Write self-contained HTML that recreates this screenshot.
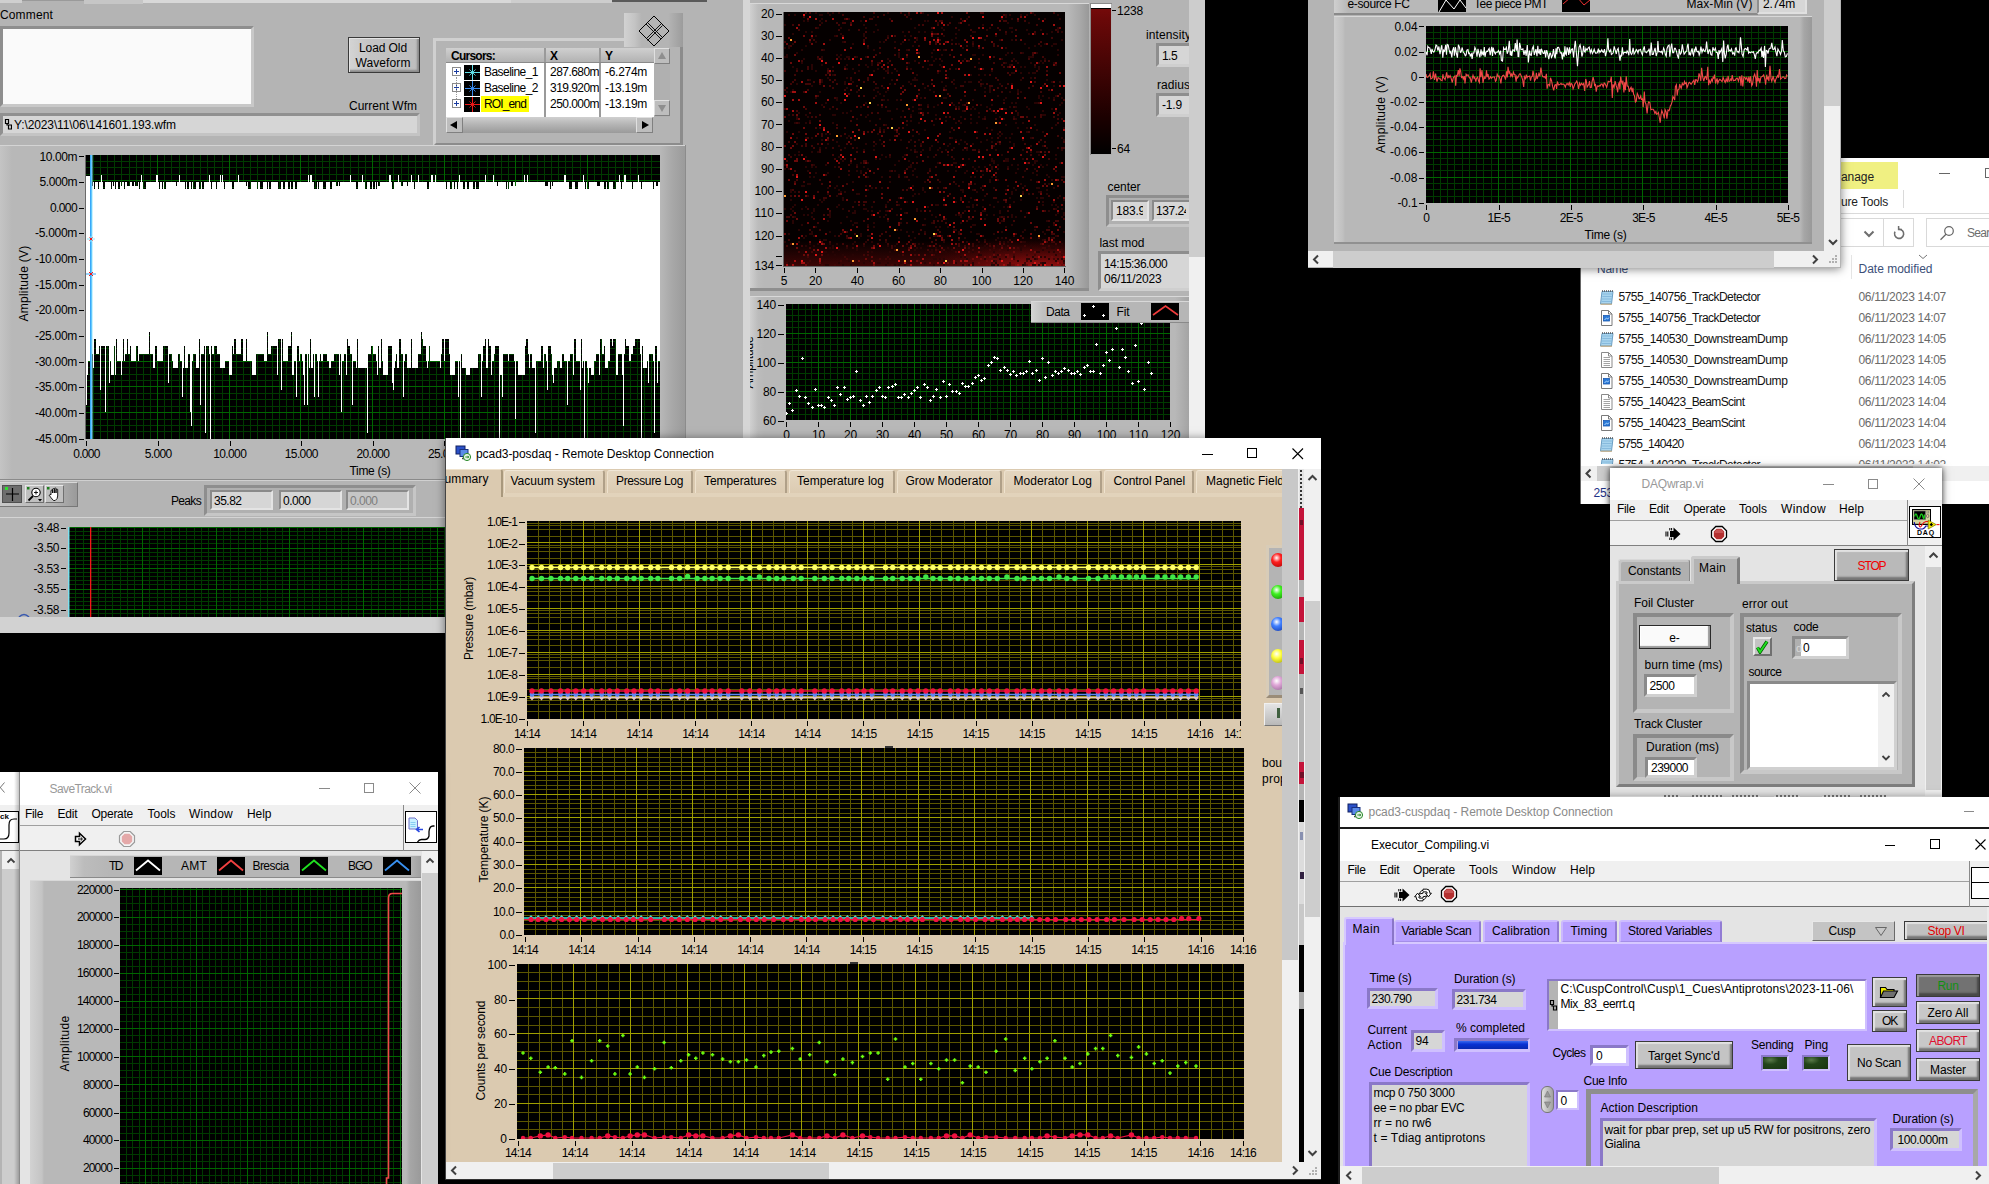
<!DOCTYPE html>
<html><head><meta charset="utf-8"><title>desktop</title>
<style>
html,body{margin:0;padding:0;}
body{background:#000;width:1989px;height:1184px;overflow:hidden;position:relative;font-family:"Liberation Sans",sans-serif;font-size:12px;}
div,svg{position:absolute;}
.win{left:0;top:0;width:1989px;height:1184px;}
</style></head><body>

<!-- partA -->
<div class="win" style="clip-path:inset(0px 784px 551px 0px)"><div style="left:0px;top:0px;width:743px;height:617px;background:#b4b4b4;"></div>
<div style="left:0px;top:616px;width:743px;height:17px;background:#d2d2d2;"></div>
<div style="left:743px;top:0px;width:7px;height:438px;background:#d6d6d6;"></div>
<div style="left:750px;top:0px;width:439px;height:438px;background:#b4b4b4;"></div>
<div style="left:1189px;top:0px;width:16px;height:257px;background:#cdcdcd;"></div>
<div style="left:1189px;top:257px;width:16px;height:181px;background:#f0f0f0;"></div>
<div style="left:0px;top:0px;width:22px;height:3px;background:#cfcfcf;"></div>
<div style="left:22px;top:0px;width:62px;height:1px;background:#9a9a9a;"></div>
<div style="left:84px;top:0px;width:59px;height:4px;background:#c6c6c6;"></div>
<div style="left:143px;top:0px;width:368px;height:3px;background:#d8d8d8;"></div>
<div style="left:511px;top:0px;width:101px;height:3px;background:#cdcdcd;"></div>
<div style="left:612px;top:0px;width:95px;height:2px;background:#5a5a5a;"></div>
<div style="top:8.00px;font-size:12px;line-height:15px;color:#000;white-space:nowrap;letter-spacing:0.140px;left:0px;">Comment</div>
<div style="left:0px;top:26px;width:254px;height:81px;background:#fafafa;box-sizing:border-box;border:3px solid;border-color:#8e8e8e #c8c8c8 #c8c8c8 #8e8e8e;"></div>
<div style="left:348px;top:37px;width:72px;height:36px;background:#c8c8c8;box-sizing:border-box;border:1px solid #3a3a3a;box-shadow:inset 1px 1px 0 #e4e4e4, inset -2px -2px 2px #8a8a8a;background:linear-gradient(90deg,#d4d4d4,#c4c4c4 30%,#bebebe);"></div>
<div style="top:40.50px;font-size:12px;line-height:15px;color:#000;white-space:nowrap;letter-spacing:-0.090px;left:83px;width:600px;text-align:center;">Load Old</div>
<div style="top:55.50px;font-size:12px;line-height:15px;color:#000;white-space:nowrap;letter-spacing:0.095px;left:83px;width:600px;text-align:center;">Waveform</div>
<div style="top:98.50px;font-size:12px;line-height:15px;color:#000;white-space:nowrap;letter-spacing:-0.002px;left:349px;">Current Wfm</div>
<div style="left:0px;top:113px;width:420px;height:23px;background:#d6d6d6;box-sizing:border-box;border:3px solid;border-color:#909090 #c4c4c4 #c4c4c4 #909090;"></div>
<svg style="left:4px;top:118px;" width="8" height="12" viewBox="0 0 8 12" ><path d="M1.5 1.5h3v4h-3zM3 5.5v1.5h2.5M4.5 7h3v4h-3z" stroke="#000" fill="none" stroke-width="1.2"/></svg>
<div style="top:117.50px;font-size:12px;line-height:15px;color:#000;white-space:nowrap;letter-spacing:-0.118px;left:14px;">Y:\2023\11\06\141601.193.wfm</div>
<div style="left:433px;top:38px;width:250px;height:108px;background:#b4b4b4;box-sizing:border-box;border:3px solid;border-color:#d0d0d0 #8c8c8c #8c8c8c #d0d0d0;"></div>
<div style="left:624px;top:13px;width:59px;height:34px;background:#b8b8b8;box-sizing:border-box;border:3px solid;border-color:#d6d6d6 #8c8c8c #8c8c8c #d6d6d6;background:linear-gradient(90deg,#d2d2d2 0,#c4c4c4 18%,#b4b4b4 30%,#b4b4b4 75%,#9c9c9c 100%);border:none;"></div>
<svg style="left:636px;top:14px;" width="36" height="34" viewBox="0 0 36 34" ><path d="M18 2L33 17L18 32L3 17Z" fill="none" stroke="#000" stroke-width="1"/><path d="M10 10L25 25M11.5 8.5L26.5 23.5M25 10L10 25M26.5 11.5L11.5 26.5" stroke="#000" stroke-width="0.9"/></svg>
<div style="left:446px;top:48px;width:208px;height:69px;background:#fff;"></div>
<div style="left:446px;top:48px;width:208px;height:15px;background:#c0c0c0;background:linear-gradient(#d0d0d0,#b0b0b0);"></div>
<div style="left:544px;top:48px;width:2px;height:69px;background:#9a9a9a;"></div>
<div style="left:599px;top:48px;width:2px;height:69px;background:#9a9a9a;"></div>
<div style="left:446px;top:62px;width:208px;height:1px;background:#8a8a8a;"></div>
<div style="top:48.50px;font-size:12px;line-height:15px;color:#000;white-space:nowrap;letter-spacing:-0.753px;font-weight:bold;left:451px;">Cursors:</div>
<div style="top:48.50px;font-size:12px;line-height:15px;color:#000;white-space:nowrap;font-weight:bold;left:550px;">X</div>
<div style="top:48.50px;font-size:12px;line-height:15px;color:#000;white-space:nowrap;font-weight:bold;left:605px;">Y</div>
<svg style="left:452px;top:67px;" width="9" height="9" viewBox="0 0 9 9" ><rect x="0.5" y="0.5" width="8" height="8" fill="#fff" stroke="#8a8a8a"/><path d="M2 4.5h5M4.5 2v5" stroke="#1a3ca0" stroke-width="1"/></svg>
<div style="left:464px;top:65px;width:16px;height:15px;background:#000;"></div>
<svg style="left:464px;top:65px;" width="16" height="15" viewBox="0 0 16 15" ><path d="M8.5 0v15M1 7.5h15" stroke="#5fe0e8" stroke-width="1" shape-rendering="crispEdges"/><path d="M5.5 4.5l6 6M11.5 4.5l-6 6" stroke="#5fe0e8" stroke-width="0.9"/></svg>
<div style="top:65.00px;font-size:12px;line-height:15px;color:#000;white-space:nowrap;letter-spacing:-0.539px;left:484px;">Baseline_1</div>
<div style="top:65.00px;font-size:12px;line-height:15px;color:#000;white-space:nowrap;letter-spacing:-0.548px;left:550px;width:49px;overflow:hidden;">287.680m</div>
<div style="top:65.00px;font-size:12px;line-height:15px;color:#000;white-space:nowrap;letter-spacing:-0.290px;left:605px;">-6.274m</div>
<svg style="left:452px;top:83px;" width="9" height="9" viewBox="0 0 9 9" ><rect x="0.5" y="0.5" width="8" height="8" fill="#fff" stroke="#8a8a8a"/><path d="M2 4.5h5M4.5 2v5" stroke="#1a3ca0" stroke-width="1"/></svg>
<div style="left:464px;top:81px;width:16px;height:15px;background:#000;"></div>
<svg style="left:464px;top:81px;" width="16" height="15" viewBox="0 0 16 15" ><path d="M8.5 0v15M1 7.5h15" stroke="#3a8cf0" stroke-width="1" shape-rendering="crispEdges"/><path d="M5.5 4.5l6 6M11.5 4.5l-6 6" stroke="#3a8cf0" stroke-width="0.9"/></svg>
<div style="top:81.00px;font-size:12px;line-height:15px;color:#000;white-space:nowrap;letter-spacing:-0.539px;left:484px;">Baseline_2</div>
<div style="top:81.00px;font-size:12px;line-height:15px;color:#000;white-space:nowrap;letter-spacing:-0.548px;left:550px;width:49px;overflow:hidden;">319.920m</div>
<div style="top:81.00px;font-size:12px;line-height:15px;color:#000;white-space:nowrap;letter-spacing:-0.290px;left:605px;">-13.19m</div>
<svg style="left:452px;top:99px;" width="9" height="9" viewBox="0 0 9 9" ><rect x="0.5" y="0.5" width="8" height="8" fill="#fff" stroke="#8a8a8a"/><path d="M2 4.5h5M4.5 2v5" stroke="#1a3ca0" stroke-width="1"/></svg>
<div style="left:464px;top:97px;width:16px;height:15px;background:#000;"></div>
<svg style="left:464px;top:97px;" width="16" height="15" viewBox="0 0 16 15" ><path d="M8.5 0v15M1 7.5h15" stroke="#f01818" stroke-width="1" shape-rendering="crispEdges"/><path d="M5.5 4.5l6 6M11.5 4.5l-6 6" stroke="#f01818" stroke-width="0.9"/></svg>
<div style="left:481px;top:96px;width:48px;height:16px;background:#ffff00;"></div>
<div style="top:97.00px;font-size:12px;line-height:15px;color:#000;white-space:nowrap;letter-spacing:-0.863px;left:484px;">ROI_end</div>
<div style="top:97.00px;font-size:12px;line-height:15px;color:#000;white-space:nowrap;letter-spacing:-0.548px;left:550px;width:49px;overflow:hidden;">250.000m</div>
<div style="top:97.00px;font-size:12px;line-height:15px;color:#000;white-space:nowrap;letter-spacing:-0.290px;left:605px;">-13.19m</div>
<div style="left:456px;top:77px;width:1px;height:22px;border-left:1px dotted #999;"></div>
<div style="left:654px;top:48px;width:16px;height:69px;background:#b0b0b0;"></div>
<div style="left:654px;top:48px;width:16px;height:16px;background:#bdbdbd;box-sizing:border-box;border:1px solid;border-color:#e0e0e0 #808080 #808080 #e0e0e0;"></div>
<div style="left:654px;top:100px;width:16px;height:16px;background:#bdbdbd;box-sizing:border-box;border:1px solid;border-color:#e0e0e0 #808080 #808080 #e0e0e0;"></div>
<svg style="left:654px;top:48px;" width="16" height="16" viewBox="0 0 16 16" ><path d="M8 4L12 11H4Z" fill="#8e8e8e"/></svg>
<svg style="left:654px;top:100px;" width="16" height="16" viewBox="0 0 16 16" ><path d="M8 12L12 5H4Z" fill="#8e8e8e"/></svg>
<div style="left:446px;top:117px;width:207px;height:16px;background:#b0b0b0;background:linear-gradient(#d0d0d0,#b8b8b8 40%,#9a9a9a);"></div>
<div style="left:446px;top:117px;width:17px;height:16px;background:#bdbdbd;box-sizing:border-box;border:1px solid;border-color:#e0e0e0 #808080 #808080 #e0e0e0;"></div>
<div style="left:636px;top:117px;width:17px;height:16px;background:#bdbdbd;box-sizing:border-box;border:1px solid;border-color:#e0e0e0 #808080 #808080 #e0e0e0;"></div>
<svg style="left:446px;top:117px;" width="17" height="16" viewBox="0 0 17 16" ><path d="M4 8L11 4V12Z" fill="#000"/></svg>
<svg style="left:636px;top:117px;" width="17" height="16" viewBox="0 0 17 16" ><path d="M13 8L6 4V12Z" fill="#000"/></svg>
<div style="left:0px;top:145px;width:685px;height:335px;background:#b8b8b8;border-top:1px solid #d4d4d4;background:linear-gradient(90deg,#c4c4c4 0,#b8b8b8 12px,#b8b8b8 660px,#a8a8a8 672px,#9c9c9c 684px);"></div>
<div style="left:685px;top:145px;width:1px;height:335px;background:#8c8c8c;"></div>
<svg style="left:86px;top:155px;" width="574" height="284" viewBox="0 0 574 284" ><rect width="574" height="284" fill="#000"/><path d="M7.2 0V284M14.3 0V284M21.5 0V284M28.6 0V284M35.8 0V284M43.0 0V284M50.1 0V284M57.3 0V284M64.4 0V284M78.8 0V284M85.9 0V284M93.1 0V284M100.2 0V284M107.4 0V284M114.6 0V284M121.7 0V284M128.9 0V284M136.0 0V284M150.4 0V284M157.5 0V284M164.7 0V284M171.8 0V284M179.0 0V284M186.2 0V284M193.3 0V284M200.5 0V284M207.6 0V284M222.0 0V284M229.1 0V284M236.3 0V284M243.4 0V284M250.6 0V284M257.8 0V284M264.9 0V284M272.1 0V284M279.2 0V284M293.6 0V284M300.7 0V284M307.9 0V284M315.0 0V284M322.2 0V284M329.4 0V284M336.5 0V284M343.7 0V284M350.8 0V284M365.2 0V284M372.3 0V284M379.5 0V284M386.6 0V284M393.8 0V284M401.0 0V284M408.1 0V284M415.3 0V284M422.4 0V284M436.8 0V284M443.9 0V284M451.1 0V284M458.2 0V284M465.4 0V284M472.6 0V284M479.7 0V284M486.9 0V284M494.0 0V284M508.4 0V284M515.5 0V284M522.7 0V284M529.8 0V284M537.0 0V284M544.2 0V284M551.3 0V284M558.5 0V284M565.6 0V284M0 6.4H574M0 12.9H574M0 19.3H574M0 32.2H574M0 38.6H574M0 45.1H574M0 58.0H574M0 64.4H574M0 70.8H574M0 83.7H574M0 90.2H574M0 96.6H574M0 109.5H574M0 115.9H574M0 122.4H574M0 135.2H574M0 141.7H574M0 148.1H574M0 161.0H574M0 167.4H574M0 173.9H574M0 186.8H574M0 193.2H574M0 199.6H574M0 212.5H574M0 219.0H574M0 225.4H574M0 238.3H574M0 244.7H574M0 251.2H574M0 264.0H574M0 270.5H574M0 276.9H574" stroke="#003a00" stroke-width="1" fill="none" shape-rendering="crispEdges"/><path d="M71.6 0V284M143.2 0V284M214.8 0V284M286.4 0V284M358.0 0V284M429.6 0V284M501.2 0V284M0 25.8H574M0 51.5H574M0 77.2H574M0 103.0H574M0 128.8H574M0 154.5H574M0 180.2H574M0 206.0H574M0 231.8H574M0 257.5H574" stroke="#006600" stroke-width="1" fill="none" shape-rendering="crispEdges"/><path d="M0 21H1H2H3H4H5H6V31H7V27H8V34H9V27H10H11H12V34H13V27H14H15V20H16V27H17V34H18H19V27H20H21H22H23H24H25V34H26V27H27V31H28V27H29V34H30V27H31H32V34H33H34V27H35V31H36V27H37H38V34H39V27H40H41V31H42H43H44V27H45H46V31H47H48V27H49V31H50H51H52V27H53V34H54V27H55V20H56V27H57V34H58H59H60V27H61H62H63H64H65H66H67H68H69H70V20H71H72V27H73V34H74V27H75H76V34H77V27H78V34H79H80V27H81H82H83H84H85H86H87H88H89H90V31H91V27H92H93V20H94V27H95H96H97H98H99V34H100V27H101V34H102H103V27H104H105V34H106V27H107V34H108H109H110V27H111H112H113V34H114H115V27H116V34H117H118V27H119H120H121H122H123V20H124V27H125V34H126V27H127H128H129H130V34H131V27H132H133H134V20H135V27H136V20H137V27H138V34H139V27H140H141H142H143H144H145H146V34H147H148V27H149H150H151H152V20H153V27H154H155H156H157H158H159H160V31H161V27H162V34H163H164H165V27H166H167H168H169H170H171V34H172V27H173H174V34H175H176H177V27H178H179H180H181V34H182V27H183V34H184H185V27H186H187H188H189H190H191H192V34H193H194H195V27H196H197V34H198H199V27H200H201H202V34H203H204V27H205V34H206H207V27H208H209V34H210H211V27H212H213H214H215H216H217H218H219H220H221H222V20H223V27H224V20H225H226V27H227H228V34H229H230H231V27H232V34H233V27H234H235H236H237V34H238H239H240V27H241H242H243H244V34H245H246V27H247H248H249H250V31H251H252V27H253V31H254V27H255H256H257H258H259H260H261H262H263H264V20H265V27H266H267H268H269H270V34H271H272V27H273H274H275H276V20H277V27H278H279V34H280H281V27H282H283H284V34H285H286V27H287V34H288H289V27H290V34H291V27H292V31H293H294V27H295H296H297H298H299H300H301H302H303V20H304H305V27H306V34H307H308V27H309H310H311H312V20H313V27H314H315V31H316H317V27H318H319H320H321V31H322V27H323H324H325V20H326V27H327H328V34H329V27H330H331H332V20H333V27H334H335H336H337H338H339H340H341V34H342H343V27H344H345V20H346H347V27H348H349V20H350V27H351H352H353H354H355H356H357H358H359H360V34H361V27H362H363H364V34H365H366V27H367H368V34H369V27H370H371V34H372V27H373V20H374V27H375H376H377V34H378H379V27H380H381V34H382H383V27H384H385H386H387V34H388H389V27H390V34H391H392H393V27H394H395H396H397H398H399V20H400V27H401H402H403H404H405H406H407V20H408V27H409H410H411V31H412V27H413H414H415H416H417H418H419H420V34H421V27H422V34H423V27H424H425V31H426H427V27H428H429V31H430V27H431H432H433H434H435H436H437H438V20H439V27H440H441V20H442V27H443H444H445H446H447H448H449H450H451H452H453H454H455H456H457H458H459V31H460H461H462V27H463H464V34H465V27H466V31H467V27H468H469H470H471H472H473H474H475H476H477H478V20H479H480V27H481H482H483V34H484H485H486V27H487H488H489V34H490H491H492V27H493H494H495H496H497V20H498V27H499V34H500V27H501V34H502H503V27H504H505H506H507H508H509H510H511V31H512H513H514V27H515H516H517H518V34H519H520V27H521V34H522H523V27H524H525H526H527V34H528H529H530V27H531H532H533V20H534V27H535V34H536V27H537H538V20H539H540V27H541H542H543H544H545H546V34H547V27H548H549H550H551H552V20H553V27H554H555V34H556V27H557H558H559H560H561H562H563H564H565H566H567V34H568V27H569H570V31H571H572V27H573H574V206H573V206H572V228H571V191H570V191H569V278H568V206H567V198.5H566V198.5H565V198.5H564V198.5H563V228H562V206H561V213H560V213H559V213H558V213H557V191H556V284H555V198.5H554V184H553V184H552V184H551V184H550V184H549V191H548V191H547V198.5H546V198.5H545V206H544V206H543V191H542V191H541V191H540V184H539V198.5H538V271H537V220H536V198.5H535V198.5H534V198.5H533V198.5H532V220H531V220H530V184H529V184H528V184H527V191H526V184H525V184H524V206H523V206H522V213H521V213H520V213H519V191H518V198.5H517V198.5H516V184H515V184H514V220H513V198.5H512V198.5H511V198.5H510V206H509V206H508V220H507V220H506V220H505V213H504V213H503V228H502V213H501V206H500V206H499V284H498V206H497V213H496V184H495V235H494V206H493V206H492V206H491V206H490V184H489V184H488V220H487V198.5H486V198.5H485V198.5H484V206H483V206H482V250H481V206H480V206H479V206H478V198.5H477V198.5H476V213H475V213H474V206H473V206H472V206H471V213H470V213H469V213H468V228H467V220H466V198.5H465V191H464V191H463V191H462V235H461V206H460V198.5H459V198.5H458V213H457V191H456V191H455V206H454V206H453V206H452V206H451V206H450V278H449V213H448V213H447V213H446V198.5H445V198.5H444V213H443V198.5H442V184H441V184H440V191H439V220H438V220H437V220H436V220H435V220H434V220H433V220H432V206H431V206H430V264H429V206H428V198.5H427V198.5H426V198.5H425V198.5H424V198.5H423V206H422V198.5H421V198.5H420V198.5H419V198.5H418V198.5H417V242H416V220H415V220H414V284H413V191H412V191H411V191H410V191H409V198.5H408V206H407V206H406V220H405V191H404V191H403V184H402V213H401V213H400V184H399V191H398V191H397V206H396V242H395V198.5H394V198.5H393V198.5H392V213H391V213H390V213H389V213H388V213H387V213H386V213H385V213H384V220H383V220H382V220H381V220H380V213H379V213H378V213H377V213H376V198.5H375V284H374V206H373V242H372V206H371V206H370V206H369V220H368V220H367V220H366V220H365V220H364V198.5H363V184H362V184H361V184H360V184H359V206H358V184H357V184H356V198.5H355V213H354V206H353V206H352V206H351V206H350V206H349V206H348V206H347V206H346V206H345V206H344V191H343V206H342V213H341V206H340V191H339V191H338V191H337V184H336V177H335V198.5H334V198.5H333V198.5H332V213H331V213H330V213H329V213H328V213H327V213H326V184H325V213H324V213H323V213H322V213H321V198.5H320V198.5H319V206H318V242H317V198.5H316V198.5H315V184H314V184H313V213H312V213H311V198.5H310V206H309V213H308V235H307V228H306V191H305V191H304V191H303V191H302V220H301V220H300V220H299V220H298V220H297V206H296V184H295V213H294V213H293V191H292V220H291V206H290V198.5H289V198.5H288V198.5H287V191H286V191H285V198.5H284V198.5H283V198.5H282V278H281V213H280V213H279V213H278V213H277V213H276V213H275V213H274V213H273V213H272V184H271V213H270V206H269V206H268V206H267V250H266V198.5H265V198.5H264V191H263V191H262V184H261V220H260V198.5H259V198.5H258V206H257V206H256V257H255V198.5H254V220H253V198.5H252V198.5H251V198.5H250V198.5H249V198.5H248V206H247V206H246V206H245V213H244V213H243V206H242V206H241V198.5H240V198.5H239V198.5H238V198.5H237V206H236V206H235V198.5H234V206H233V242H232V206H231V198.5H230V198.5H229V242H228V198.5H227V213H226V213H225V184H224V213H223V198.5H222V250H221V198.5H220V198.5H219V250H218V220H217V206H216V198.5H215V198.5H214V206H213V191H212V191H211V242H210V206H209V206H208V220H207V220H206V177H205V191H204V191H203V191H202V206H201V206H200V206H199V206H198V206H197V184H196V235H195V184H194V184H193V184H192V220H191V191H190V191H189V191H188V191H187V191H186V191H185V198.5H184V198.5H183V198.5H182V177H181V206H180V206H179V206H178V198.5H177V198.5H176V198.5H175V198.5H174V198.5H173V198.5H172V198.5H171V198.5H170V220H169V220H168V220H167V220H166V206H165V206H164V206H163V206H162V206H161V184H160V206H159V206H158V206H157V184H156V184H155V198.5H154V198.5H153V198.5H152V198.5H151V198.5H150V184H149V184H148V198.5H147V191H146V220H145V220H144V220H143V206H142V206H141V206H140V206H139V213H138V213H137V213H136V213H135V213H134V198.5H133V198.5H132V198.5H131V191H130V191H129V191H128V198.5H127V198.5H126V191H125V284H124V198.5H123V191H122V191H121V191H120V278H119V191H118V198.5H117V198.5H116V198.5H115V250H114V184H113V213H112V213H111V213H110V198.5H109V198.5H108V198.5H107V206H106V271H105V257H104V198.5H103V198.5H102V213H101V213H100V213H99V191H98V213H97V242H96V206H95V206H94V198.5H93V198.5H92V213H91V213H90V213H89V213H88V213H87V206H86V198.5H85V198.5H84V198.5H83V228H82V191H81V191H80V191H79V191H78V191H77V206H76V206H75V206H74V206H73V206H72V206H71V191H70V191H69V213H68V213H67V198.5H66V198.5H65V198.5H64V177H63V198.5H62V198.5H61V198.5H60V198.5H59V198.5H58V198.5H57V198.5H56V198.5H55V198.5H54V198.5H53V206H52V191H51V191H50V206H49V206H48V206H47V206H46V206H45V191H44V198.5H43V198.5H42V184H41V198.5H40V198.5H39V206H38V184H37V206H36V220H35V206H34V206H33V206H32V206H31V184H30V220H29V191H28V220H27V220H26V220H25V206H24V228H23V191H22V191H21V191H20V257H19V191H18V191H17V191H16V191H15V235H14V191H13V198.5H12V198.5H11V198.5H10V184H9V184H8V213H7V198.5H6V213H5V206H4V206H3V206H2V220H1V250H0Z" fill="#fff" shape-rendering="crispEdges"/><rect x="4" y="0" width="2" height="284" fill="#38a8f8"/><rect x="5.5" y="0" width="1" height="284" fill="#8fe8ff"/><path d="M1 84h8M5 81v6" stroke="#8fe8ff" stroke-width="1"/><path d="M3.5 82.5l3 3M6.5 82.5l-3 3" stroke="#f01818" stroke-width="1"/><path d="M0 119h10" stroke="#38a8f8" stroke-width="1"/><path d="M3 117l4 4M7 117l-4 4" stroke="#f01818" stroke-width="1"/></svg>
<div style="left:85px;top:155px;width:1px;height:284px;background:#6a6a6a;"></div>
<div style="top:149.50px;font-size:12px;line-height:15px;color:#000;white-space:nowrap;letter-spacing:-0.423px;right:1912px;text-align:right;">10.00m</div>
<div style="left:79px;top:156px;width:5px;height:1px;background:#000;"></div>
<div style="top:175.15px;font-size:12px;line-height:15px;color:#000;white-space:nowrap;letter-spacing:-0.423px;right:1912px;text-align:right;">5.000m</div>
<div style="left:79px;top:182px;width:5px;height:1px;background:#000;"></div>
<div style="top:200.80px;font-size:12px;line-height:15px;color:#000;white-space:nowrap;letter-spacing:-0.608px;right:1912px;text-align:right;">0.000</div>
<div style="left:79px;top:208px;width:5px;height:1px;background:#000;"></div>
<div style="top:226.45px;font-size:12px;line-height:15px;color:#000;white-space:nowrap;letter-spacing:-0.290px;right:1912px;text-align:right;">-5.000m</div>
<div style="left:79px;top:233px;width:5px;height:1px;background:#000;"></div>
<div style="top:252.10px;font-size:12px;line-height:15px;color:#000;white-space:nowrap;letter-spacing:-0.290px;right:1912px;text-align:right;">-10.00m</div>
<div style="left:79px;top:259px;width:5px;height:1px;background:#000;"></div>
<div style="top:277.75px;font-size:12px;line-height:15px;color:#000;white-space:nowrap;letter-spacing:-0.290px;right:1912px;text-align:right;">-15.00m</div>
<div style="left:79px;top:285px;width:5px;height:1px;background:#000;"></div>
<div style="top:303.40px;font-size:12px;line-height:15px;color:#000;white-space:nowrap;letter-spacing:-0.290px;right:1912px;text-align:right;">-20.00m</div>
<div style="left:79px;top:310px;width:5px;height:1px;background:#000;"></div>
<div style="top:329.05px;font-size:12px;line-height:15px;color:#000;white-space:nowrap;letter-spacing:-0.290px;right:1912px;text-align:right;">-25.00m</div>
<div style="left:79px;top:336px;width:5px;height:1px;background:#000;"></div>
<div style="top:354.70px;font-size:12px;line-height:15px;color:#000;white-space:nowrap;letter-spacing:-0.290px;right:1912px;text-align:right;">-30.00m</div>
<div style="left:79px;top:362px;width:5px;height:1px;background:#000;"></div>
<div style="top:380.35px;font-size:12px;line-height:15px;color:#000;white-space:nowrap;letter-spacing:-0.290px;right:1912px;text-align:right;">-35.00m</div>
<div style="left:79px;top:387px;width:5px;height:1px;background:#000;"></div>
<div style="top:406.00px;font-size:12px;line-height:15px;color:#000;white-space:nowrap;letter-spacing:-0.290px;right:1912px;text-align:right;">-40.00m</div>
<div style="left:79px;top:413px;width:5px;height:1px;background:#000;"></div>
<div style="top:431.65px;font-size:12px;line-height:15px;color:#000;white-space:nowrap;letter-spacing:-0.290px;right:1912px;text-align:right;">-45.00m</div>
<div style="left:79px;top:439px;width:5px;height:1px;background:#000;"></div>
<div style="left:-176px;top:275.50px;width:400px;text-align:center;font-size:12px;line-height:15px;color:#000;white-space:nowrap;transform:rotate(-90deg);transform-origin:50% 50%;letter-spacing:0.253px;">Amplitude (V)</div>
<div style="left:86px;top:441px;width:1px;height:5px;background:#000;"></div>
<div style="top:446.50px;font-size:12px;line-height:15px;color:#000;white-space:nowrap;letter-spacing:-0.708px;left:-213.5px;width:600px;text-align:center;">0.000</div>
<div style="left:158px;top:441px;width:1px;height:5px;background:#000;"></div>
<div style="top:446.50px;font-size:12px;line-height:15px;color:#000;white-space:nowrap;letter-spacing:-0.708px;left:-141.9px;width:600px;text-align:center;">5.000</div>
<div style="left:230px;top:441px;width:1px;height:5px;background:#000;"></div>
<div style="top:446.50px;font-size:12px;line-height:15px;color:#000;white-space:nowrap;letter-spacing:-0.619px;left:-70.30000000000001px;width:600px;text-align:center;">10.000</div>
<div style="left:301px;top:441px;width:1px;height:5px;background:#000;"></div>
<div style="top:446.50px;font-size:12px;line-height:15px;color:#000;white-space:nowrap;letter-spacing:-0.619px;left:1.2999999999999545px;width:600px;text-align:center;">15.000</div>
<div style="left:373px;top:441px;width:1px;height:5px;background:#000;"></div>
<div style="top:446.50px;font-size:12px;line-height:15px;color:#000;white-space:nowrap;letter-spacing:-0.619px;left:72.89999999999998px;width:600px;text-align:center;">20.000</div>
<div style="left:444px;top:441px;width:1px;height:5px;background:#000;"></div>
<div style="top:446.50px;font-size:12px;line-height:15px;color:#000;white-space:nowrap;letter-spacing:-0.619px;left:144.5px;width:600px;text-align:center;">25.000</div>
<div style="top:463.50px;font-size:12px;line-height:15px;color:#000;white-space:nowrap;letter-spacing:-0.319px;left:70px;width:600px;text-align:center;">Time (s)</div>
<div style="left:0px;top:479px;width:743px;height:1px;background:#8a8a8a;"></div>
<div style="left:0px;top:480px;width:743px;height:1px;background:#d0d0d0;"></div>
<div style="left:0px;top:482px;width:78px;height:25px;background:#b0b0b0;background:linear-gradient(90deg,#c8c8c8,#b4b4b4 70%,#9a9a9a);border-right:1px solid #777;border-bottom:1px solid #777;border-top:1px solid #d8d8d8;box-sizing:border-box;"></div>
<div style="left:2px;top:485px;width:20px;height:18px;background:#6e6e6e;box-sizing:border-box;border:1px solid #505050;"></div>
<svg style="left:2px;top:485px;" width="20" height="18" viewBox="0 0 20 18" ><path d="M4 9h13M10.5 3v13" stroke="#000" stroke-width="1.2"/><rect x="3" y="2" width="3" height="3" fill="#30e030"/></svg>
<div style="left:25px;top:485px;width:19px;height:18px;background:#c0c0c0;box-sizing:border-box;border:1px solid;border-color:#e8e8e8 #707070 #707070 #e8e8e8;"></div>
<svg style="left:25px;top:485px;" width="19" height="18" viewBox="0 0 19 18" ><circle cx="11" cy="7.5" r="4.2" fill="#fff" stroke="#000" stroke-width="1.1"/><path d="M8 11l-4.5 4.5" stroke="#000" stroke-width="1.8"/><path d="M9 7.5h4M11 5.5v4" stroke="#000" stroke-width="0.9"/><path d="M13 14h4l-2 2.5z" fill="#000"/><rect x="2" y="2" width="2.5" height="2.5" fill="#208020"/></svg>
<div style="left:45px;top:485px;width:19px;height:18px;background:#c0c0c0;box-sizing:border-box;border:1px solid;border-color:#e8e8e8 #707070 #707070 #e8e8e8;"></div>
<svg style="left:45px;top:485px;" width="19" height="18" viewBox="0 0 19 18" ><path d="M6 9V5.5q1-1 1.6 0V8V4q1-1 1.7 0V8V3.5q1-1 1.7 0V8V4.5q1-1 1.7 0V11q0 3-2.5 4.5H8.5Q6 13 4.2 10.2q.6-1.3 1.8-.4z" fill="#fff" stroke="#000" stroke-width="0.9"/><rect x="2" y="2" width="2.5" height="2.5" fill="#208020"/></svg>
<div style="top:493.50px;font-size:12px;line-height:15px;color:#000;white-space:nowrap;letter-spacing:-0.671px;left:171px;">Peaks</div>
<div style="left:204px;top:485px;width:212px;height:31px;background:#b0b0b0;box-sizing:border-box;border:3px solid;border-color:#8e8e8e #c6c6c6 #c6c6c6 #8e8e8e;"></div>
<div style="left:210px;top:490px;width:63px;height:20px;background:#d6d6d6;box-sizing:border-box;border:2px solid;border-color:#8a8a8a #e4e4e4 #e4e4e4 #8a8a8a;"></div>
<div style="top:493.50px;font-size:12px;line-height:15px;color:#000;white-space:nowrap;letter-spacing:-0.508px;left:214px;">35.82</div>
<div style="left:279px;top:490px;width:63px;height:20px;background:#d6d6d6;box-sizing:border-box;border:2px solid;border-color:#8a8a8a #e4e4e4 #e4e4e4 #8a8a8a;"></div>
<div style="top:493.50px;font-size:12px;line-height:15px;color:#000;white-space:nowrap;letter-spacing:-0.508px;left:283px;">0.000</div>
<div style="left:346px;top:490px;width:63px;height:20px;background:#c6c6c6;box-sizing:border-box;border:2px solid;border-color:#8a8a8a #e4e4e4 #e4e4e4 #8a8a8a;"></div>
<div style="top:493.50px;font-size:12px;line-height:15px;color:#7d7d7d;white-space:nowrap;letter-spacing:-0.508px;left:350px;">0.000</div>
<div style="left:0px;top:517px;width:743px;height:1px;background:#d4d4d4;"></div>
<div style="left:0px;top:518px;width:743px;height:99px;background:#b6b6b6;"></div>
<svg style="left:68px;top:527px;" width="675" height="90" viewBox="0 0 675 90" ><rect width="675" height="90" fill="#000"/><path d="M7.9 0V90M15.3 0V90M22.6 0V90M30.0 0V90M37.4 0V90M44.8 0V90M52.2 0V90M59.5 0V90M66.9 0V90M81.7 0V90M89.1 0V90M96.4 0V90M103.8 0V90M111.2 0V90M118.6 0V90M126.0 0V90M133.3 0V90M140.7 0V90M155.5 0V90M162.9 0V90M170.2 0V90M177.6 0V90M185.0 0V90M192.4 0V90M199.8 0V90M207.1 0V90M214.5 0V90M229.3 0V90M236.7 0V90M244.0 0V90M251.4 0V90M258.8 0V90M266.2 0V90M273.6 0V90M280.9 0V90M288.3 0V90M303.1 0V90M310.5 0V90M317.8 0V90M325.2 0V90M332.6 0V90M340.0 0V90M347.4 0V90M354.7 0V90M362.1 0V90M376.9 0V90M384.3 0V90M391.6 0V90M399.0 0V90M406.4 0V90M413.8 0V90M421.2 0V90M428.5 0V90M435.9 0V90M450.7 0V90M458.1 0V90M465.4 0V90M472.8 0V90M480.2 0V90M487.6 0V90M495.0 0V90M502.3 0V90M509.7 0V90M524.5 0V90M531.9 0V90M539.2 0V90M546.6 0V90M554.0 0V90M561.4 0V90M568.8 0V90M576.1 0V90M583.5 0V90M598.3 0V90M605.7 0V90M613.0 0V90M620.4 0V90M627.8 0V90M635.2 0V90M642.6 0V90M649.9 0V90M657.3 0V90M672.1 0V90M679.5 0V90M686.8 0V90M694.2 0V90M0 4.6H675M0 8.7H675M0 12.8H675M0 16.9H675M0 25.1H675M0 29.2H675M0 33.3H675M0 37.4H675M0 45.6H675M0 49.7H675M0 53.8H675M0 57.9H675M0 66.1H675M0 70.2H675M0 74.3H675M0 78.4H675M0 86.6H675M0 90.7H675" stroke="#003a00" stroke-width="1" fill="none" shape-rendering="crispEdges"/><path d="M74.3 0V90M148.1 0V90M221.9 0V90M295.7 0V90M369.5 0V90M443.3 0V90M517.1 0V90M590.9 0V90M664.7 0V90M0 0.5H675M0 21.0H675M0 41.5H675M0 62.0H675M0 82.5H675" stroke="#006600" stroke-width="1" fill="none" shape-rendering="crispEdges"/><rect x="0" y="0" width="1.5" height="90" fill="#7ee0f0"/><rect x="22" y="0" width="1.3" height="90" fill="#f01818"/></svg>
<div style="top:520.50px;font-size:12px;line-height:15px;color:#000;white-space:nowrap;letter-spacing:-0.372px;right:1930px;text-align:right;">-3.48</div>
<div style="left:61px;top:528px;width:5px;height:1px;background:#000;"></div>
<div style="top:541.00px;font-size:12px;line-height:15px;color:#000;white-space:nowrap;letter-spacing:-0.372px;right:1930px;text-align:right;">-3.50</div>
<div style="left:61px;top:548px;width:5px;height:1px;background:#000;"></div>
<div style="top:561.50px;font-size:12px;line-height:15px;color:#000;white-space:nowrap;letter-spacing:-0.372px;right:1930px;text-align:right;">-3.53</div>
<div style="left:61px;top:568px;width:5px;height:1px;background:#000;"></div>
<div style="top:582.00px;font-size:12px;line-height:15px;color:#000;white-space:nowrap;letter-spacing:-0.372px;right:1930px;text-align:right;">-3.55</div>
<div style="left:61px;top:589px;width:5px;height:1px;background:#000;"></div>
<div style="top:602.50px;font-size:12px;line-height:15px;color:#000;white-space:nowrap;letter-spacing:-0.372px;right:1930px;text-align:right;">-3.58</div>
<div style="left:61px;top:610px;width:5px;height:1px;background:#000;"></div>
<svg style="left:18px;top:612px;" width="12" height="5" viewBox="0 0 12 5" ><path d="M1 5q5-5 10 0" fill="none" stroke="#3a5ab0" stroke-width="1.5"/></svg></div>
<!-- partM -->
<div class="win" style="clip-path:inset(0px 784px 746px 750px)"><div style="left:750px;top:0px;width:339px;height:291px;background:#b8b8b8;background:linear-gradient(90deg,#d0d0d0 0,#bcbcbc 8px,#b8b8b8 14px,#b8b8b8 318px,#a8a8a8 330px,#989898 339px);"></div>
<div style="left:750px;top:288px;width:339px;height:3px;background:#8e8e8e;"></div>
<div style="left:750px;top:0px;width:339px;height:3px;background:#b4b4b4;"></div>
<div style="left:750px;top:3px;width:339px;height:1px;background:#d8d8d8;"></div>
<svg style="left:784px;top:12px;shape-rendering:crispEdges;" width="281" height="254" viewBox="0 0 281 254" ><rect width="281" height="254" fill="#050000"/><defs><linearGradient id="gl1" x1="0" y1="0" x2="0" y2="1"><stop offset="0.9" stop-color="#600808" stop-opacity="0"/><stop offset="1" stop-color="#600808" stop-opacity="0.6"/></linearGradient><radialGradient id="gl2" gradientUnits="userSpaceOnUse" cx="253" cy="258" r="130" gradientTransform="translate(0 258) scale(1 0.27) translate(0 -258)"><stop offset="0" stop-color="#c01414" stop-opacity="0.85"/><stop offset="0.45" stop-color="#900c0c" stop-opacity="0.45"/><stop offset="1" stop-color="#500000" stop-opacity="0"/></radialGradient></defs><rect width="281" height="254" fill="url(#gl1)"/><rect width="281" height="254" fill="url(#gl2)"/><path d="M21 0h2v2h-2zM25 0h2v2h-2zM89 0h2v2h-2zM116 0h2v2h-2zM124 0h2v2h-2zM196 0h2v2h-2zM198 0h2v2h-2zM269 0h2v2h-2zM58 2h2v2h-2zM99 2h2v2h-2zM120 2h2v2h-2zM219 2h2v2h-2zM19 4h2v2h-2zM79 4h2v2h-2zM93 4h2v2h-2zM122 4h2v2h-2zM184 4h2v2h-2zM60 6h2v2h-2zM85 6h2v2h-2zM87 6h2v2h-2zM176 6h2v2h-2zM254 6h2v2h-2zM41 8h2v2h-2zM155 8h2v2h-2zM157 8h2v2h-2zM178 8h2v2h-2zM219 8h2v2h-2zM221 8h2v2h-2zM233 8h2v2h-2zM240 8h2v2h-2zM52 10h2v2h-2zM58 10h2v2h-2zM60 10h2v2h-2zM66 10h2v2h-2zM165 10h2v2h-2zM8 12h2v2h-2zM35 12h2v2h-2zM54 12h2v2h-2zM134 12h2v2h-2zM138 12h2v2h-2zM153 12h2v2h-2zM163 12h2v2h-2zM252 12h2v2h-2zM31 15h2v2h-2zM147 15h2v2h-2zM171 15h2v2h-2zM213 15h2v2h-2zM14 17h2v2h-2zM54 17h2v2h-2zM74 17h2v2h-2zM186 17h2v2h-2zM215 17h2v2h-2zM231 17h2v2h-2zM271 17h2v2h-2zM81 19h2v2h-2zM124 19h2v2h-2zM221 19h2v2h-2zM250 19h2v2h-2zM273 19h2v2h-2zM149 21h2v2h-2zM151 21h2v2h-2zM52 23h2v2h-2zM58 23h2v2h-2zM110 23h2v2h-2zM186 23h2v2h-2zM81 25h2v2h-2zM103 25h2v2h-2zM153 25h2v2h-2zM267 25h2v2h-2zM29 27h2v2h-2zM79 27h2v2h-2zM101 27h2v2h-2zM155 27h2v2h-2zM231 27h2v2h-2zM0 29h2v2h-2zM60 29h2v2h-2zM79 29h2v2h-2zM130 29h2v2h-2zM151 29h2v2h-2zM256 29h2v2h-2zM151 31h2v2h-2zM167 31h2v2h-2zM171 31h2v2h-2zM188 31h2v2h-2zM209 31h2v2h-2zM254 31h2v2h-2zM6 33h2v2h-2zM83 33h2v2h-2zM134 33h2v2h-2zM182 33h2v2h-2zM209 33h2v2h-2zM213 33h2v2h-2zM95 35h2v2h-2zM110 35h2v2h-2zM194 35h2v2h-2zM37 37h2v2h-2zM124 37h2v2h-2zM161 37h2v2h-2zM95 40h2v2h-2zM134 40h2v2h-2zM227 40h2v2h-2zM236 40h2v2h-2zM248 40h2v2h-2zM91 42h2v2h-2zM110 42h2v2h-2zM165 42h2v2h-2zM248 42h2v2h-2zM33 44h2v2h-2zM70 44h2v2h-2zM209 44h2v2h-2zM258 44h2v2h-2zM64 46h2v2h-2zM155 46h2v2h-2zM194 46h2v2h-2zM244 46h2v2h-2zM17 48h2v2h-2zM105 48h2v2h-2zM143 48h2v2h-2zM178 48h2v2h-2zM184 48h2v2h-2zM227 48h2v2h-2zM260 48h2v2h-2zM264 48h2v2h-2zM95 50h2v2h-2zM134 50h2v2h-2zM209 50h2v2h-2zM219 50h2v2h-2zM74 52h2v2h-2zM147 52h2v2h-2zM217 52h2v2h-2zM227 52h2v2h-2zM250 52h2v2h-2zM23 54h2v2h-2zM138 54h2v2h-2zM190 54h2v2h-2zM219 54h2v2h-2zM223 54h2v2h-2zM23 56h2v2h-2zM99 56h2v2h-2zM110 56h2v2h-2zM165 56h2v2h-2zM198 56h2v2h-2zM0 58h2v2h-2zM12 58h2v2h-2zM17 58h2v2h-2zM43 58h2v2h-2zM48 58h2v2h-2zM252 58h2v2h-2zM262 58h2v2h-2zM43 60h2v2h-2zM70 60h2v2h-2zM103 60h2v2h-2zM223 60h2v2h-2zM10 62h2v2h-2zM41 62h2v2h-2zM50 62h2v2h-2zM205 62h2v2h-2zM225 62h2v2h-2zM66 65h2v2h-2zM83 65h2v2h-2zM211 65h2v2h-2zM238 65h2v2h-2zM250 65h2v2h-2zM10 67h2v2h-2zM23 67h2v2h-2zM45 67h2v2h-2zM50 67h2v2h-2zM83 67h2v2h-2zM213 67h2v2h-2zM8 69h2v2h-2zM29 69h2v2h-2zM48 69h2v2h-2zM79 69h2v2h-2zM89 69h2v2h-2zM167 69h2v2h-2zM194 69h2v2h-2zM250 69h2v2h-2zM6 71h2v2h-2zM21 71h2v2h-2zM23 71h2v2h-2zM25 71h2v2h-2zM35 71h2v2h-2zM52 71h2v2h-2zM91 71h2v2h-2zM110 71h2v2h-2zM138 71h2v2h-2zM147 71h2v2h-2zM196 71h2v2h-2zM202 71h2v2h-2zM223 71h2v2h-2zM45 73h2v2h-2zM72 73h2v2h-2zM97 73h2v2h-2zM118 73h2v2h-2zM143 73h2v2h-2zM176 73h2v2h-2zM178 73h2v2h-2zM205 73h2v2h-2zM207 73h2v2h-2zM217 73h2v2h-2zM248 73h2v2h-2zM2 75h2v2h-2zM48 75h2v2h-2zM213 75h2v2h-2zM221 75h2v2h-2zM244 75h2v2h-2zM0 77h2v2h-2zM23 77h2v2h-2zM60 77h2v2h-2zM74 77h2v2h-2zM161 77h2v2h-2zM190 77h2v2h-2zM264 77h2v2h-2zM19 79h2v2h-2zM217 79h2v2h-2zM256 79h2v2h-2zM64 81h2v2h-2zM163 81h2v2h-2zM233 81h2v2h-2zM275 81h2v2h-2zM33 83h2v2h-2zM79 83h2v2h-2zM180 83h2v2h-2zM50 85h2v2h-2zM89 85h2v2h-2zM132 85h2v2h-2zM140 85h2v2h-2zM97 87h2v2h-2zM116 87h2v2h-2zM176 87h2v2h-2zM269 87h2v2h-2zM279 87h2v2h-2zM167 90h2v2h-2zM174 90h2v2h-2zM182 90h2v2h-2zM219 90h2v2h-2zM254 90h2v2h-2zM136 92h2v2h-2zM180 92h2v2h-2zM39 94h2v2h-2zM48 94h2v2h-2zM101 94h2v2h-2zM143 94h2v2h-2zM229 94h2v2h-2zM0 96h2v2h-2zM21 96h2v2h-2zM52 96h2v2h-2zM174 96h2v2h-2zM205 96h2v2h-2zM12 98h2v2h-2zM180 98h2v2h-2zM231 98h2v2h-2zM25 100h2v2h-2zM87 100h2v2h-2zM93 100h2v2h-2zM138 100h2v2h-2zM143 100h2v2h-2zM211 100h2v2h-2zM8 102h2v2h-2zM35 102h2v2h-2zM76 102h2v2h-2zM186 102h2v2h-2zM256 102h2v2h-2zM273 102h2v2h-2zM27 104h2v2h-2zM31 104h2v2h-2zM126 104h2v2h-2zM161 104h2v2h-2zM165 104h2v2h-2zM242 104h2v2h-2zM250 104h2v2h-2zM256 104h2v2h-2zM269 104h2v2h-2zM169 106h2v2h-2zM180 106h2v2h-2zM200 106h2v2h-2zM211 106h2v2h-2zM229 106h2v2h-2zM273 106h2v2h-2zM277 106h2v2h-2zM66 108h2v2h-2zM122 108h2v2h-2zM174 108h2v2h-2zM12 110h2v2h-2zM25 110h2v2h-2zM273 110h2v2h-2zM52 112h2v2h-2zM91 112h2v2h-2zM99 112h2v2h-2zM31 115h2v2h-2zM52 115h2v2h-2zM60 115h2v2h-2zM114 115h2v2h-2zM118 115h2v2h-2zM167 115h2v2h-2zM267 115h2v2h-2zM95 117h2v2h-2zM128 117h2v2h-2zM169 117h2v2h-2zM83 119h2v2h-2zM99 119h2v2h-2zM112 119h2v2h-2zM192 119h2v2h-2zM215 119h2v2h-2zM244 119h2v2h-2zM37 121h2v2h-2zM60 121h2v2h-2zM114 121h2v2h-2zM37 123h2v2h-2zM56 123h2v2h-2zM110 123h2v2h-2zM273 123h2v2h-2zM23 125h2v2h-2zM165 125h2v2h-2zM192 125h2v2h-2zM213 125h2v2h-2zM248 125h2v2h-2zM43 127h2v2h-2zM48 127h2v2h-2zM70 127h2v2h-2zM256 127h2v2h-2zM4 129h2v2h-2zM89 129h2v2h-2zM124 129h2v2h-2zM130 129h2v2h-2zM153 129h2v2h-2zM254 129h2v2h-2zM260 129h2v2h-2zM279 129h2v2h-2zM21 131h2v2h-2zM33 131h2v2h-2zM62 131h2v2h-2zM66 131h2v2h-2zM182 131h2v2h-2zM240 131h2v2h-2zM17 133h2v2h-2zM21 133h2v2h-2zM27 133h2v2h-2zM130 133h2v2h-2zM136 133h2v2h-2zM29 135h2v2h-2zM48 135h2v2h-2zM68 135h2v2h-2zM122 135h2v2h-2zM182 135h2v2h-2zM225 135h2v2h-2zM273 135h2v2h-2zM277 135h2v2h-2zM279 135h2v2h-2zM35 137h2v2h-2zM56 137h2v2h-2zM167 137h2v2h-2zM188 137h2v2h-2zM190 137h2v2h-2zM202 137h2v2h-2zM35 139h2v2h-2zM72 139h2v2h-2zM130 139h2v2h-2zM157 139h2v2h-2zM260 139h2v2h-2zM4 142h2v2h-2zM48 142h2v2h-2zM105 142h2v2h-2zM151 142h2v2h-2zM246 142h2v2h-2zM6 144h2v2h-2zM167 144h2v2h-2zM50 146h2v2h-2zM56 146h2v2h-2zM60 146h2v2h-2zM264 146h2v2h-2zM2 148h2v2h-2zM25 148h2v2h-2zM79 148h2v2h-2zM81 148h2v2h-2zM219 148h2v2h-2zM79 150h2v2h-2zM128 150h2v2h-2zM132 150h2v2h-2zM27 152h2v2h-2zM64 152h2v2h-2zM161 152h2v2h-2zM176 152h2v2h-2zM205 152h2v2h-2zM54 154h2v2h-2zM72 154h2v2h-2zM151 154h2v2h-2zM122 156h2v2h-2zM223 156h2v2h-2zM10 158h2v2h-2zM64 158h2v2h-2zM107 158h2v2h-2zM120 158h2v2h-2zM145 158h2v2h-2zM252 158h2v2h-2zM271 158h2v2h-2zM89 160h2v2h-2zM143 160h2v2h-2zM8 162h2v2h-2zM41 162h2v2h-2zM105 164h2v2h-2zM114 164h2v2h-2zM122 164h2v2h-2zM145 164h2v2h-2zM238 164h2v2h-2zM12 167h2v2h-2zM35 167h2v2h-2zM153 167h2v2h-2zM277 167h2v2h-2zM10 169h2v2h-2zM19 169h2v2h-2zM169 169h2v2h-2zM252 169h2v2h-2zM37 171h2v2h-2zM62 171h2v2h-2zM260 171h2v2h-2zM174 173h2v2h-2zM184 173h2v2h-2zM198 173h2v2h-2zM91 175h2v2h-2zM159 175h2v2h-2zM238 175h2v2h-2zM8 177h2v2h-2zM118 177h2v2h-2zM122 177h2v2h-2zM128 177h2v2h-2zM190 177h2v2h-2zM198 177h2v2h-2zM14 179h2v2h-2zM33 179h2v2h-2zM256 179h2v2h-2zM54 181h2v2h-2zM165 181h2v2h-2zM202 181h2v2h-2zM238 181h2v2h-2zM248 181h2v2h-2zM6 183h2v2h-2zM81 183h2v2h-2zM264 183h2v2h-2zM39 185h2v2h-2zM41 185h2v2h-2zM159 185h2v2h-2zM176 185h2v2h-2zM209 185h2v2h-2zM211 185h2v2h-2zM176 187h2v2h-2zM190 187h2v2h-2zM219 187h2v2h-2zM79 189h2v2h-2zM81 189h2v2h-2zM89 189h2v2h-2zM112 189h2v2h-2zM221 189h2v2h-2zM74 192h2v2h-2zM79 192h2v2h-2zM112 192h2v2h-2zM159 192h2v2h-2zM192 192h2v2h-2zM225 192h2v2h-2zM68 194h2v2h-2zM101 194h2v2h-2zM252 194h2v2h-2zM23 196h2v2h-2zM107 196h2v2h-2zM269 196h2v2h-2zM45 198h2v2h-2zM64 198h2v2h-2zM103 198h2v2h-2zM145 198h2v2h-2zM223 198h2v2h-2zM236 198h2v2h-2zM260 198h2v2h-2zM122 200h2v2h-2zM178 200h2v2h-2zM6 202h2v2h-2zM39 202h2v2h-2zM43 202h2v2h-2zM87 202h2v2h-2zM2 204h2v2h-2zM4 204h2v2h-2zM8 204h2v2h-2zM217 204h2v2h-2zM223 204h2v2h-2zM240 204h2v2h-2zM29 206h2v2h-2zM279 206h2v2h-2zM79 208h2v2h-2zM149 208h2v2h-2zM153 208h2v2h-2zM157 208h2v2h-2zM182 208h2v2h-2zM219 208h2v2h-2zM229 208h2v2h-2zM264 208h2v2h-2zM271 208h2v2h-2zM273 208h2v2h-2zM33 210h2v2h-2zM122 210h2v2h-2zM149 210h2v2h-2zM161 210h2v2h-2zM215 210h2v2h-2zM269 210h2v2h-2zM138 212h2v2h-2zM83 214h2v2h-2zM186 214h2v2h-2zM250 214h2v2h-2zM275 214h2v2h-2zM25 217h2v2h-2zM35 217h2v2h-2zM112 217h2v2h-2zM136 217h2v2h-2zM153 217h2v2h-2zM262 217h2v2h-2zM264 217h2v2h-2zM62 219h2v2h-2zM101 219h2v2h-2zM155 219h2v2h-2zM56 221h2v2h-2zM70 221h2v2h-2zM97 221h2v2h-2zM134 221h2v2h-2zM140 221h2v2h-2zM231 221h2v2h-2zM267 221h2v2h-2zM269 221h2v2h-2zM54 223h2v2h-2zM62 223h2v2h-2zM95 223h2v2h-2zM105 223h2v2h-2zM124 223h2v2h-2zM149 223h2v2h-2zM163 223h2v2h-2zM198 223h2v2h-2zM229 223h2v2h-2zM236 223h2v2h-2zM273 223h2v2h-2zM145 225h2v2h-2zM221 225h2v2h-2zM238 225h2v2h-2zM254 225h2v2h-2zM269 225h2v2h-2zM4 227h2v2h-2zM83 227h2v2h-2zM95 227h2v2h-2zM101 227h2v2h-2zM151 227h2v2h-2zM159 227h2v2h-2zM192 227h2v2h-2zM225 227h2v2h-2zM260 227h2v2h-2zM37 229h2v2h-2zM45 229h2v2h-2zM147 229h2v2h-2zM200 229h2v2h-2zM215 229h2v2h-2zM236 229h2v2h-2zM262 229h2v2h-2zM267 229h2v2h-2zM269 229h2v2h-2zM6 231h2v2h-2zM58 231h2v2h-2zM79 231h2v2h-2zM93 231h2v2h-2zM103 231h2v2h-2zM122 231h2v2h-2zM130 231h2v2h-2zM151 231h2v2h-2zM174 231h2v2h-2zM188 231h2v2h-2zM202 231h2v2h-2zM219 231h2v2h-2zM256 231h2v2h-2zM271 231h2v2h-2zM2 233h2v2h-2zM17 233h2v2h-2zM62 233h2v2h-2zM107 233h2v2h-2zM155 233h2v2h-2zM174 233h2v2h-2zM180 233h2v2h-2zM188 233h2v2h-2zM205 233h2v2h-2zM217 233h2v2h-2zM223 233h2v2h-2zM240 233h2v2h-2zM264 233h2v2h-2zM25 235h2v2h-2zM68 235h2v2h-2zM107 235h2v2h-2zM124 235h2v2h-2zM184 235h2v2h-2zM209 235h2v2h-2zM233 235h2v2h-2zM258 235h2v2h-2zM260 235h2v2h-2zM110 237h2v2h-2zM143 237h2v2h-2zM151 237h2v2h-2zM159 237h2v2h-2zM188 237h2v2h-2zM205 237h2v2h-2zM215 237h2v2h-2zM275 237h2v2h-2zM277 237h2v2h-2zM14 239h2v2h-2zM27 239h2v2h-2zM83 239h2v2h-2zM171 239h2v2h-2zM184 239h2v2h-2zM219 239h2v2h-2zM236 239h2v2h-2zM277 239h2v2h-2zM279 239h2v2h-2zM79 242h2v2h-2zM83 242h2v2h-2zM118 242h2v2h-2zM130 242h2v2h-2zM149 242h2v2h-2zM229 242h2v2h-2zM242 242h2v2h-2zM250 242h2v2h-2zM277 242h2v2h-2zM23 244h2v2h-2zM60 244h2v2h-2zM103 244h2v2h-2zM62 246h2v2h-2zM95 246h2v2h-2zM101 246h2v2h-2zM105 246h2v2h-2zM171 246h2v2h-2zM184 246h2v2h-2zM229 246h2v2h-2zM252 246h2v2h-2zM269 246h2v2h-2zM25 248h2v2h-2zM56 248h2v2h-2zM70 248h2v2h-2zM134 248h2v2h-2zM178 248h2v2h-2zM211 248h2v2h-2zM242 248h2v2h-2zM2 250h2v2h-2zM23 250h2v2h-2zM207 250h2v2h-2zM225 250h2v2h-2zM240 250h2v2h-2zM256 250h2v2h-2zM279 250h2v2h-2zM37 252h2v2h-2zM50 252h2v2h-2zM107 252h2v2h-2zM124 252h2v2h-2zM134 252h2v2h-2zM136 252h2v2h-2zM138 252h2v2h-2zM143 252h2v2h-2zM223 252h2v2h-2zM225 252h2v2h-2zM240 252h2v2h-2z" fill="#400606"/><path d="M31 0h2v2h-2zM43 0h2v2h-2zM48 0h2v2h-2zM54 0h2v2h-2zM103 0h2v2h-2zM138 0h2v2h-2zM248 0h2v2h-2zM4 2h2v2h-2zM10 2h2v2h-2zM35 2h2v2h-2zM37 2h2v2h-2zM45 2h2v2h-2zM124 2h2v2h-2zM143 2h2v2h-2zM221 2h2v2h-2zM225 2h2v2h-2zM236 2h2v2h-2zM242 2h2v2h-2zM250 2h2v2h-2zM273 2h2v2h-2zM89 4h2v2h-2zM167 4h2v2h-2zM221 4h2v2h-2zM37 6h2v2h-2zM64 6h2v2h-2zM105 6h2v2h-2zM126 6h2v2h-2zM182 6h2v2h-2zM217 6h2v2h-2zM227 6h2v2h-2zM260 6h2v2h-2zM275 6h2v2h-2zM19 8h2v2h-2zM23 8h2v2h-2zM35 8h2v2h-2zM76 8h2v2h-2zM140 8h2v2h-2zM143 8h2v2h-2zM37 10h2v2h-2zM153 10h2v2h-2zM174 10h2v2h-2zM223 10h2v2h-2zM244 10h2v2h-2zM0 12h2v2h-2zM79 12h2v2h-2zM91 12h2v2h-2zM184 12h2v2h-2zM198 12h2v2h-2zM33 15h2v2h-2zM56 15h2v2h-2zM81 15h2v2h-2zM130 15h2v2h-2zM157 15h2v2h-2zM205 15h2v2h-2zM225 15h2v2h-2zM227 15h2v2h-2zM273 15h2v2h-2zM64 17h2v2h-2zM93 17h2v2h-2zM159 17h2v2h-2zM174 17h2v2h-2zM202 17h2v2h-2zM242 17h2v2h-2zM256 17h2v2h-2zM273 17h2v2h-2zM21 19h2v2h-2zM27 19h2v2h-2zM89 19h2v2h-2zM118 19h2v2h-2zM134 19h2v2h-2zM140 19h2v2h-2zM147 19h2v2h-2zM188 19h2v2h-2zM190 19h2v2h-2zM227 19h2v2h-2zM267 19h2v2h-2zM277 19h2v2h-2zM8 21h2v2h-2zM56 21h2v2h-2zM79 21h2v2h-2zM171 21h2v2h-2zM221 21h2v2h-2zM244 21h2v2h-2zM250 21h2v2h-2zM262 21h2v2h-2zM31 23h2v2h-2zM50 23h2v2h-2zM79 23h2v2h-2zM103 23h2v2h-2zM120 23h2v2h-2zM126 23h2v2h-2zM159 23h2v2h-2zM211 23h2v2h-2zM27 25h2v2h-2zM132 25h2v2h-2zM171 25h2v2h-2zM45 27h2v2h-2zM124 27h2v2h-2zM132 27h2v2h-2zM167 27h2v2h-2zM200 27h2v2h-2zM215 27h2v2h-2zM227 27h2v2h-2zM277 27h2v2h-2zM25 29h2v2h-2zM31 29h2v2h-2zM58 29h2v2h-2zM95 29h2v2h-2zM99 29h2v2h-2zM110 29h2v2h-2zM118 29h2v2h-2zM188 29h2v2h-2zM8 31h2v2h-2zM68 31h2v2h-2zM116 31h2v2h-2zM174 31h2v2h-2zM240 31h2v2h-2zM260 31h2v2h-2zM269 31h2v2h-2zM271 31h2v2h-2zM4 33h2v2h-2zM21 33h2v2h-2zM128 33h2v2h-2zM188 33h2v2h-2zM250 33h2v2h-2zM256 33h2v2h-2zM267 33h2v2h-2zM0 35h2v2h-2zM4 35h2v2h-2zM83 35h2v2h-2zM178 35h2v2h-2zM221 35h2v2h-2zM244 35h2v2h-2zM17 37h2v2h-2zM39 37h2v2h-2zM89 37h2v2h-2zM122 37h2v2h-2zM149 37h2v2h-2zM155 37h2v2h-2zM159 37h2v2h-2zM273 37h2v2h-2zM12 40h2v2h-2zM114 40h2v2h-2zM147 40h2v2h-2zM223 40h2v2h-2zM238 40h2v2h-2zM252 40h2v2h-2zM2 42h2v2h-2zM52 42h2v2h-2zM56 42h2v2h-2zM114 42h2v2h-2zM157 42h2v2h-2zM188 42h2v2h-2zM190 42h2v2h-2zM198 42h2v2h-2zM221 42h2v2h-2zM273 42h2v2h-2zM0 44h2v2h-2zM2 44h2v2h-2zM37 44h2v2h-2zM54 44h2v2h-2zM62 44h2v2h-2zM64 44h2v2h-2zM72 44h2v2h-2zM81 44h2v2h-2zM114 44h2v2h-2zM122 44h2v2h-2zM147 44h2v2h-2zM244 44h2v2h-2zM246 44h2v2h-2zM248 44h2v2h-2zM19 46h2v2h-2zM33 46h2v2h-2zM37 46h2v2h-2zM56 46h2v2h-2zM60 46h2v2h-2zM103 46h2v2h-2zM116 46h2v2h-2zM151 46h2v2h-2zM180 46h2v2h-2zM205 46h2v2h-2zM217 46h2v2h-2zM229 46h2v2h-2zM260 46h2v2h-2zM130 48h2v2h-2zM149 48h2v2h-2zM157 48h2v2h-2zM231 48h2v2h-2zM256 48h2v2h-2zM17 50h2v2h-2zM87 50h2v2h-2zM93 50h2v2h-2zM103 50h2v2h-2zM124 50h2v2h-2zM194 50h2v2h-2zM221 50h2v2h-2zM233 50h2v2h-2zM246 50h2v2h-2zM254 50h2v2h-2zM258 50h2v2h-2zM269 50h2v2h-2zM27 52h2v2h-2zM37 52h2v2h-2zM62 52h2v2h-2zM81 52h2v2h-2zM87 52h2v2h-2zM145 52h2v2h-2zM155 52h2v2h-2zM225 52h2v2h-2zM271 52h2v2h-2zM8 54h2v2h-2zM27 54h2v2h-2zM48 54h2v2h-2zM60 54h2v2h-2zM83 54h2v2h-2zM122 54h2v2h-2zM157 54h2v2h-2zM236 54h2v2h-2zM240 54h2v2h-2zM250 54h2v2h-2zM254 54h2v2h-2zM12 56h2v2h-2zM27 56h2v2h-2zM43 56h2v2h-2zM62 56h2v2h-2zM68 56h2v2h-2zM93 56h2v2h-2zM103 56h2v2h-2zM126 56h2v2h-2zM143 56h2v2h-2zM171 56h2v2h-2zM194 56h2v2h-2zM231 56h2v2h-2zM254 56h2v2h-2zM31 58h2v2h-2zM74 58h2v2h-2zM89 58h2v2h-2zM101 58h2v2h-2zM103 58h2v2h-2zM112 58h2v2h-2zM155 58h2v2h-2zM207 58h2v2h-2zM45 60h2v2h-2zM107 60h2v2h-2zM153 60h2v2h-2zM227 60h2v2h-2zM229 60h2v2h-2zM236 60h2v2h-2zM244 60h2v2h-2zM248 60h2v2h-2zM250 60h2v2h-2zM48 62h2v2h-2zM132 62h2v2h-2zM186 62h2v2h-2zM194 62h2v2h-2zM200 62h2v2h-2zM43 65h2v2h-2zM62 65h2v2h-2zM99 65h2v2h-2zM130 65h2v2h-2zM163 65h2v2h-2zM246 65h2v2h-2zM25 67h2v2h-2zM37 67h2v2h-2zM66 67h2v2h-2zM107 67h2v2h-2zM128 67h2v2h-2zM130 67h2v2h-2zM132 67h2v2h-2zM169 67h2v2h-2zM196 67h2v2h-2zM236 67h2v2h-2zM262 67h2v2h-2zM37 69h2v2h-2zM60 69h2v2h-2zM68 69h2v2h-2zM124 69h2v2h-2zM157 69h2v2h-2zM180 69h2v2h-2zM184 69h2v2h-2zM186 69h2v2h-2zM267 69h2v2h-2zM275 69h2v2h-2zM12 71h2v2h-2zM60 71h2v2h-2zM105 71h2v2h-2zM126 71h2v2h-2zM169 71h2v2h-2zM198 71h2v2h-2zM215 71h2v2h-2zM227 71h2v2h-2zM27 73h2v2h-2zM161 73h2v2h-2zM196 73h2v2h-2zM258 73h2v2h-2zM269 73h2v2h-2zM62 75h2v2h-2zM91 75h2v2h-2zM93 75h2v2h-2zM99 75h2v2h-2zM140 75h2v2h-2zM159 75h2v2h-2zM171 75h2v2h-2zM200 75h2v2h-2zM205 75h2v2h-2zM8 77h2v2h-2zM89 77h2v2h-2zM103 77h2v2h-2zM145 77h2v2h-2zM205 77h2v2h-2zM233 77h2v2h-2zM2 79h2v2h-2zM6 79h2v2h-2zM35 79h2v2h-2zM72 79h2v2h-2zM93 79h2v2h-2zM101 79h2v2h-2zM149 79h2v2h-2zM200 79h2v2h-2zM205 79h2v2h-2zM225 79h2v2h-2zM233 79h2v2h-2zM236 79h2v2h-2zM95 81h2v2h-2zM134 81h2v2h-2zM91 83h2v2h-2zM99 83h2v2h-2zM213 83h2v2h-2zM254 83h2v2h-2zM258 83h2v2h-2zM271 83h2v2h-2zM31 85h2v2h-2zM52 85h2v2h-2zM136 85h2v2h-2zM159 85h2v2h-2zM161 85h2v2h-2zM221 85h2v2h-2zM254 85h2v2h-2zM264 85h2v2h-2zM269 85h2v2h-2zM277 85h2v2h-2zM52 87h2v2h-2zM99 87h2v2h-2zM103 87h2v2h-2zM112 87h2v2h-2zM128 87h2v2h-2zM188 87h2v2h-2zM219 87h2v2h-2zM256 87h2v2h-2zM41 90h2v2h-2zM56 90h2v2h-2zM81 90h2v2h-2zM227 90h2v2h-2zM231 90h2v2h-2zM250 90h2v2h-2zM252 90h2v2h-2zM277 90h2v2h-2zM37 92h2v2h-2zM93 92h2v2h-2zM143 92h2v2h-2zM153 92h2v2h-2zM169 92h2v2h-2zM178 92h2v2h-2zM196 92h2v2h-2zM207 92h2v2h-2zM275 92h2v2h-2zM76 94h2v2h-2zM97 94h2v2h-2zM128 94h2v2h-2zM149 94h2v2h-2zM171 94h2v2h-2zM174 94h2v2h-2zM188 94h2v2h-2zM202 94h2v2h-2zM225 94h2v2h-2zM231 94h2v2h-2zM242 94h2v2h-2zM45 96h2v2h-2zM112 96h2v2h-2zM134 96h2v2h-2zM136 96h2v2h-2zM186 96h2v2h-2zM190 96h2v2h-2zM219 96h2v2h-2zM221 96h2v2h-2zM244 96h2v2h-2zM267 96h2v2h-2zM66 98h2v2h-2zM103 98h2v2h-2zM105 98h2v2h-2zM118 98h2v2h-2zM128 98h2v2h-2zM178 98h2v2h-2zM207 98h2v2h-2zM258 98h2v2h-2zM271 98h2v2h-2zM14 100h2v2h-2zM58 100h2v2h-2zM62 100h2v2h-2zM134 100h2v2h-2zM194 100h2v2h-2zM233 100h2v2h-2zM275 100h2v2h-2zM4 102h2v2h-2zM21 102h2v2h-2zM48 102h2v2h-2zM50 102h2v2h-2zM83 102h2v2h-2zM126 102h2v2h-2zM151 102h2v2h-2zM233 102h2v2h-2zM258 102h2v2h-2zM260 102h2v2h-2zM12 104h2v2h-2zM23 104h2v2h-2zM81 104h2v2h-2zM116 104h2v2h-2zM176 104h2v2h-2zM194 104h2v2h-2zM200 104h2v2h-2zM215 104h2v2h-2zM229 104h2v2h-2zM12 106h2v2h-2zM72 106h2v2h-2zM95 106h2v2h-2zM107 106h2v2h-2zM151 106h2v2h-2zM186 106h2v2h-2zM198 106h2v2h-2zM219 106h2v2h-2zM231 106h2v2h-2zM4 108h2v2h-2zM25 108h2v2h-2zM85 108h2v2h-2zM126 108h2v2h-2zM161 108h2v2h-2zM10 110h2v2h-2zM14 110h2v2h-2zM21 110h2v2h-2zM48 110h2v2h-2zM134 110h2v2h-2zM171 110h2v2h-2zM176 110h2v2h-2zM186 110h2v2h-2zM192 110h2v2h-2zM213 110h2v2h-2zM231 110h2v2h-2zM238 110h2v2h-2zM101 112h2v2h-2zM122 112h2v2h-2zM149 112h2v2h-2zM221 112h2v2h-2zM250 112h2v2h-2zM271 112h2v2h-2zM35 115h2v2h-2zM95 115h2v2h-2zM202 115h2v2h-2zM233 115h2v2h-2zM242 115h2v2h-2zM279 115h2v2h-2zM99 117h2v2h-2zM110 117h2v2h-2zM140 117h2v2h-2zM207 117h2v2h-2zM252 117h2v2h-2zM2 119h2v2h-2zM14 119h2v2h-2zM165 119h2v2h-2zM180 119h2v2h-2zM242 119h2v2h-2zM258 119h2v2h-2zM41 121h2v2h-2zM45 121h2v2h-2zM93 121h2v2h-2zM134 121h2v2h-2zM213 121h2v2h-2zM217 121h2v2h-2zM227 121h2v2h-2zM64 123h2v2h-2zM128 123h2v2h-2zM215 123h2v2h-2zM12 125h2v2h-2zM21 125h2v2h-2zM27 125h2v2h-2zM62 125h2v2h-2zM167 125h2v2h-2zM207 125h2v2h-2zM221 125h2v2h-2zM225 125h2v2h-2zM246 125h2v2h-2zM277 125h2v2h-2zM37 127h2v2h-2zM95 127h2v2h-2zM105 127h2v2h-2zM116 127h2v2h-2zM126 127h2v2h-2zM134 127h2v2h-2zM171 127h2v2h-2zM176 127h2v2h-2zM202 127h2v2h-2zM238 127h2v2h-2zM279 127h2v2h-2zM52 129h2v2h-2zM180 129h2v2h-2zM196 129h2v2h-2zM207 129h2v2h-2zM213 129h2v2h-2zM225 129h2v2h-2zM12 131h2v2h-2zM43 131h2v2h-2zM81 131h2v2h-2zM91 131h2v2h-2zM97 131h2v2h-2zM136 131h2v2h-2zM165 131h2v2h-2zM174 131h2v2h-2zM188 131h2v2h-2zM215 131h2v2h-2zM229 131h2v2h-2zM54 133h2v2h-2zM89 133h2v2h-2zM147 133h2v2h-2zM163 133h2v2h-2zM209 133h2v2h-2zM229 133h2v2h-2zM246 133h2v2h-2zM258 133h2v2h-2zM35 135h2v2h-2zM41 135h2v2h-2zM60 135h2v2h-2zM72 135h2v2h-2zM145 135h2v2h-2zM155 135h2v2h-2zM169 135h2v2h-2zM262 135h2v2h-2zM79 137h2v2h-2zM89 137h2v2h-2zM126 137h2v2h-2zM130 137h2v2h-2zM138 137h2v2h-2zM145 137h2v2h-2zM153 137h2v2h-2zM161 137h2v2h-2zM178 137h2v2h-2zM182 137h2v2h-2zM194 137h2v2h-2zM211 137h2v2h-2zM238 137h2v2h-2zM277 137h2v2h-2zM14 139h2v2h-2zM27 139h2v2h-2zM33 139h2v2h-2zM132 139h2v2h-2zM136 139h2v2h-2zM246 139h2v2h-2zM252 139h2v2h-2zM254 139h2v2h-2zM10 142h2v2h-2zM14 142h2v2h-2zM97 142h2v2h-2zM120 142h2v2h-2zM163 142h2v2h-2zM217 142h2v2h-2zM254 142h2v2h-2zM271 142h2v2h-2zM21 144h2v2h-2zM54 144h2v2h-2zM101 144h2v2h-2zM105 144h2v2h-2zM118 144h2v2h-2zM132 144h2v2h-2zM143 144h2v2h-2zM149 144h2v2h-2zM66 146h2v2h-2zM91 146h2v2h-2zM95 146h2v2h-2zM169 146h2v2h-2zM184 146h2v2h-2zM198 146h2v2h-2zM207 146h2v2h-2zM221 146h2v2h-2zM223 146h2v2h-2zM238 146h2v2h-2zM271 146h2v2h-2zM21 148h2v2h-2zM58 148h2v2h-2zM114 148h2v2h-2zM124 148h2v2h-2zM207 148h2v2h-2zM209 148h2v2h-2zM221 148h2v2h-2zM223 148h2v2h-2zM250 148h2v2h-2zM252 148h2v2h-2zM66 150h2v2h-2zM76 150h2v2h-2zM83 150h2v2h-2zM153 150h2v2h-2zM169 150h2v2h-2zM171 150h2v2h-2zM209 150h2v2h-2zM242 150h2v2h-2zM250 150h2v2h-2zM275 150h2v2h-2zM0 152h2v2h-2zM29 152h2v2h-2zM41 152h2v2h-2zM72 152h2v2h-2zM110 152h2v2h-2zM126 152h2v2h-2zM165 152h2v2h-2zM180 152h2v2h-2zM213 152h2v2h-2zM227 152h2v2h-2zM233 152h2v2h-2zM248 152h2v2h-2zM256 152h2v2h-2zM262 152h2v2h-2zM21 154h2v2h-2zM27 154h2v2h-2zM31 154h2v2h-2zM50 154h2v2h-2zM79 154h2v2h-2zM124 154h2v2h-2zM126 154h2v2h-2zM171 154h2v2h-2zM176 154h2v2h-2zM188 154h2v2h-2zM194 154h2v2h-2zM200 154h2v2h-2zM207 154h2v2h-2zM223 154h2v2h-2zM258 154h2v2h-2zM0 156h2v2h-2zM4 156h2v2h-2zM83 156h2v2h-2zM130 156h2v2h-2zM145 156h2v2h-2zM190 156h2v2h-2zM207 156h2v2h-2zM213 156h2v2h-2zM233 156h2v2h-2zM250 156h2v2h-2zM23 158h2v2h-2zM72 158h2v2h-2zM76 158h2v2h-2zM105 158h2v2h-2zM110 158h2v2h-2zM128 158h2v2h-2zM163 158h2v2h-2zM171 158h2v2h-2zM182 158h2v2h-2zM192 158h2v2h-2zM198 158h2v2h-2zM240 158h2v2h-2zM31 160h2v2h-2zM43 160h2v2h-2zM76 160h2v2h-2zM180 160h2v2h-2zM231 160h2v2h-2zM248 160h2v2h-2zM64 162h2v2h-2zM114 162h2v2h-2zM128 162h2v2h-2zM198 162h2v2h-2zM252 162h2v2h-2zM262 162h2v2h-2zM25 164h2v2h-2zM29 164h2v2h-2zM54 164h2v2h-2zM83 164h2v2h-2zM97 164h2v2h-2zM120 164h2v2h-2zM132 164h2v2h-2zM186 164h2v2h-2zM190 164h2v2h-2zM207 164h2v2h-2zM211 164h2v2h-2zM264 164h2v2h-2zM277 164h2v2h-2zM279 164h2v2h-2zM124 167h2v2h-2zM205 167h2v2h-2zM213 167h2v2h-2zM246 167h2v2h-2zM267 167h2v2h-2zM68 169h2v2h-2zM105 169h2v2h-2zM140 169h2v2h-2zM155 169h2v2h-2zM178 169h2v2h-2zM205 169h2v2h-2zM23 171h2v2h-2zM25 171h2v2h-2zM171 171h2v2h-2zM190 171h2v2h-2zM236 171h2v2h-2zM264 171h2v2h-2zM17 173h2v2h-2zM19 173h2v2h-2zM52 173h2v2h-2zM81 173h2v2h-2zM128 173h2v2h-2zM223 173h2v2h-2zM240 173h2v2h-2zM43 175h2v2h-2zM50 175h2v2h-2zM87 175h2v2h-2zM97 175h2v2h-2zM124 175h2v2h-2zM138 175h2v2h-2zM153 175h2v2h-2zM196 175h2v2h-2zM209 175h2v2h-2zM229 175h2v2h-2zM252 175h2v2h-2zM254 175h2v2h-2zM269 175h2v2h-2zM6 177h2v2h-2zM54 177h2v2h-2zM83 177h2v2h-2zM138 177h2v2h-2zM176 177h2v2h-2zM178 177h2v2h-2zM188 177h2v2h-2zM221 177h2v2h-2zM231 177h2v2h-2zM262 177h2v2h-2zM6 179h2v2h-2zM10 179h2v2h-2zM56 179h2v2h-2zM60 179h2v2h-2zM140 179h2v2h-2zM178 179h2v2h-2zM192 179h2v2h-2zM227 179h2v2h-2zM238 179h2v2h-2zM254 179h2v2h-2zM43 181h2v2h-2zM72 181h2v2h-2zM74 181h2v2h-2zM130 181h2v2h-2zM134 181h2v2h-2zM227 181h2v2h-2zM244 181h2v2h-2zM262 181h2v2h-2zM23 183h2v2h-2zM52 183h2v2h-2zM128 183h2v2h-2zM200 183h2v2h-2zM275 183h2v2h-2zM58 185h2v2h-2zM114 185h2v2h-2zM118 185h2v2h-2zM186 185h2v2h-2zM225 185h2v2h-2zM252 185h2v2h-2zM256 185h2v2h-2zM258 185h2v2h-2zM273 185h2v2h-2zM6 187h2v2h-2zM35 187h2v2h-2zM39 187h2v2h-2zM58 187h2v2h-2zM198 187h2v2h-2zM236 187h2v2h-2zM279 187h2v2h-2zM37 189h2v2h-2zM70 189h2v2h-2zM103 189h2v2h-2zM122 189h2v2h-2zM171 189h2v2h-2zM184 189h2v2h-2zM213 189h2v2h-2zM229 189h2v2h-2zM258 189h2v2h-2zM269 189h2v2h-2zM10 192h2v2h-2zM33 192h2v2h-2zM54 192h2v2h-2zM101 192h2v2h-2zM114 192h2v2h-2zM151 192h2v2h-2zM153 192h2v2h-2zM188 192h2v2h-2zM205 192h2v2h-2zM258 192h2v2h-2zM267 192h2v2h-2zM271 192h2v2h-2zM8 194h2v2h-2zM21 194h2v2h-2zM52 194h2v2h-2zM87 194h2v2h-2zM143 194h2v2h-2zM182 194h2v2h-2zM184 194h2v2h-2zM188 194h2v2h-2zM198 194h2v2h-2zM209 194h2v2h-2zM219 194h2v2h-2zM223 194h2v2h-2zM273 194h2v2h-2zM0 196h2v2h-2zM6 196h2v2h-2zM17 196h2v2h-2zM29 196h2v2h-2zM58 196h2v2h-2zM79 196h2v2h-2zM81 196h2v2h-2zM116 196h2v2h-2zM132 196h2v2h-2zM271 196h2v2h-2zM277 196h2v2h-2zM8 198h2v2h-2zM29 198h2v2h-2zM70 198h2v2h-2zM83 198h2v2h-2zM87 198h2v2h-2zM95 198h2v2h-2zM101 198h2v2h-2zM132 198h2v2h-2zM136 198h2v2h-2zM180 198h2v2h-2zM190 198h2v2h-2zM198 198h2v2h-2zM200 198h2v2h-2zM215 198h2v2h-2zM264 198h2v2h-2zM27 200h2v2h-2zM45 200h2v2h-2zM68 200h2v2h-2zM70 200h2v2h-2zM120 200h2v2h-2zM215 200h2v2h-2zM242 200h2v2h-2zM273 200h2v2h-2zM279 200h2v2h-2zM19 202h2v2h-2zM23 202h2v2h-2zM45 202h2v2h-2zM101 202h2v2h-2zM112 202h2v2h-2zM147 202h2v2h-2zM171 202h2v2h-2zM174 202h2v2h-2zM176 202h2v2h-2zM202 202h2v2h-2zM209 202h2v2h-2zM227 202h2v2h-2zM271 202h2v2h-2zM279 202h2v2h-2zM10 204h2v2h-2zM27 204h2v2h-2zM45 204h2v2h-2zM62 204h2v2h-2zM95 204h2v2h-2zM99 204h2v2h-2zM151 204h2v2h-2zM176 204h2v2h-2zM215 204h2v2h-2zM219 204h2v2h-2zM227 204h2v2h-2zM231 204h2v2h-2zM277 204h2v2h-2zM140 206h2v2h-2zM161 206h2v2h-2zM184 206h2v2h-2zM186 206h2v2h-2zM200 206h2v2h-2zM8 208h2v2h-2zM43 208h2v2h-2zM66 208h2v2h-2zM103 208h2v2h-2zM217 208h2v2h-2zM262 208h2v2h-2zM8 210h2v2h-2zM56 210h2v2h-2zM70 210h2v2h-2zM72 210h2v2h-2zM89 210h2v2h-2zM116 210h2v2h-2zM147 210h2v2h-2zM176 210h2v2h-2zM17 212h2v2h-2zM68 212h2v2h-2zM83 212h2v2h-2zM140 212h2v2h-2zM188 212h2v2h-2zM190 212h2v2h-2zM227 212h2v2h-2zM269 212h2v2h-2zM31 214h2v2h-2zM89 214h2v2h-2zM151 214h2v2h-2zM155 214h2v2h-2zM163 214h2v2h-2zM221 214h2v2h-2zM264 214h2v2h-2zM14 217h2v2h-2zM116 217h2v2h-2zM169 217h2v2h-2zM171 217h2v2h-2zM240 217h2v2h-2zM250 217h2v2h-2zM27 219h2v2h-2zM45 219h2v2h-2zM58 219h2v2h-2zM122 219h2v2h-2zM128 219h2v2h-2zM140 219h2v2h-2zM174 219h2v2h-2zM186 219h2v2h-2zM217 219h2v2h-2zM238 219h2v2h-2zM258 219h2v2h-2zM279 219h2v2h-2zM4 221h2v2h-2zM25 221h2v2h-2zM27 221h2v2h-2zM76 221h2v2h-2zM174 221h2v2h-2zM192 221h2v2h-2zM194 221h2v2h-2zM209 221h2v2h-2zM260 221h2v2h-2zM21 223h2v2h-2zM29 223h2v2h-2zM50 223h2v2h-2zM76 223h2v2h-2zM83 223h2v2h-2zM85 223h2v2h-2zM151 223h2v2h-2zM157 223h2v2h-2zM271 223h2v2h-2zM19 225h2v2h-2zM62 225h2v2h-2zM74 225h2v2h-2zM114 225h2v2h-2zM130 225h2v2h-2zM180 225h2v2h-2zM213 225h2v2h-2zM217 225h2v2h-2zM267 225h2v2h-2zM35 227h2v2h-2zM39 227h2v2h-2zM41 227h2v2h-2zM126 227h2v2h-2zM174 227h2v2h-2zM200 227h2v2h-2zM211 227h2v2h-2zM258 227h2v2h-2zM0 229h2v2h-2zM14 229h2v2h-2zM70 229h2v2h-2zM81 229h2v2h-2zM87 229h2v2h-2zM101 229h2v2h-2zM159 229h2v2h-2zM182 229h2v2h-2zM194 229h2v2h-2zM219 229h2v2h-2zM223 229h2v2h-2zM238 229h2v2h-2zM240 229h2v2h-2zM25 231h2v2h-2zM33 231h2v2h-2zM45 231h2v2h-2zM52 231h2v2h-2zM68 231h2v2h-2zM112 231h2v2h-2zM134 231h2v2h-2zM138 231h2v2h-2zM205 231h2v2h-2zM277 231h2v2h-2zM21 233h2v2h-2zM29 233h2v2h-2zM48 233h2v2h-2zM79 233h2v2h-2zM103 233h2v2h-2zM110 233h2v2h-2zM143 233h2v2h-2zM147 233h2v2h-2zM184 233h2v2h-2zM192 233h2v2h-2zM200 233h2v2h-2zM213 233h2v2h-2zM246 233h2v2h-2zM267 233h2v2h-2zM271 233h2v2h-2zM45 235h2v2h-2zM48 235h2v2h-2zM62 235h2v2h-2zM72 235h2v2h-2zM132 235h2v2h-2zM136 235h2v2h-2zM151 235h2v2h-2zM163 235h2v2h-2zM196 235h2v2h-2zM198 235h2v2h-2zM202 235h2v2h-2zM236 235h2v2h-2zM246 235h2v2h-2zM262 235h2v2h-2zM267 235h2v2h-2zM269 235h2v2h-2zM275 235h2v2h-2zM54 237h2v2h-2zM72 237h2v2h-2zM130 237h2v2h-2zM147 237h2v2h-2zM153 237h2v2h-2zM157 237h2v2h-2zM167 237h2v2h-2zM194 237h2v2h-2zM196 237h2v2h-2zM223 237h2v2h-2zM236 237h2v2h-2zM258 237h2v2h-2zM31 239h2v2h-2zM39 239h2v2h-2zM41 239h2v2h-2zM48 239h2v2h-2zM87 239h2v2h-2zM105 239h2v2h-2zM116 239h2v2h-2zM145 239h2v2h-2zM147 239h2v2h-2zM151 239h2v2h-2zM157 239h2v2h-2zM161 239h2v2h-2zM169 239h2v2h-2zM182 239h2v2h-2zM188 239h2v2h-2zM209 239h2v2h-2zM252 239h2v2h-2zM254 239h2v2h-2zM264 239h2v2h-2zM269 239h2v2h-2zM43 242h2v2h-2zM50 242h2v2h-2zM58 242h2v2h-2zM68 242h2v2h-2zM114 242h2v2h-2zM132 242h2v2h-2zM153 242h2v2h-2zM194 242h2v2h-2zM196 242h2v2h-2zM213 242h2v2h-2zM271 242h2v2h-2zM21 244h2v2h-2zM33 244h2v2h-2zM37 244h2v2h-2zM64 244h2v2h-2zM76 244h2v2h-2zM79 244h2v2h-2zM99 244h2v2h-2zM107 244h2v2h-2zM176 244h2v2h-2zM180 244h2v2h-2zM209 244h2v2h-2zM211 244h2v2h-2zM221 244h2v2h-2zM229 244h2v2h-2zM248 244h2v2h-2zM256 244h2v2h-2zM260 244h2v2h-2zM107 246h2v2h-2zM126 246h2v2h-2zM149 246h2v2h-2zM151 246h2v2h-2zM155 246h2v2h-2zM159 246h2v2h-2zM182 246h2v2h-2zM200 246h2v2h-2zM215 246h2v2h-2zM242 246h2v2h-2zM244 246h2v2h-2zM250 246h2v2h-2zM264 246h2v2h-2zM273 246h2v2h-2zM277 246h2v2h-2zM37 248h2v2h-2zM64 248h2v2h-2zM85 248h2v2h-2zM122 248h2v2h-2zM159 248h2v2h-2zM209 248h2v2h-2zM233 248h2v2h-2zM246 248h2v2h-2zM271 248h2v2h-2zM279 248h2v2h-2zM4 250h2v2h-2zM54 250h2v2h-2zM79 250h2v2h-2zM93 250h2v2h-2zM95 250h2v2h-2zM103 250h2v2h-2zM116 250h2v2h-2zM124 250h2v2h-2zM140 250h2v2h-2zM157 250h2v2h-2zM171 250h2v2h-2zM188 250h2v2h-2zM211 250h2v2h-2zM258 250h2v2h-2zM260 250h2v2h-2zM41 252h2v2h-2zM43 252h2v2h-2zM58 252h2v2h-2zM66 252h2v2h-2zM101 252h2v2h-2zM110 252h2v2h-2zM114 252h2v2h-2zM120 252h2v2h-2zM149 252h2v2h-2zM159 252h2v2h-2zM178 252h2v2h-2zM184 252h2v2h-2zM188 252h2v2h-2zM207 252h2v2h-2zM209 252h2v2h-2zM213 252h2v2h-2zM238 252h2v2h-2zM248 252h2v2h-2zM250 252h2v2h-2zM254 252h2v2h-2zM258 252h2v2h-2zM267 252h2v2h-2z" fill="#280404"/><path d="M132 0h2v2h-2zM157 0h2v2h-2zM240 4h2v2h-2zM31 6h2v2h-2zM48 6h2v2h-2zM68 8h2v2h-2zM81 8h2v2h-2zM180 8h2v2h-2zM258 8h2v2h-2zM157 10h2v2h-2zM159 12h2v2h-2zM269 12h2v2h-2zM12 15h2v2h-2zM149 15h2v2h-2zM198 15h2v2h-2zM147 21h2v2h-2zM211 21h2v2h-2zM248 21h2v2h-2zM258 21h2v2h-2zM27 23h2v2h-2zM107 23h2v2h-2zM140 25h2v2h-2zM196 25h2v2h-2zM120 27h2v2h-2zM149 27h2v2h-2zM145 29h2v2h-2zM153 29h2v2h-2zM163 29h2v2h-2zM182 29h2v2h-2zM39 31h2v2h-2zM159 31h2v2h-2zM176 33h2v2h-2zM194 33h2v2h-2zM217 35h2v2h-2zM60 37h2v2h-2zM182 37h2v2h-2zM132 40h2v2h-2zM76 46h2v2h-2zM14 48h2v2h-2zM97 48h2v2h-2zM140 48h2v2h-2zM174 48h2v2h-2zM41 50h2v2h-2zM176 50h2v2h-2zM252 50h2v2h-2zM99 52h2v2h-2zM103 54h2v2h-2zM262 54h2v2h-2zM174 56h2v2h-2zM45 58h2v2h-2zM231 58h2v2h-2zM114 62h2v2h-2zM180 62h2v2h-2zM161 65h2v2h-2zM17 69h2v2h-2zM64 71h2v2h-2zM149 73h2v2h-2zM275 73h2v2h-2zM267 77h2v2h-2zM8 79h2v2h-2zM10 79h2v2h-2zM21 79h2v2h-2zM180 79h2v2h-2zM132 83h2v2h-2zM8 87h2v2h-2zM14 87h2v2h-2zM43 87h2v2h-2zM207 87h2v2h-2zM31 90h2v2h-2zM157 90h2v2h-2zM182 94h2v2h-2zM2 96h2v2h-2zM271 96h2v2h-2zM8 98h2v2h-2zM209 98h2v2h-2zM136 100h2v2h-2zM163 100h2v2h-2zM227 100h2v2h-2zM269 100h2v2h-2zM140 108h2v2h-2zM244 108h2v2h-2zM279 108h2v2h-2zM118 110h2v2h-2zM215 110h2v2h-2zM39 115h2v2h-2zM174 115h2v2h-2zM246 115h2v2h-2zM279 117h2v2h-2zM43 119h2v2h-2zM68 119h2v2h-2zM236 119h2v2h-2zM79 121h2v2h-2zM200 121h2v2h-2zM205 121h2v2h-2zM262 121h2v2h-2zM153 123h2v2h-2zM6 125h2v2h-2zM41 127h2v2h-2zM110 127h2v2h-2zM151 127h2v2h-2zM171 129h2v2h-2zM252 131h2v2h-2zM186 133h2v2h-2zM246 137h2v2h-2zM56 142h2v2h-2zM66 142h2v2h-2zM136 142h2v2h-2zM205 142h2v2h-2zM120 146h2v2h-2zM248 146h2v2h-2zM52 148h2v2h-2zM277 150h2v2h-2zM2 152h2v2h-2zM159 152h2v2h-2zM211 154h2v2h-2zM254 154h2v2h-2zM271 154h2v2h-2zM6 156h2v2h-2zM56 156h2v2h-2zM202 156h2v2h-2zM85 158h2v2h-2zM205 158h2v2h-2zM120 160h2v2h-2zM12 162h2v2h-2zM39 162h2v2h-2zM209 162h2v2h-2zM147 164h2v2h-2zM169 164h2v2h-2zM211 167h2v2h-2zM260 167h2v2h-2zM271 167h2v2h-2zM95 169h2v2h-2zM186 169h2v2h-2zM254 169h2v2h-2zM200 173h2v2h-2zM233 173h2v2h-2zM81 177h2v2h-2zM223 177h2v2h-2zM242 177h2v2h-2zM155 179h2v2h-2zM180 183h2v2h-2zM29 185h2v2h-2zM116 185h2v2h-2zM192 187h2v2h-2zM269 187h2v2h-2zM120 189h2v2h-2zM178 189h2v2h-2zM161 192h2v2h-2zM225 194h2v2h-2zM200 196h2v2h-2zM105 198h2v2h-2zM184 198h2v2h-2zM273 198h2v2h-2zM244 200h2v2h-2zM196 202h2v2h-2zM159 204h2v2h-2zM39 206h2v2h-2zM196 206h2v2h-2zM132 208h2v2h-2zM178 208h2v2h-2zM169 210h2v2h-2zM271 212h2v2h-2zM105 214h2v2h-2zM66 217h2v2h-2zM176 217h2v2h-2zM221 217h2v2h-2zM60 219h2v2h-2zM169 219h2v2h-2zM87 221h2v2h-2zM151 221h2v2h-2zM229 221h2v2h-2zM31 223h2v2h-2zM155 223h2v2h-2zM165 223h2v2h-2zM196 223h2v2h-2zM14 225h2v2h-2zM66 225h2v2h-2zM167 227h2v2h-2zM267 227h2v2h-2zM114 229h2v2h-2zM260 229h2v2h-2zM12 231h2v2h-2zM37 231h2v2h-2zM167 231h2v2h-2zM184 231h2v2h-2zM72 233h2v2h-2zM41 235h2v2h-2zM89 235h2v2h-2zM126 235h2v2h-2zM194 235h2v2h-2zM225 235h2v2h-2zM33 237h2v2h-2zM246 237h2v2h-2zM273 237h2v2h-2zM21 239h2v2h-2zM118 239h2v2h-2zM155 239h2v2h-2zM174 239h2v2h-2zM126 242h2v2h-2zM180 242h2v2h-2zM192 244h2v2h-2zM254 244h2v2h-2zM35 246h2v2h-2zM138 246h2v2h-2zM227 246h2v2h-2zM10 248h2v2h-2zM35 248h2v2h-2zM169 248h2v2h-2zM176 248h2v2h-2zM180 248h2v2h-2zM182 248h2v2h-2zM207 248h2v2h-2zM17 250h2v2h-2zM19 250h2v2h-2zM89 250h2v2h-2zM120 250h2v2h-2zM136 250h2v2h-2zM153 250h2v2h-2zM169 250h2v2h-2zM273 250h2v2h-2zM2 252h2v2h-2zM8 252h2v2h-2zM126 252h2v2h-2zM186 252h2v2h-2zM219 252h2v2h-2zM233 252h2v2h-2zM246 252h2v2h-2z" fill="#a01010"/><path d="M136 0h2v2h-2zM182 0h2v2h-2zM246 0h2v2h-2zM236 4h2v2h-2zM23 6h2v2h-2zM62 6h2v2h-2zM233 6h2v2h-2zM107 8h2v2h-2zM151 8h2v2h-2zM215 8h2v2h-2zM176 10h2v2h-2zM14 12h2v2h-2zM66 12h2v2h-2zM207 12h2v2h-2zM194 15h2v2h-2zM275 15h2v2h-2zM153 21h2v2h-2zM157 21h2v2h-2zM19 23h2v2h-2zM147 23h2v2h-2zM202 23h2v2h-2zM231 23h2v2h-2zM4 25h2v2h-2zM130 25h2v2h-2zM25 27h2v2h-2zM140 27h2v2h-2zM180 27h2v2h-2zM217 27h2v2h-2zM236 27h2v2h-2zM10 29h2v2h-2zM161 29h2v2h-2zM207 29h2v2h-2zM2 31h2v2h-2zM27 31h2v2h-2zM145 31h2v2h-2zM155 31h2v2h-2zM262 31h2v2h-2zM66 35h2v2h-2zM198 35h2v2h-2zM114 37h2v2h-2zM167 37h2v2h-2zM250 40h2v2h-2zM10 42h2v2h-2zM122 42h2v2h-2zM176 42h2v2h-2zM83 44h2v2h-2zM89 44h2v2h-2zM169 44h2v2h-2zM35 46h2v2h-2zM52 46h2v2h-2zM215 46h2v2h-2zM87 48h2v2h-2zM182 48h2v2h-2zM6 50h2v2h-2zM122 50h2v2h-2zM271 50h2v2h-2zM93 52h2v2h-2zM107 52h2v2h-2zM167 52h2v2h-2zM269 52h2v2h-2zM97 54h2v2h-2zM225 54h2v2h-2zM60 56h2v2h-2zM122 56h2v2h-2zM207 56h2v2h-2zM153 58h2v2h-2zM161 58h2v2h-2zM128 60h2v2h-2zM275 60h2v2h-2zM45 62h2v2h-2zM85 62h2v2h-2zM161 62h2v2h-2zM262 62h2v2h-2zM35 67h2v2h-2zM74 67h2v2h-2zM112 67h2v2h-2zM147 67h2v2h-2zM35 69h2v2h-2zM269 69h2v2h-2zM66 71h2v2h-2zM260 71h2v2h-2zM39 73h2v2h-2zM130 73h2v2h-2zM116 75h2v2h-2zM66 77h2v2h-2zM120 77h2v2h-2zM134 77h2v2h-2zM159 77h2v2h-2zM209 77h2v2h-2zM118 79h2v2h-2zM116 81h2v2h-2zM31 83h2v2h-2zM74 83h2v2h-2zM165 83h2v2h-2zM200 83h2v2h-2zM273 83h2v2h-2zM233 85h2v2h-2zM240 85h2v2h-2zM79 92h2v2h-2zM97 92h2v2h-2zM134 92h2v2h-2zM192 92h2v2h-2zM19 94h2v2h-2zM72 94h2v2h-2zM83 94h2v2h-2zM124 96h2v2h-2zM171 96h2v2h-2zM215 96h2v2h-2zM202 98h2v2h-2zM12 102h2v2h-2zM138 102h2v2h-2zM0 104h2v2h-2zM68 104h2v2h-2zM120 104h2v2h-2zM236 104h2v2h-2zM238 104h2v2h-2zM14 106h2v2h-2zM155 106h2v2h-2zM35 108h2v2h-2zM147 108h2v2h-2zM72 112h2v2h-2zM19 115h2v2h-2zM103 115h2v2h-2zM74 117h2v2h-2zM89 117h2v2h-2zM112 117h2v2h-2zM79 119h2v2h-2zM87 119h2v2h-2zM95 119h2v2h-2zM132 119h2v2h-2zM8 121h2v2h-2zM21 121h2v2h-2zM33 121h2v2h-2zM155 121h2v2h-2zM31 123h2v2h-2zM97 123h2v2h-2zM112 123h2v2h-2zM260 123h2v2h-2zM43 125h2v2h-2zM66 125h2v2h-2zM10 129h2v2h-2zM64 129h2v2h-2zM99 129h2v2h-2zM138 129h2v2h-2zM215 129h2v2h-2zM37 131h2v2h-2zM159 131h2v2h-2zM211 131h2v2h-2zM0 133h2v2h-2zM8 133h2v2h-2zM99 133h2v2h-2zM207 133h2v2h-2zM260 133h2v2h-2zM6 135h2v2h-2zM180 135h2v2h-2zM207 135h2v2h-2zM242 135h2v2h-2zM79 139h2v2h-2zM163 139h2v2h-2zM194 139h2v2h-2zM223 139h2v2h-2zM242 139h2v2h-2zM256 139h2v2h-2zM264 139h2v2h-2zM17 142h2v2h-2zM122 142h2v2h-2zM236 142h2v2h-2zM260 142h2v2h-2zM12 146h2v2h-2zM70 146h2v2h-2zM178 146h2v2h-2zM229 146h2v2h-2zM242 146h2v2h-2zM10 148h2v2h-2zM12 148h2v2h-2zM23 148h2v2h-2zM66 148h2v2h-2zM138 148h2v2h-2zM190 148h2v2h-2zM43 150h2v2h-2zM54 150h2v2h-2zM81 150h2v2h-2zM155 150h2v2h-2zM244 150h2v2h-2zM167 152h2v2h-2zM2 154h2v2h-2zM93 156h2v2h-2zM242 156h2v2h-2zM269 156h2v2h-2zM196 158h2v2h-2zM202 158h2v2h-2zM25 160h2v2h-2zM81 160h2v2h-2zM211 160h2v2h-2zM79 162h2v2h-2zM151 162h2v2h-2zM74 164h2v2h-2zM81 164h2v2h-2zM196 164h2v2h-2zM4 167h2v2h-2zM143 167h2v2h-2zM221 167h2v2h-2zM273 167h2v2h-2zM45 169h2v2h-2zM145 169h2v2h-2zM231 169h2v2h-2zM279 169h2v2h-2zM10 171h2v2h-2zM165 171h2v2h-2zM184 171h2v2h-2zM186 171h2v2h-2zM45 173h2v2h-2zM58 173h2v2h-2zM85 173h2v2h-2zM258 173h2v2h-2zM262 173h2v2h-2zM273 173h2v2h-2zM103 175h2v2h-2zM147 175h2v2h-2zM161 175h2v2h-2zM68 177h2v2h-2zM211 177h2v2h-2zM43 179h2v2h-2zM159 179h2v2h-2zM56 181h2v2h-2zM97 181h2v2h-2zM221 181h2v2h-2zM256 181h2v2h-2zM10 183h2v2h-2zM14 183h2v2h-2zM21 183h2v2h-2zM29 183h2v2h-2zM45 183h2v2h-2zM163 183h2v2h-2zM97 185h2v2h-2zM169 185h2v2h-2zM279 185h2v2h-2zM62 187h2v2h-2zM105 187h2v2h-2zM221 187h2v2h-2zM74 189h2v2h-2zM254 189h2v2h-2zM147 192h2v2h-2zM277 192h2v2h-2zM43 196h2v2h-2zM252 196h2v2h-2zM140 198h2v2h-2zM258 198h2v2h-2zM10 200h2v2h-2zM93 200h2v2h-2zM174 200h2v2h-2zM196 200h2v2h-2zM155 202h2v2h-2zM184 204h2v2h-2zM188 204h2v2h-2zM12 206h2v2h-2zM83 206h2v2h-2zM103 206h2v2h-2zM116 206h2v2h-2zM159 206h2v2h-2zM213 206h2v2h-2zM219 206h2v2h-2zM2 208h2v2h-2zM213 208h2v2h-2zM23 210h2v2h-2zM114 210h2v2h-2zM246 210h2v2h-2zM114 212h2v2h-2zM29 214h2v2h-2zM72 214h2v2h-2zM169 214h2v2h-2zM252 214h2v2h-2zM58 217h2v2h-2zM83 217h2v2h-2zM273 217h2v2h-2zM213 219h2v2h-2zM267 219h2v2h-2zM0 221h2v2h-2zM41 221h2v2h-2zM176 221h2v2h-2zM246 221h2v2h-2zM17 223h2v2h-2zM153 223h2v2h-2zM64 225h2v2h-2zM157 225h2v2h-2zM174 225h2v2h-2zM246 225h2v2h-2zM264 225h2v2h-2zM157 227h2v2h-2zM264 227h2v2h-2zM25 229h2v2h-2zM124 229h2v2h-2zM178 229h2v2h-2zM227 229h2v2h-2zM275 229h2v2h-2zM39 231h2v2h-2zM128 231h2v2h-2zM171 231h2v2h-2zM215 231h2v2h-2zM258 231h2v2h-2zM89 233h2v2h-2zM118 233h2v2h-2zM126 233h2v2h-2zM130 233h2v2h-2zM145 233h2v2h-2zM149 233h2v2h-2zM209 233h2v2h-2zM12 235h2v2h-2zM87 235h2v2h-2zM157 235h2v2h-2zM169 235h2v2h-2zM180 235h2v2h-2zM217 235h2v2h-2zM229 235h2v2h-2zM29 237h2v2h-2zM124 237h2v2h-2zM194 239h2v2h-2zM229 239h2v2h-2zM250 239h2v2h-2zM275 239h2v2h-2zM19 242h2v2h-2zM23 242h2v2h-2zM37 242h2v2h-2zM134 242h2v2h-2zM140 242h2v2h-2zM147 242h2v2h-2zM209 242h2v2h-2zM215 242h2v2h-2zM221 242h2v2h-2zM223 242h2v2h-2zM87 244h2v2h-2zM200 244h2v2h-2zM205 244h2v2h-2zM223 244h2v2h-2zM267 244h2v2h-2zM81 246h2v2h-2zM188 246h2v2h-2zM196 246h2v2h-2zM246 246h2v2h-2zM256 246h2v2h-2zM74 248h2v2h-2zM87 248h2v2h-2zM132 248h2v2h-2zM202 248h2v2h-2zM35 250h2v2h-2zM145 250h2v2h-2zM163 250h2v2h-2zM194 250h2v2h-2zM275 250h2v2h-2zM21 252h2v2h-2zM89 252h2v2h-2zM180 252h2v2h-2zM202 252h2v2h-2zM205 252h2v2h-2zM227 252h2v2h-2zM229 252h2v2h-2zM242 252h2v2h-2zM277 252h2v2h-2z" fill="#6a0a0a"/><path d="M153 0h2v2h-2zM19 2h2v2h-2zM25 4h2v2h-2zM198 4h2v2h-2zM217 4h2v2h-2zM58 25h2v2h-2zM188 25h2v2h-2zM194 25h2v2h-2zM153 27h2v2h-2zM79 31h2v2h-2zM132 37h2v2h-2zM153 37h2v2h-2zM205 44h2v2h-2zM68 46h2v2h-2zM118 46h2v2h-2zM37 48h2v2h-2zM54 50h2v2h-2zM159 54h2v2h-2zM229 54h2v2h-2zM196 56h2v2h-2zM87 62h2v2h-2zM184 62h2v2h-2zM246 69h2v2h-2zM227 73h2v2h-2zM262 73h2v2h-2zM279 73h2v2h-2zM103 75h2v2h-2zM227 75h2v2h-2zM256 75h2v2h-2zM60 81h2v2h-2zM0 83h2v2h-2zM62 83h2v2h-2zM151 83h2v2h-2zM60 87h2v2h-2zM130 87h2v2h-2zM256 90h2v2h-2zM165 92h2v2h-2zM182 96h2v2h-2zM217 96h2v2h-2zM213 98h2v2h-2zM159 100h2v2h-2zM221 100h2v2h-2zM136 106h2v2h-2zM217 106h2v2h-2zM157 110h2v2h-2zM35 112h2v2h-2zM39 117h2v2h-2zM124 119h2v2h-2zM190 119h2v2h-2zM70 123h2v2h-2zM143 125h2v2h-2zM238 125h2v2h-2zM21 127h2v2h-2zM227 135h2v2h-2zM244 135h2v2h-2zM213 142h2v2h-2zM58 144h2v2h-2zM91 144h2v2h-2zM194 144h2v2h-2zM198 144h2v2h-2zM258 144h2v2h-2zM0 146h2v2h-2zM19 146h2v2h-2zM240 150h2v2h-2zM163 152h2v2h-2zM178 152h2v2h-2zM174 154h2v2h-2zM188 160h2v2h-2zM12 164h2v2h-2zM126 175h2v2h-2zM184 175h2v2h-2zM21 179h2v2h-2zM17 187h2v2h-2zM159 187h2v2h-2zM128 189h2v2h-2zM169 189h2v2h-2zM140 194h2v2h-2zM89 202h2v2h-2zM116 202h2v2h-2zM165 212h2v2h-2zM200 212h2v2h-2zM87 225h2v2h-2zM233 227h2v2h-2zM35 229h2v2h-2zM95 233h2v2h-2zM52 235h2v2h-2zM178 237h2v2h-2zM37 239h2v2h-2zM31 242h2v2h-2zM279 244h2v2h-2zM17 248h2v2h-2zM114 248h2v2h-2zM126 248h2v2h-2zM217 248h2v2h-2zM159 250h2v2h-2zM250 250h2v2h-2zM260 252h2v2h-2z" fill="#e01818"/><path d="M6 27h2v2h-2zM134 44h2v2h-2zM186 46h2v2h-2zM155 83h2v2h-2zM184 90h2v2h-2zM122 92h2v2h-2zM211 110h2v2h-2zM52 123h2v2h-2zM74 125h2v2h-2zM267 171h2v2h-2zM145 175h2v2h-2zM0 183h2v2h-2zM130 206h2v2h-2zM110 217h2v2h-2zM254 223h2v2h-2zM8 231h2v2h-2zM112 237h2v2h-2zM68 248h2v2h-2zM120 248h2v2h-2z" fill="#ff9a30"/><path d="M76 75h2v2h-2zM85 90h2v2h-2zM107 115h2v2h-2zM236 183h2v2h-2zM149 221h2v2h-2zM72 223h2v2h-2zM161 248h2v2h-2z" fill="#ffd24a"/></svg>
<div style="left:783px;top:12px;width:1px;height:255px;background:#666;"></div>
<div style="left:783px;top:266px;width:283px;height:1px;background:#666;"></div>
<div style="top:6.50px;font-size:12px;line-height:15px;color:#000;white-space:nowrap;letter-spacing:-0.176px;right:1215px;text-align:right;">20</div>
<div style="left:776px;top:14px;width:6px;height:1px;background:#000;"></div>
<div style="top:28.70px;font-size:12px;line-height:15px;color:#000;white-space:nowrap;letter-spacing:-0.176px;right:1215px;text-align:right;">30</div>
<div style="left:776px;top:36px;width:6px;height:1px;background:#000;"></div>
<div style="top:50.90px;font-size:12px;line-height:15px;color:#000;white-space:nowrap;letter-spacing:-0.176px;right:1215px;text-align:right;">40</div>
<div style="left:776px;top:58px;width:6px;height:1px;background:#000;"></div>
<div style="top:73.10px;font-size:12px;line-height:15px;color:#000;white-space:nowrap;letter-spacing:-0.176px;right:1215px;text-align:right;">50</div>
<div style="left:776px;top:80px;width:6px;height:1px;background:#000;"></div>
<div style="top:95.30px;font-size:12px;line-height:15px;color:#000;white-space:nowrap;letter-spacing:-0.176px;right:1215px;text-align:right;">60</div>
<div style="left:776px;top:102px;width:6px;height:1px;background:#000;"></div>
<div style="top:117.50px;font-size:12px;line-height:15px;color:#000;white-space:nowrap;letter-spacing:-0.176px;right:1215px;text-align:right;">70</div>
<div style="left:776px;top:124px;width:6px;height:1px;background:#000;"></div>
<div style="top:139.70px;font-size:12px;line-height:15px;color:#000;white-space:nowrap;letter-spacing:-0.176px;right:1215px;text-align:right;">80</div>
<div style="left:776px;top:147px;width:6px;height:1px;background:#000;"></div>
<div style="top:161.90px;font-size:12px;line-height:15px;color:#000;white-space:nowrap;letter-spacing:-0.176px;right:1215px;text-align:right;">90</div>
<div style="left:776px;top:169px;width:6px;height:1px;background:#000;"></div>
<div style="top:184.10px;font-size:12px;line-height:15px;color:#000;white-space:nowrap;letter-spacing:-0.176px;right:1215px;text-align:right;">100</div>
<div style="left:776px;top:191px;width:6px;height:1px;background:#000;"></div>
<div style="top:206.30px;font-size:12px;line-height:15px;color:#000;white-space:nowrap;letter-spacing:0.121px;right:1215px;text-align:right;">110</div>
<div style="left:776px;top:213px;width:6px;height:1px;background:#000;"></div>
<div style="top:228.50px;font-size:12px;line-height:15px;color:#000;white-space:nowrap;letter-spacing:-0.176px;right:1215px;text-align:right;">120</div>
<div style="left:776px;top:236px;width:6px;height:1px;background:#000;"></div>
<div style="left:776px;top:256px;width:6px;height:1px;background:#000;"></div>
<div style="top:258.50px;font-size:12px;line-height:15px;color:#000;white-space:nowrap;letter-spacing:-0.176px;right:1215px;text-align:right;">134</div>
<div style="left:776px;top:265px;width:6px;height:1px;background:#000;"></div>
<div style="left:784px;top:268px;width:1px;height:5px;background:#000;"></div>
<div style="top:273.50px;font-size:12px;line-height:15px;color:#000;white-space:nowrap;left:484px;width:600px;text-align:center;">5</div>
<div style="left:815px;top:268px;width:1px;height:5px;background:#000;"></div>
<div style="top:273.50px;font-size:12px;line-height:15px;color:#000;white-space:nowrap;letter-spacing:-0.176px;left:515.4px;width:600px;text-align:center;">20</div>
<div style="left:857px;top:268px;width:1px;height:5px;background:#000;"></div>
<div style="top:273.50px;font-size:12px;line-height:15px;color:#000;white-space:nowrap;letter-spacing:-0.176px;left:557.3px;width:600px;text-align:center;">40</div>
<div style="left:899px;top:268px;width:1px;height:5px;background:#000;"></div>
<div style="top:273.50px;font-size:12px;line-height:15px;color:#000;white-space:nowrap;letter-spacing:-0.176px;left:598.6px;width:600px;text-align:center;">60</div>
<div style="left:940px;top:268px;width:1px;height:5px;background:#000;"></div>
<div style="top:273.50px;font-size:12px;line-height:15px;color:#000;white-space:nowrap;letter-spacing:-0.176px;left:640.3px;width:600px;text-align:center;">80</div>
<div style="left:982px;top:268px;width:1px;height:5px;background:#000;"></div>
<div style="top:273.50px;font-size:12px;line-height:15px;color:#000;white-space:nowrap;letter-spacing:-0.176px;left:681.6px;width:600px;text-align:center;">100</div>
<div style="left:1023px;top:268px;width:1px;height:5px;background:#000;"></div>
<div style="top:273.50px;font-size:12px;line-height:15px;color:#000;white-space:nowrap;letter-spacing:-0.176px;left:723px;width:600px;text-align:center;">120</div>
<div style="left:1064px;top:268px;width:1px;height:5px;background:#000;"></div>
<div style="top:273.50px;font-size:12px;line-height:15px;color:#000;white-space:nowrap;letter-spacing:-0.176px;left:764.5px;width:600px;text-align:center;">140</div>
<div style="left:1090px;top:3px;width:22px;height:152px;background:#b0b0b0;border-left:1px solid #8a8a8a;border-top:1px solid #8a8a8a;box-sizing:border-box;"></div>
<div style="left:1091px;top:4px;width:20px;height:150px;background:linear-gradient(#7a0a0a 0,#6a0808 10%,#400404 45%,#1c0000 75%,#000 100%);"></div>
<div style="left:1091px;top:4px;width:20px;height:4px;background:#fff;"></div>
<div style="left:1091px;top:8px;width:20px;height:1px;background:#000;"></div>
<div style="left:1112px;top:10px;width:4px;height:1px;background:#000;"></div>
<div style="top:3.50px;font-size:12px;line-height:15px;color:#000;white-space:nowrap;letter-spacing:-0.176px;left:1117px;">1238</div>
<div style="left:1112px;top:148px;width:4px;height:1px;background:#000;"></div>
<div style="top:141.50px;font-size:12px;line-height:15px;color:#000;white-space:nowrap;letter-spacing:-0.176px;left:1117px;">64</div>
<div style="top:27.50px;font-size:12px;line-height:15px;color:#000;white-space:nowrap;letter-spacing:0.107px;left:1146px;width:43px;overflow:hidden;">intensity</div>
<div style="left:1156px;top:43px;width:40px;height:24px;background:#d6d6d6;box-sizing:border-box;border:3px solid;border-color:#8e8e8e #cfcfcf #cfcfcf #8e8e8e;"></div>
<div style="top:48.50px;font-size:12px;line-height:15px;color:#000;white-space:nowrap;letter-spacing:-0.562px;left:1162px;">1.5</div>
<div style="top:77.50px;font-size:12px;line-height:15px;color:#000;white-space:nowrap;letter-spacing:0.051px;left:1157px;width:32px;overflow:hidden;">radius</div>
<div style="left:1156px;top:93px;width:40px;height:24px;background:#d6d6d6;box-sizing:border-box;border:3px solid;border-color:#8e8e8e #cfcfcf #cfcfcf #8e8e8e;"></div>
<div style="top:98.00px;font-size:12px;line-height:15px;color:#000;white-space:nowrap;letter-spacing:-0.171px;left:1162px;">-1.9</div>
<div style="top:180.00px;font-size:12px;line-height:15px;color:#000;white-space:nowrap;letter-spacing:-0.060px;left:1107.5px;">center</div>
<div style="left:1106px;top:195px;width:90px;height:32px;background:#b0b0b0;box-sizing:border-box;border:3px solid;border-color:#8e8e8e #c6c6c6 #c6c6c6 #8e8e8e;"></div>
<div style="left:1111px;top:200px;width:38px;height:21px;background:#d6d6d6;box-sizing:border-box;border:2px solid;border-color:#8a8a8a #e4e4e4 #e4e4e4 #8a8a8a;"></div>
<div style="top:204.00px;font-size:12px;line-height:15px;color:#000;white-space:nowrap;letter-spacing:-0.208px;left:1116px;width:27px;overflow:hidden;">183.9</div>
<div style="left:1152px;top:200px;width:40px;height:21px;background:#d6d6d6;box-sizing:border-box;border:2px solid;border-color:#8a8a8a #e4e4e4 #e4e4e4 #8a8a8a;"></div>
<div style="top:204.00px;font-size:12px;line-height:15px;color:#000;white-space:nowrap;letter-spacing:-0.452px;left:1156px;width:30px;overflow:hidden;">137.24</div>
<div style="top:236.00px;font-size:12px;line-height:15px;color:#000;white-space:nowrap;letter-spacing:-0.045px;left:1099.5px;">last mod</div>
<div style="left:1098px;top:251px;width:98px;height:40px;background:#d6d6d6;box-sizing:border-box;border:3px solid;border-color:#8e8e8e #cfcfcf #cfcfcf #8e8e8e;"></div>
<div style="top:256.50px;font-size:12px;line-height:15px;color:#000;white-space:nowrap;letter-spacing:-0.591px;left:1104px;">14:15:36.000</div>
<div style="top:272.00px;font-size:12px;line-height:15px;color:#000;white-space:nowrap;letter-spacing:-0.169px;left:1104px;">06/11/2023</div>
<div style="left:1189px;top:0px;width:16px;height:257px;background:#cdcdcd;"></div>
<div style="left:1189px;top:257px;width:16px;height:181px;background:#f0f0f0;"></div>
<div style="left:750px;top:296px;width:439px;height:142px;background:#b8b8b8;border-top:1px solid #d8d8d8;background:linear-gradient(90deg,#d0d0d0 0,#bcbcbc 8px,#b8b8b8 14px,#b8b8b8 425px,#a4a4a4 439px);"></div>
<svg style="left:786px;top:304px;" width="384" height="116" viewBox="0 0 384 116" ><rect width="384" height="116" fill="#000"/><path d="M6.4 0V116M12.8 0V116M19.2 0V116M25.6 0V116M38.4 0V116M44.8 0V116M51.2 0V116M57.6 0V116M70.4 0V116M76.8 0V116M83.2 0V116M89.6 0V116M102.4 0V116M108.8 0V116M115.2 0V116M121.6 0V116M134.4 0V116M140.8 0V116M147.2 0V116M153.6 0V116M166.4 0V116M172.8 0V116M179.2 0V116M185.6 0V116M198.4 0V116M204.8 0V116M211.2 0V116M217.6 0V116M230.4 0V116M236.8 0V116M243.2 0V116M249.6 0V116M262.4 0V116M268.8 0V116M275.2 0V116M281.6 0V116M294.4 0V116M300.8 0V116M307.2 0V116M313.6 0V116M326.4 0V116M332.8 0V116M339.2 0V116M345.6 0V116M358.4 0V116M364.8 0V116M371.2 0V116M377.6 0V116M0 5.8H384M0 11.6H384M0 17.4H384M0 23.2H384M0 34.8H384M0 40.6H384M0 46.4H384M0 52.2H384M0 63.8H384M0 69.6H384M0 75.4H384M0 81.2H384M0 92.8H384M0 98.6H384M0 104.4H384M0 110.2H384" stroke="#003a00" stroke-width="1" fill="none" shape-rendering="crispEdges"/><path d="M32.0 0V116M64.0 0V116M96.0 0V116M128.0 0V116M160.0 0V116M192.0 0V116M224.0 0V116M256.0 0V116M288.0 0V116M320.0 0V116M352.0 0V116M0 29.0H384M0 58.0H384M0 87.0H384" stroke="#006600" stroke-width="1" fill="none" shape-rendering="crispEdges"/><path d="M-1 109.5h3M0.5 108v3M2 99.5h3M3.5 98v3M5 106.5h3M6.5 105v3M9 86.5h3M10.5 85v3M12 92.5h3M13.5 91v3M15 54.5h3M16.5 53v3M18 93.5h3M19.5 92v3M21 99.5h3M22.5 98v3M25 103.5h3M26.5 102v3M28 85.5h3M29.5 84v3M31 101.5h3M32.5 100v3M34 101.5h3M35.5 100v3M37 103.5h3M38.5 102v3M41 93.5h3M42.5 92v3M44 96.5h3M45.5 95v3M47 101.5h3M48.5 100v3M50 83.5h3M51.5 82v3M53 90.5h3M54.5 89v3M57 83.5h3M58.5 82v3M60 95.5h3M61.5 94v3M63 93.5h3M64.5 92v3M66 92.5h3M67.5 91v3M69 67.5h3M70.5 66v3M73 96.5h3M74.5 95v3M76 101.5h3M77.5 100v3M79 92.5h3M80.5 91v3M82 98.5h3M83.5 97v3M85 92.5h3M86.5 91v3M89 86.5h3M90.5 85v3M92 83.5h3M93.5 82v3M95 92.5h3M96.5 91v3M98 93.5h3M99.5 92v3M101 83.5h3M102.5 82v3M105 82.5h3M106.5 81v3M108 80.5h3M109.5 79v3M111 93.5h3M112.5 92v3M114 93.5h3M115.5 92v3M117 90.5h3M118.5 89v3M121 93.5h3M122.5 92v3M124 89.5h3M125.5 88v3M127 86.5h3M128.5 85v3M130 83.5h3M131.5 82v3M133 93.5h3M134.5 92v3M137 80.5h3M138.5 79v3M140 83.5h3M141.5 82v3M143 96.5h3M144.5 95v3M146 92.5h3M147.5 91v3M149 85.5h3M150.5 84v3M153 93.5h3M154.5 92v3M156 77.5h3M157.5 76v3M159 92.5h3M160.5 91v3M162 80.5h3M163.5 79v3M165 87.5h3M166.5 86v3M169 87.5h3M170.5 86v3M172 89.5h3M173.5 88v3M175 79.5h3M176.5 78v3M178 82.5h3M179.5 81v3M181 82.5h3M182.5 81v3M185 79.5h3M186.5 78v3M188 73.5h3M189.5 72v3M191 71.5h3M192.5 70v3M194 76.5h3M195.5 75v3M197 74.5h3M198.5 73v3M201 61.5h3M202.5 60v3M204 58.5h3M205.5 57v3M207 53.5h3M208.5 52v3M210 54.5h3M211.5 53v3M213 66.5h3M214.5 65v3M217 63.5h3M218.5 62v3M220 66.5h3M221.5 65v3M223 70.5h3M224.5 69v3M226 67.5h3M227.5 66v3M229 71.5h3M230.5 70v3M233 69.5h3M234.5 68v3M236 69.5h3M237.5 68v3M239 67.5h3M240.5 66v3M242 57.5h3M243.5 56v3M245 69.5h3M246.5 68v3M249 66.5h3M250.5 65v3M252 76.5h3M253.5 75v3M255 54.5h3M256.5 53v3M258 73.5h3M259.5 72v3M261 58.5h3M262.5 57v3M265 71.5h3M266.5 70v3M268 67.5h3M269.5 66v3M271 69.5h3M272.5 68v3M274 67.5h3M275.5 66v3M277 64.5h3M278.5 63v3M281 66.5h3M282.5 65v3M284 69.5h3M285.5 68v3M287 69.5h3M288.5 68v3M290 67.5h3M291.5 66v3M293 70.5h3M294.5 69v3M297 63.5h3M298.5 62v3M300 61.5h3M301.5 60v3M303 67.5h3M304.5 66v3M306 67.5h3M307.5 66v3M309 40.5h3M310.5 39v3M313 69.5h3M314.5 68v3M316 61.5h3M317.5 60v3M319 48.5h3M320.5 47v3M322 56.5h3M323.5 55v3M325 45.5h3M326.5 44v3M329 24.5h3M330.5 23v3M332 63.5h3M333.5 62v3M335 45.5h3M336.5 44v3M338 53.5h3M339.5 52v3M341 67.5h3M342.5 66v3M345 79.5h3M346.5 78v3M348 41.5h3M349.5 40v3M351 77.5h3M352.5 76v3M354 19.5h3M355.5 18v3M357 85.5h3M358.5 84v3M361 58.5h3M362.5 57v3M364 69.5h3M365.5 68v3" stroke="#fff" stroke-width="1" fill="none" shape-rendering="crispEdges"/></svg>
<div style="top:298.00px;font-size:12px;line-height:15px;color:#000;white-space:nowrap;letter-spacing:-0.176px;right:1213px;text-align:right;">140</div>
<div style="left:778px;top:305px;width:6px;height:1px;background:#000;"></div>
<div style="top:326.90px;font-size:12px;line-height:15px;color:#000;white-space:nowrap;letter-spacing:-0.176px;right:1213px;text-align:right;">120</div>
<div style="left:778px;top:334px;width:6px;height:1px;background:#000;"></div>
<div style="top:355.80px;font-size:12px;line-height:15px;color:#000;white-space:nowrap;letter-spacing:-0.176px;right:1213px;text-align:right;">100</div>
<div style="left:778px;top:363px;width:6px;height:1px;background:#000;"></div>
<div style="top:384.70px;font-size:12px;line-height:15px;color:#000;white-space:nowrap;letter-spacing:-0.176px;right:1213px;text-align:right;">80</div>
<div style="left:778px;top:392px;width:6px;height:1px;background:#000;"></div>
<div style="top:413.60px;font-size:12px;line-height:15px;color:#000;white-space:nowrap;letter-spacing:-0.176px;right:1213px;text-align:right;">60</div>
<div style="left:778px;top:421px;width:6px;height:1px;background:#000;"></div>
<div style="left:786px;top:422px;width:1px;height:5px;background:#000;"></div>
<div style="top:427.50px;font-size:12px;line-height:15px;color:#000;white-space:nowrap;left:486.5px;width:600px;text-align:center;">0</div>
<div style="left:818px;top:422px;width:1px;height:5px;background:#000;"></div>
<div style="top:427.50px;font-size:12px;line-height:15px;color:#000;white-space:nowrap;letter-spacing:-0.176px;left:518.5px;width:600px;text-align:center;">10</div>
<div style="left:850px;top:422px;width:1px;height:5px;background:#000;"></div>
<div style="top:427.50px;font-size:12px;line-height:15px;color:#000;white-space:nowrap;letter-spacing:-0.176px;left:550.5px;width:600px;text-align:center;">20</div>
<div style="left:882px;top:422px;width:1px;height:5px;background:#000;"></div>
<div style="top:427.50px;font-size:12px;line-height:15px;color:#000;white-space:nowrap;letter-spacing:-0.176px;left:582.5px;width:600px;text-align:center;">30</div>
<div style="left:914px;top:422px;width:1px;height:5px;background:#000;"></div>
<div style="top:427.50px;font-size:12px;line-height:15px;color:#000;white-space:nowrap;letter-spacing:-0.176px;left:614.5px;width:600px;text-align:center;">40</div>
<div style="left:946px;top:422px;width:1px;height:5px;background:#000;"></div>
<div style="top:427.50px;font-size:12px;line-height:15px;color:#000;white-space:nowrap;letter-spacing:-0.176px;left:646.5px;width:600px;text-align:center;">50</div>
<div style="left:978px;top:422px;width:1px;height:5px;background:#000;"></div>
<div style="top:427.50px;font-size:12px;line-height:15px;color:#000;white-space:nowrap;letter-spacing:-0.176px;left:678.5px;width:600px;text-align:center;">60</div>
<div style="left:1010px;top:422px;width:1px;height:5px;background:#000;"></div>
<div style="top:427.50px;font-size:12px;line-height:15px;color:#000;white-space:nowrap;letter-spacing:-0.176px;left:710.5px;width:600px;text-align:center;">70</div>
<div style="left:1042px;top:422px;width:1px;height:5px;background:#000;"></div>
<div style="top:427.50px;font-size:12px;line-height:15px;color:#000;white-space:nowrap;letter-spacing:-0.176px;left:742.5px;width:600px;text-align:center;">80</div>
<div style="left:1074px;top:422px;width:1px;height:5px;background:#000;"></div>
<div style="top:427.50px;font-size:12px;line-height:15px;color:#000;white-space:nowrap;letter-spacing:-0.176px;left:774.5px;width:600px;text-align:center;">90</div>
<div style="left:1106px;top:422px;width:1px;height:5px;background:#000;"></div>
<div style="top:427.50px;font-size:12px;line-height:15px;color:#000;white-space:nowrap;letter-spacing:-0.176px;left:806.5px;width:600px;text-align:center;">100</div>
<div style="left:1138px;top:422px;width:1px;height:5px;background:#000;"></div>
<div style="top:427.50px;font-size:12px;line-height:15px;color:#000;white-space:nowrap;letter-spacing:0.121px;left:838.5px;width:600px;text-align:center;">110</div>
<div style="left:1170px;top:422px;width:1px;height:5px;background:#000;"></div>
<div style="top:427.50px;font-size:12px;line-height:15px;color:#000;white-space:nowrap;letter-spacing:-0.176px;left:870.5px;width:600px;text-align:center;">120</div>
<div style="left:549px;top:354.50px;width:400px;text-align:center;font-size:12px;line-height:15px;color:#000;white-space:nowrap;transform:rotate(-90deg);transform-origin:50% 50%;letter-spacing:-0.153px;">Amplitude</div>
<div style="left:1031px;top:301px;width:158px;height:22px;background:#b8b8b8;background:linear-gradient(90deg,#d4d4d4 0,#c0c0c0 12px,#b6b6b6 40px,#b6b6b6 100%);border-bottom:1px solid #8a8a8a;border-top:1px solid #d8d8d8;box-sizing:border-box;"></div>
<div style="top:304.50px;font-size:12px;line-height:15px;color:#000;white-space:nowrap;letter-spacing:-0.464px;left:1046px;">Data</div>
<div style="left:1081px;top:303px;width:28px;height:17px;background:#000;"></div>
<svg style="left:1081px;top:303px;" width="28" height="17" viewBox="0 0 28 17" ><path d="M11 3.5h3M12.5 2v3M2 12.5h3M3.5 11v3M21 12.5h3M22.5 11v3" stroke="#fff" stroke-width="1" shape-rendering="crispEdges"/></svg>
<div style="top:304.50px;font-size:12px;line-height:15px;color:#000;white-space:nowrap;letter-spacing:-0.112px;left:1116.5px;">Fit</div>
<div style="left:1151px;top:303px;width:28px;height:17px;background:#000;"></div>
<svg style="left:1151px;top:303px;" width="28" height="17" viewBox="0 0 28 17" ><path d="M2 12L14.5 3L27 12" fill="none" stroke="#f03c3c" stroke-width="1.6"/></svg></div>
<div style="left:1580px;top:158px;width:409px;height:346px;box-shadow:0 1px 9px rgba(0,0,0,.5);"></div>
<!-- partE -->
<div class="win" style="clip-path:inset(158px 0px 680px 1580px)"><div style="left:1580px;top:158px;width:409px;height:346px;background:#fff;"></div>
<div style="left:1840px;top:162px;width:58px;height:27px;background:#f0f082;"></div>
<div style="top:169.50px;font-size:12px;line-height:15px;color:#222;white-space:nowrap;letter-spacing:-0.076px;left:1841px;">anage</div>
<div style="left:1939px;top:173px;width:11px;height:1px;background:#666;"></div>
<div style="left:1985px;top:168px;width:10px;height:10px;border:1px solid #666;box-sizing:border-box;"></div>
<div style="top:194.50px;font-size:12px;line-height:15px;color:#222;white-space:nowrap;letter-spacing:-0.166px;left:1841px;">ure Tools</div>
<div style="left:1903px;top:190px;width:1px;height:18px;background:#dadada;"></div>
<div style="left:1580px;top:213px;width:409px;height:1px;background:#dadada;"></div>
<div style="left:1580px;top:218px;width:334px;height:29px;background:#fff;border:1px solid #d9d9d9;box-sizing:border-box;"></div>
<div style="left:1883px;top:219px;width:1px;height:27px;background:#d9d9d9;"></div>
<svg style="left:1862px;top:228px;" width="14" height="12" viewBox="0 0 14 12" ><path d="M2.500 3.500L7 8L11.500 3.500" stroke="#6e6e6e" stroke-width="2" fill="none"/></svg>
<svg style="left:1890px;top:224px;" width="18" height="19" viewBox="0 0 18 19" ><path d="M9 5.200A4.600 4.600 0 1 1 5 7.700" stroke="#6e6e6e" stroke-width="1.600" fill="none"/><path d="M8.600 2v3.600h3.400" stroke="#6e6e6e" stroke-width="1.500" fill="none"/></svg>
<div style="left:1926px;top:218px;width:70px;height:29px;background:#fff;border:1px solid #d9d9d9;box-sizing:border-box;"></div>
<svg style="left:1938px;top:224px;" width="18" height="18" viewBox="0 0 18 18" ><circle cx="11" cy="7" r="4.3" stroke="#666" stroke-width="1.2" fill="none"/><path d="M8 10.2L2.5 15.8" stroke="#666" stroke-width="1.3"/></svg>
<div style="top:226.00px;font-size:12px;line-height:15px;color:#6d6d6d;white-space:nowrap;letter-spacing:-0.671px;left:1967px;">Search</div>
<div style="top:261.50px;font-size:12px;line-height:15px;color:#3c5078;white-space:nowrap;letter-spacing:-0.254px;left:1597px;">Name</div>
<div style="left:1851px;top:255px;width:1px;height:24px;background:#e5e5e5;"></div>
<svg style="left:1918px;top:254px;" width="10" height="6" viewBox="0 0 10 6" ><path d="M1 1L5 4.5L9 1" stroke="#777" stroke-width="1" fill="none"/></svg>
<div style="top:261.50px;font-size:12px;line-height:15px;color:#3c5078;white-space:nowrap;letter-spacing:-0.005px;left:1858.5px;">Date modified</div>
<svg style="left:1599px;top:289px;" width="16" height="17" viewBox="0 0 16 17" ><path d="M3 2.5h11l-1.5 12.5H1.5Z" fill="#a8d4ee" stroke="#6a9ec4" stroke-width="1"/><path d="M3.5 5h9.5M3.3 7.5h9.4M3 10h9.4M2.8 12.5h9.4" stroke="#7fb4d8" stroke-width="0.8"/><path d="M3 2h11" stroke="#555" stroke-width="1.4" stroke-dasharray="1 1"/><path d="M1.5 15.2h11.5" stroke="#c8a878" stroke-width="1"/></svg>
<div style="top:290.00px;font-size:12px;line-height:15px;color:#111;white-space:nowrap;letter-spacing:-0.541px;left:1618.5px;">5755_140756_TrackDetector</div>
<div style="top:290.00px;font-size:12px;line-height:15px;color:#6a6a6a;white-space:nowrap;letter-spacing:-0.316px;left:1858.5px;">06/11/2023 14:07</div>
<svg style="left:1599px;top:310px;" width="16" height="17" viewBox="0 0 16 17" ><path d="M2.5 0.5h7l3.5 3.5v11.5h-10.500Z" fill="#fff" stroke="#7a7a7a" stroke-width="1"/><path d="M9.5 0.5v3.500h3.500" fill="none" stroke="#7a7a7a" stroke-width="1"/><rect x="4.500" y="5.500" width="6" height="5.500" fill="#2a7ad8" stroke="#1a58b0" stroke-width="0.8"/><path d="M5.5 10l2-2 1.2 1 1.300-1.500" stroke="#bfe0ff" stroke-width="0.9" fill="none"/></svg>
<div style="top:310.95px;font-size:12px;line-height:15px;color:#111;white-space:nowrap;letter-spacing:-0.541px;left:1618.5px;">5755_140756_TrackDetector</div>
<div style="top:310.95px;font-size:12px;line-height:15px;color:#6a6a6a;white-space:nowrap;letter-spacing:-0.316px;left:1858.5px;">06/11/2023 14:07</div>
<svg style="left:1599px;top:331px;" width="16" height="17" viewBox="0 0 16 17" ><path d="M3 2.5h11l-1.5 12.5H1.5Z" fill="#a8d4ee" stroke="#6a9ec4" stroke-width="1"/><path d="M3.5 5h9.5M3.3 7.5h9.4M3 10h9.4M2.8 12.5h9.4" stroke="#7fb4d8" stroke-width="0.8"/><path d="M3 2h11" stroke="#555" stroke-width="1.4" stroke-dasharray="1 1"/><path d="M1.5 15.2h11.5" stroke="#c8a878" stroke-width="1"/></svg>
<div style="top:331.90px;font-size:12px;line-height:15px;color:#111;white-space:nowrap;letter-spacing:-0.404px;left:1618.5px;">5755_140530_DownstreamDump</div>
<div style="top:331.90px;font-size:12px;line-height:15px;color:#6a6a6a;white-space:nowrap;letter-spacing:-0.316px;left:1858.5px;">06/11/2023 14:05</div>
<svg style="left:1599px;top:352px;" width="16" height="17" viewBox="0 0 16 17" ><path d="M2.5 0.5h7l3.5 3.5v11.5h-10.500Z" fill="#fff" stroke="#8a8a8a" stroke-width="1"/><path d="M9.5 0.5v3.500h3.500" fill="none" stroke="#8a8a8a" stroke-width="1"/><path d="M4.500 5.500h6.500M4.500 7.500h6.500M4.500 9.500h6.500M4.500 11.500h6.500M4.500 13.500h6.500" stroke="#9a9a9a" stroke-width="0.9"/></svg>
<div style="top:352.85px;font-size:12px;line-height:15px;color:#111;white-space:nowrap;letter-spacing:-0.404px;left:1618.5px;">5755_140530_DownstreamDump</div>
<div style="top:352.85px;font-size:12px;line-height:15px;color:#6a6a6a;white-space:nowrap;letter-spacing:-0.316px;left:1858.5px;">06/11/2023 14:05</div>
<svg style="left:1599px;top:373px;" width="16" height="17" viewBox="0 0 16 17" ><path d="M2.5 0.5h7l3.5 3.5v11.5h-10.500Z" fill="#fff" stroke="#7a7a7a" stroke-width="1"/><path d="M9.5 0.5v3.500h3.500" fill="none" stroke="#7a7a7a" stroke-width="1"/><rect x="4.500" y="5.500" width="6" height="5.500" fill="#2a7ad8" stroke="#1a58b0" stroke-width="0.8"/><path d="M5.5 10l2-2 1.2 1 1.300-1.500" stroke="#bfe0ff" stroke-width="0.9" fill="none"/></svg>
<div style="top:373.80px;font-size:12px;line-height:15px;color:#111;white-space:nowrap;letter-spacing:-0.404px;left:1618.5px;">5755_140530_DownstreamDump</div>
<div style="top:373.80px;font-size:12px;line-height:15px;color:#6a6a6a;white-space:nowrap;letter-spacing:-0.316px;left:1858.5px;">06/11/2023 14:05</div>
<svg style="left:1599px;top:394px;" width="16" height="17" viewBox="0 0 16 17" ><path d="M2.5 0.5h7l3.5 3.5v11.5h-10.500Z" fill="#fff" stroke="#8a8a8a" stroke-width="1"/><path d="M9.5 0.5v3.500h3.500" fill="none" stroke="#8a8a8a" stroke-width="1"/><path d="M4.500 5.500h6.500M4.500 7.500h6.500M4.500 9.500h6.500M4.500 11.500h6.500M4.500 13.500h6.500" stroke="#9a9a9a" stroke-width="0.9"/></svg>
<div style="top:394.75px;font-size:12px;line-height:15px;color:#111;white-space:nowrap;letter-spacing:-0.578px;left:1618.5px;">5755_140423_BeamScint</div>
<div style="top:394.75px;font-size:12px;line-height:15px;color:#6a6a6a;white-space:nowrap;letter-spacing:-0.316px;left:1858.5px;">06/11/2023 14:04</div>
<svg style="left:1599px;top:415px;" width="16" height="17" viewBox="0 0 16 17" ><path d="M2.5 0.5h7l3.5 3.5v11.5h-10.500Z" fill="#fff" stroke="#7a7a7a" stroke-width="1"/><path d="M9.5 0.5v3.500h3.500" fill="none" stroke="#7a7a7a" stroke-width="1"/><rect x="4.500" y="5.500" width="6" height="5.500" fill="#2a7ad8" stroke="#1a58b0" stroke-width="0.8"/><path d="M5.5 10l2-2 1.2 1 1.300-1.500" stroke="#bfe0ff" stroke-width="0.9" fill="none"/></svg>
<div style="top:415.70px;font-size:12px;line-height:15px;color:#111;white-space:nowrap;letter-spacing:-0.578px;left:1618.5px;">5755_140423_BeamScint</div>
<div style="top:415.70px;font-size:12px;line-height:15px;color:#6a6a6a;white-space:nowrap;letter-spacing:-0.316px;left:1858.5px;">06/11/2023 14:04</div>
<svg style="left:1599px;top:436px;" width="16" height="17" viewBox="0 0 16 17" ><path d="M3 2.5h11l-1.5 12.5H1.5Z" fill="#a8d4ee" stroke="#6a9ec4" stroke-width="1"/><path d="M3.5 5h9.5M3.3 7.5h9.4M3 10h9.4M2.8 12.5h9.4" stroke="#7fb4d8" stroke-width="0.8"/><path d="M3 2h11" stroke="#555" stroke-width="1.4" stroke-dasharray="1 1"/><path d="M1.5 15.2h11.5" stroke="#c8a878" stroke-width="1"/></svg>
<div style="top:436.65px;font-size:12px;line-height:15px;color:#111;white-space:nowrap;letter-spacing:-0.767px;left:1618.5px;">5755_140420</div>
<div style="top:436.65px;font-size:12px;line-height:15px;color:#6a6a6a;white-space:nowrap;letter-spacing:-0.316px;left:1858.5px;">06/11/2023 14:04</div>
<svg style="left:1599px;top:457px;" width="16" height="17" viewBox="0 0 16 17" ><path d="M3 2.5h11l-1.5 12.5H1.5Z" fill="#a8d4ee" stroke="#6a9ec4" stroke-width="1"/><path d="M3.5 5h9.5M3.3 7.5h9.4M3 10h9.4M2.8 12.5h9.4" stroke="#7fb4d8" stroke-width="0.8"/><path d="M3 2h11" stroke="#555" stroke-width="1.4" stroke-dasharray="1 1"/><path d="M1.5 15.2h11.5" stroke="#c8a878" stroke-width="1"/></svg>
<div style="top:457.60px;font-size:12px;line-height:15px;color:#111;white-space:nowrap;letter-spacing:-0.541px;left:1618.5px;">5754_140229_TrackDetector</div>
<div style="top:457.60px;font-size:12px;line-height:15px;color:#6a6a6a;white-space:nowrap;letter-spacing:-0.316px;left:1858.5px;">06/11/2023 14:02</div>
<div style="left:1580px;top:464px;width:409px;height:2px;background:#fff;"></div>
<div style="left:1580px;top:466px;width:409px;height:15px;background:#f0f0f0;"></div>
<div style="left:1597px;top:466px;width:316px;height:15px;background:#cdcdcd;"></div>
<svg style="left:1581px;top:466px;" width="15" height="15" viewBox="0 0 15 15" ><path d="M9.500 3.500L5.500 7.500L9.500 11.500" stroke="#404040" stroke-width="2" fill="none"/></svg>
<div style="left:1580px;top:481px;width:409px;height:23px;background:#fff;"></div>
<div style="top:485.50px;font-size:12px;line-height:15px;color:#1e3287;white-space:nowrap;letter-spacing:-0.227px;left:1593.5px;">253 items</div>
<div style="left:1580px;top:158px;width:1px;height:346px;background:#666;"></div></div>
<div style="left:1308px;top:0px;width:533px;height:268px;box-shadow:0 1px 9px rgba(0,0,0,.5);"></div>
<!-- partB -->
<div class="win" style="clip-path:inset(0px 148px 916px 1308px);box-shadow:0 0 4px #444;"><div style="left:1308px;top:0px;width:516px;height:251px;background:#b4b4b4;"></div>
<div style="left:1334px;top:0px;width:423px;height:15px;background:#b8b8b8;border-bottom:2px solid #8a8a8a;box-sizing:border-box;background:linear-gradient(90deg,#cfcfcf 0,#b8b8b8 14px);"></div>
<div style="left:1757px;top:0px;width:1px;height:15px;background:#8a8a8a;"></div>
<div style="top:-3.50px;font-size:12px;line-height:15px;color:#000;white-space:nowrap;letter-spacing:-0.366px;left:1347.5px;">e-source FC</div>
<div style="left:1438px;top:0px;width:28px;height:12px;background:#000;"></div>
<svg style="left:1438px;top:0px;" width="28" height="12" viewBox="0 0 28 12" ><path d="M1 12L8 0M8 0L16 9L22 0M22 0L28 8" stroke="#fff" stroke-width="1" fill="none"/></svg>
<div style="top:-3.50px;font-size:12px;line-height:15px;color:#000;white-space:nowrap;letter-spacing:-0.466px;left:1474px;">Tee piece PMT</div>
<div style="left:1562px;top:0px;width:28px;height:12px;background:#000;"></div>
<svg style="left:1562px;top:0px;" width="28" height="12" viewBox="0 0 28 12" ><path d="M1 4L9 -3M15 -3L22 5L28 0" stroke="#f03030" stroke-width="1" fill="none"/></svg>
<div style="top:-3.00px;font-size:12px;line-height:15px;color:#000;white-space:nowrap;letter-spacing:0.060px;left:1686.5px;">Max-Min (V)</div>
<div style="left:1757px;top:0px;width:50px;height:14px;background:#d6d6d6;border-right:2px solid #e0e0e0;border-bottom:2px solid #e0e0e0;border-left:2px solid #8e8e8e;box-sizing:border-box;"></div>
<div style="top:-3.00px;font-size:12px;line-height:15px;color:#000;white-space:nowrap;letter-spacing:-0.272px;left:1763px;">2.74m</div>
<div style="left:1334px;top:16px;width:478px;height:228px;background:#b8b8b8;background:linear-gradient(90deg,#cdcdcd 0,#c0c0c0 9px,#b8b8b8 11px,#b8b8b8 466px,#a6a6a6 470px,#999 478px);border-top:1px solid #d8d8d8;border-bottom:2px solid #909090;box-sizing:border-box;"></div>
<svg style="left:1426px;top:26px;" width="362" height="177" viewBox="0 0 362 177" ><rect width="362" height="177" fill="#000"/><path d="M7.2 0V177M14.5 0V177M21.7 0V177M28.9 0V177M36.2 0V177M43.4 0V177M50.6 0V177M57.8 0V177M65.1 0V177M79.5 0V177M86.8 0V177M94.0 0V177M101.2 0V177M108.5 0V177M115.7 0V177M122.9 0V177M130.1 0V177M137.4 0V177M151.8 0V177M159.1 0V177M166.3 0V177M173.5 0V177M180.8 0V177M188.0 0V177M195.2 0V177M202.4 0V177M209.7 0V177M224.1 0V177M231.4 0V177M238.6 0V177M245.8 0V177M253.1 0V177M260.3 0V177M267.5 0V177M274.7 0V177M282.0 0V177M296.4 0V177M303.7 0V177M310.9 0V177M318.1 0V177M325.4 0V177M332.6 0V177M339.8 0V177M347.0 0V177M354.3 0V177M0 6.3H362M0 12.6H362M0 18.9H362M0 31.5H362M0 37.8H362M0 44.1H362M0 56.7H362M0 63.0H362M0 69.3H362M0 81.9H362M0 88.2H362M0 94.5H362M0 107.1H362M0 113.4H362M0 119.7H362M0 132.3H362M0 138.6H362M0 144.9H362M0 157.5H362M0 163.8H362M0 170.1H362" stroke="#003a00" stroke-width="1" fill="none" shape-rendering="crispEdges"/><path d="M72.3 0V177M144.6 0V177M216.9 0V177M289.2 0V177M0 25.2H362M0 50.4H362M0 75.6H362M0 100.8H362M0 126.0H362M0 151.2H362" stroke="#006600" stroke-width="1" fill="none" shape-rendering="crispEdges"/><path d="M0.0 25.8L1.1 29.3L1.8 20.3L2.6 21.5L3.7 21.8L4.5 24.5L5.3 28.0L6.0 22.8L6.7 25.3L7.8 26.2L8.9 24.0L10.0 18.9L10.8 19.5L11.9 24.6L12.9 20.5L14.0 28.2L15.0 22.6L15.8 19.2L16.8 31.8L17.6 24.1L18.6 25.3L19.7 18.9L20.5 28.6L21.2 18.4L22.2 19.1L23.0 23.4L24.0 26.9L24.8 25.6L25.8 31.4L26.6 24.4L27.7 21.2L28.4 29.7L29.4 21.2L30.4 27.5L31.4 31.7L32.4 18.8L33.4 21.1L34.4 26.5L35.1 26.2L36.2 21.5L37.2 26.3L38.2 27.2L39.3 29.8L40.1 28.9L40.9 24.1L42.0 23.5L42.7 27.6L43.5 27.1L44.3 29.8L45.4 27.9L46.1 32.9L46.9 27.1L47.9 27.0L48.9 21.5L50.0 24.1L51.0 30.6L52.0 22.8L52.8 27.0L53.9 31.3L55.0 23.3L55.8 28.7L56.8 26.2L57.6 29.3L58.3 21.0L59.0 30.8L59.8 26.7L60.9 25.1L61.7 25.3L62.5 23.6L63.2 22.4L64.2 29.2L64.9 24.8L65.7 20.8L66.5 29.9L67.2 21.6L68.2 25.8L69.3 28.0L70.0 26.3L70.7 26.3L71.4 26.3L72.5 24.5L73.6 27.9L74.6 24.7L75.4 34.4L76.5 35.0L77.6 21.8L78.3 23.2L79.4 23.3L80.4 21.4L81.2 27.7L82.2 25.1L83.3 14.7L84.3 29.3L85.0 24.8L85.7 30.0L86.8 23.7L87.8 24.2L88.5 25.0L89.3 17.0L90.4 24.6L91.1 13.6L92.1 30.4L92.8 30.5L93.6 16.9L94.3 19.7L95.0 23.6L95.8 23.5L96.9 22.9L98.0 29.0L99.1 24.1L100.2 29.8L101.3 19.0L102.4 36.5L103.5 24.5L104.3 28.8L105.3 29.3L106.3 22.7L107.3 20.3L108.3 28.9L109.1 26.0L109.9 23.2L111.0 30.2L111.8 19.9L112.5 26.6L113.2 27.4L113.9 23.1L114.7 28.9L115.4 22.8L116.4 25.6L117.2 27.4L117.9 27.4L118.9 24.1L119.6 31.5L120.7 24.2L121.7 28.2L122.8 33.2L123.8 27.3L124.5 27.1L125.5 31.4L126.5 29.6L127.5 23.2L128.5 30.4L129.2 32.4L130.0 22.4L130.8 28.2L131.5 21.5L132.6 21.4L133.6 24.0L134.3 27.0L135.4 26.7L136.4 33.4L137.2 26.5L138.2 30.6L138.9 20.4L139.6 27.8L140.3 28.8L141.1 21.4L141.9 23.7L142.7 28.9L143.5 21.4L144.3 27.5L145.4 23.4L146.5 22.9L147.6 31.5L148.6 20.1L149.3 14.8L150.4 27.2L151.5 40.3L152.3 29.0L153.0 21.5L154.1 18.8L155.1 23.8L155.9 30.5L156.6 28.3L157.6 19.8L158.4 25.5L159.1 26.2L159.9 22.5L161.0 24.3L162.1 22.0L163.2 21.1L164.3 26.7L165.3 23.6L166.4 27.6L167.1 26.3L168.2 23.3L169.0 26.0L169.8 27.3L170.6 26.9L171.3 26.7L172.4 22.6L173.1 26.5L173.8 24.9L174.6 25.9L175.7 23.7L176.7 25.8L177.4 26.4L178.5 23.2L179.5 30.2L180.5 25.8L181.2 22.2L181.9 12.2L182.6 23.6L183.6 25.7L184.7 23.7L185.4 28.4L186.5 27.6L187.2 26.8L188.2 20.4L189.3 24.3L190.3 28.0L191.1 24.2L192.2 22.4L193.3 30.1L194.0 34.6L194.7 29.4L195.4 29.9L196.4 21.3L197.1 28.2L197.8 26.8L198.8 26.4L199.6 26.3L200.4 27.0L201.1 24.8L201.9 26.2L202.9 29.3L203.7 13.0L204.4 26.3L205.4 28.4L206.1 27.2L207.1 21.9L208.1 28.0L209.2 26.3L210.3 23.6L211.0 24.4L212.0 27.1L212.7 23.9L213.4 24.2L214.5 23.4L215.3 26.4L216.4 28.9L217.2 23.9L218.3 20.4L219.0 26.0L219.7 26.0L220.7 26.7L221.4 24.9L222.4 24.8L223.1 22.7L224.1 29.6L225.2 16.6L226.2 28.4L227.2 28.5L228.3 24.4L229.1 21.8L230.2 30.0L231.2 26.4L231.9 15.0L232.7 25.7L233.8 25.4L234.8 26.3L235.5 25.4L236.5 27.6L237.6 22.0L238.4 23.8L239.4 28.5L240.2 30.2L241.0 22.7L242.1 19.9L243.1 19.1L243.8 30.7L244.9 21.6L245.7 17.5L246.7 26.6L247.7 26.6L248.5 22.4L249.3 22.4L250.4 25.1L251.4 29.3L252.5 32.7L253.2 23.0L254.3 28.1L255.3 26.7L256.3 18.4L257.3 24.3L258.1 28.2L259.2 26.7L260.0 25.3L260.7 25.2L261.4 19.8L262.1 17.7L263.1 29.1L263.8 27.1L264.6 28.6L265.4 24.3L266.1 22.4L266.8 27.3L267.6 29.3L268.3 23.8L269.0 25.2L269.8 20.7L270.9 25.3L271.6 25.8L272.4 25.4L273.2 29.0L273.9 27.0L274.9 20.7L276.0 26.3L277.1 23.0L278.2 24.9L279.0 25.6L279.8 23.0L280.6 15.5L281.4 24.1L282.1 28.0L283.1 23.9L283.9 23.9L284.9 28.7L285.9 29.2L286.9 21.2L287.6 23.8L288.4 24.2L289.4 22.2L290.2 26.5L291.3 26.5L292.3 33.0L293.0 24.1L293.7 27.1L294.8 24.8L295.8 22.7L296.8 35.9L297.6 14.5L298.4 27.0L299.2 32.3L300.2 28.2L301.3 20.5L302.0 18.6L302.8 25.1L303.8 24.1L304.5 25.0L305.5 22.9L306.6 27.8L307.7 26.7L308.7 29.6L309.4 22.3L310.1 21.7L311.1 25.9L312.2 25.7L312.9 26.7L313.7 23.1L314.5 11.4L315.3 19.4L316.0 27.9L317.1 30.5L318.2 23.6L319.2 22.4L320.0 23.0L321.0 24.1L321.8 21.0L322.6 27.1L323.4 26.1L324.5 26.8L325.5 25.8L326.6 26.3L327.3 25.7L328.3 28.4L329.3 32.9L330.1 28.0L331.2 26.3L332.0 27.1L333.0 24.1L334.1 24.3L335.2 22.1L335.9 31.0L336.7 24.8L337.5 31.9L338.6 19.9L339.4 41.0L340.2 24.3L341.2 24.8L342.0 27.6L343.0 23.0L343.8 22.2L344.8 22.2L345.8 16.8L346.8 23.2L347.9 23.4L349.0 21.1L349.8 25.5L350.9 30.1L351.9 23.0L352.7 24.6L353.8 26.5L354.5 28.4L355.6 25.0L356.3 14.1L357.3 24.6L358.3 26.2L359.3 30.9L360.4 30.4L361.4 27.4" stroke="#fff" stroke-width="1.1" fill="none"/><path d="M0.0 48.1L0.7 51.1L1.8 51.4L2.5 49.9L3.3 49.7L4.1 47.8L4.8 52.9L5.5 52.5L6.6 51.8L7.4 45.2L8.5 53.9L9.6 47.6L10.3 52.2L11.0 55.7L12.1 51.7L12.8 52.0L13.5 53.0L14.3 52.9L15.0 54.4L16.1 54.8L16.9 48.2L17.6 51.8L18.4 52.2L19.1 53.6L19.9 50.4L20.6 46.3L21.7 52.3L22.4 49.9L23.1 51.3L24.1 49.6L25.2 52.5L26.3 56.5L27.3 51.8L28.3 50.5L29.0 49.8L29.7 59.7L30.5 49.6L31.2 50.1L32.3 44.0L33.1 50.1L33.9 42.3L34.7 45.5L35.5 51.4L36.6 50.6L37.3 52.9L38.3 50.0L39.0 57.5L40.1 48.3L40.9 49.4L42.0 48.7L42.7 50.3L43.4 51.8L44.2 51.6L45.3 56.7L46.3 51.8L47.0 49.1L48.0 52.2L48.7 51.2L49.8 55.6L50.5 52.5L51.6 51.1L52.7 55.3L53.4 56.6L54.1 42.2L54.9 51.1L56.0 44.2L57.0 56.9L58.1 50.8L58.9 52.4L59.7 52.0L60.5 44.4L61.2 51.0L62.0 48.0L63.0 53.2L63.8 52.5L64.5 50.7L65.6 52.3L66.4 51.2L67.4 51.0L68.4 51.0L69.5 55.3L70.2 54.5L71.2 48.1L72.3 50.6L73.0 50.0L74.1 53.4L74.9 57.4L75.7 51.3L76.7 49.7L77.7 49.3L78.8 51.3L79.5 53.7L80.6 45.4L81.3 51.5L82.0 40.9L83.0 47.1L83.7 45.9L84.8 50.2L85.6 48.1L86.4 50.4L87.5 46.2L88.3 48.6L89.0 48.6L90.1 55.6L90.8 50.3L91.6 51.9L92.4 50.5L93.4 48.1L94.1 47.7L94.8 49.0L95.8 51.3L96.6 53.7L97.7 61.0L98.4 50.7L99.5 52.6L100.3 48.7L101.1 51.6L101.9 50.3L102.7 50.5L103.7 50.1L104.5 54.6L105.3 51.2L106.3 50.2L107.0 44.8L107.7 48.5L108.5 55.1L109.6 53.1L110.4 46.7L111.1 53.0L112.2 49.9L112.9 47.5L113.9 50.3L114.9 41.5L116.0 48.4L116.7 50.6L117.4 50.9L118.4 50.7L119.4 52.1L120.4 47.9L121.1 62.7L121.9 59.0L123.0 58.5L123.7 59.7L124.5 51.8L125.6 55.0L126.6 60.4L127.7 64.4L128.8 59.1L129.9 58.5L130.6 62.9L131.4 55.5L132.5 58.9L133.3 58.8L134.3 58.1L135.0 57.3L135.8 58.6L136.9 58.0L137.6 58.2L138.3 58.8L139.3 61.1L140.1 58.7L141.1 57.5L142.2 59.0L143.3 56.6L144.3 60.8L145.0 57.3L146.1 58.2L147.1 62.8L147.9 60.8L149.0 57.6L149.7 57.0L150.7 55.1L151.5 57.0L152.6 62.8L153.6 57.1L154.6 59.3L155.6 57.3L156.6 58.8L157.6 57.6L158.7 65.0L159.7 53.0L160.4 55.3L161.1 61.1L161.8 60.0L162.8 58.4L163.5 55.1L164.2 61.7L165.2 61.5L166.0 56.1L167.1 51.2L167.9 54.5L168.7 60.2L169.4 57.7L170.2 65.7L171.3 60.0L172.4 60.3L173.4 59.6L174.4 59.8L175.1 58.1L176.1 58.1L177.2 60.7L178.2 57.0L178.9 57.6L180.0 59.8L180.7 61.4L181.4 58.7L182.2 55.3L183.3 55.8L184.3 55.6L185.3 50.7L186.3 71.9L187.0 58.4L188.1 61.2L189.1 55.1L190.1 59.4L190.9 61.9L191.7 66.3L192.4 58.4L193.2 56.6L193.9 63.1L194.7 50.6L195.4 55.5L196.2 57.5L196.9 54.5L197.9 66.4L198.7 56.3L199.4 64.2L200.2 50.2L201.2 60.1L202.3 60.2L203.3 65.9L204.1 63.0L205.1 61.3L206.2 66.1L206.9 61.9L207.6 68.3L208.4 69.4L209.4 76.0L210.2 75.2L211.3 67.4L212.3 69.6L213.0 72.6L213.7 72.6L214.7 70.0L215.4 73.4L216.5 72.8L217.2 81.2L218.3 65.5L219.0 75.8L220.0 78.2L221.1 87.4L222.1 77.6L222.8 75.8L223.8 76.6L224.9 83.8L226.0 83.3L227.1 83.3L227.9 84.3L228.9 87.3L229.9 85.5L230.6 88.2L231.6 87.9L232.4 86.6L233.4 92.0L234.2 96.8L235.0 89.0L235.8 84.6L236.8 87.1L237.6 89.1L238.3 92.4L239.1 83.7L240.2 86.1L240.9 92.6L242.0 84.0L243.0 84.6L243.7 83.0L244.4 79.5L245.1 79.0L246.2 75.3L246.9 70.5L248.0 72.3L248.7 74.1L249.4 60.6L250.4 58.7L251.2 69.5L252.0 63.8L253.0 63.1L253.7 58.2L254.5 60.9L255.2 62.3L256.3 57.4L257.0 58.7L257.7 58.8L258.5 55.5L259.2 57.7L260.3 56.7L261.0 61.7L261.7 60.1L262.5 57.4L263.3 56.3L264.0 56.8L265.1 58.3L266.1 56.8L267.1 55.2L267.9 54.1L268.7 58.9L269.7 53.7L270.7 54.0L271.5 55.7L272.2 54.1L273.0 47.4L274.1 51.2L274.8 54.9L275.6 41.8L276.7 50.8L277.8 55.2L278.8 51.0L279.6 50.4L280.7 53.9L281.8 40.7L282.6 59.2L283.4 54.6L284.4 56.9L285.5 53.3L286.3 55.1L287.1 51.3L287.8 52.1L288.5 48.5L289.6 57.5L290.4 54.4L291.1 52.4L291.8 57.1L292.8 54.6L293.9 53.3L295.0 54.3L296.1 55.5L297.1 51.2L298.1 54.3L299.2 56.5L300.2 52.9L301.3 56.2L302.1 49.8L303.1 55.3L304.1 54.6L304.8 53.0L305.5 54.2L306.2 49.1L307.3 54.8L308.1 54.4L309.2 54.4L310.3 52.5L311.3 52.1L312.4 55.2L313.5 50.8L314.2 50.9L315.0 59.8L315.8 49.2L316.8 60.4L317.9 51.0L318.9 51.4L319.7 53.4L320.8 51.7L321.9 55.7L322.9 50.6L323.6 56.9L324.6 50.4L325.7 59.7L326.5 58.2L327.6 50.9L328.7 48.0L329.7 52.0L330.5 60.8L331.2 44.1L331.9 55.4L333.0 52.0L333.8 57.1L334.9 51.2L335.9 50.6L336.6 50.2L337.7 48.9L338.8 52.9L339.6 58.7L340.7 48.7L341.4 52.7L342.2 51.4L342.9 55.1L344.0 39.7L345.0 52.6L345.8 55.3L346.5 52.7L347.2 50.0L348.0 53.8L349.0 56.3L349.7 53.6L350.5 51.7L351.6 49.6L352.4 51.7L353.5 43.0L354.6 53.0L355.6 52.1L356.6 51.0L357.6 50.8L358.7 52.6L359.8 52.3L360.6 49.0L361.4 50.2" stroke="#f04848" stroke-width="1.1" fill="none"/></svg>
<div style="top:19.50px;font-size:12px;line-height:15px;color:#000;white-space:nowrap;letter-spacing:-0.091px;right:571.5px;text-align:right;">0.04</div>
<div style="left:1419px;top:26px;width:5px;height:1px;background:#000;"></div>
<div style="top:44.67px;font-size:12px;line-height:15px;color:#000;white-space:nowrap;letter-spacing:-0.091px;right:571.5px;text-align:right;">0.02</div>
<div style="left:1419px;top:52px;width:5px;height:1px;background:#000;"></div>
<div style="top:69.84px;font-size:12px;line-height:15px;color:#000;white-space:nowrap;right:571.5px;text-align:right;">0</div>
<div style="left:1419px;top:77px;width:5px;height:1px;background:#000;"></div>
<div style="top:95.01px;font-size:12px;line-height:15px;color:#000;white-space:nowrap;letter-spacing:0.028px;right:571.5px;text-align:right;">-0.02</div>
<div style="left:1419px;top:102px;width:5px;height:1px;background:#000;"></div>
<div style="top:120.18px;font-size:12px;line-height:15px;color:#000;white-space:nowrap;letter-spacing:0.028px;right:571.5px;text-align:right;">-0.04</div>
<div style="left:1419px;top:127px;width:5px;height:1px;background:#000;"></div>
<div style="top:145.35px;font-size:12px;line-height:15px;color:#000;white-space:nowrap;letter-spacing:0.028px;right:571.5px;text-align:right;">-0.06</div>
<div style="left:1419px;top:152px;width:5px;height:1px;background:#000;"></div>
<div style="top:170.52px;font-size:12px;line-height:15px;color:#000;white-space:nowrap;letter-spacing:0.028px;right:571.5px;text-align:right;">-0.08</div>
<div style="left:1419px;top:178px;width:5px;height:1px;background:#000;"></div>
<div style="top:195.69px;font-size:12px;line-height:15px;color:#000;white-space:nowrap;letter-spacing:-0.171px;right:571.5px;text-align:right;">-0.1</div>
<div style="left:1419px;top:203px;width:5px;height:1px;background:#000;"></div>
<div style="left:1426px;top:205px;width:1px;height:5px;background:#000;"></div>
<div style="top:210.50px;font-size:12px;line-height:15px;color:#000;white-space:nowrap;left:1126.5px;width:600px;text-align:center;">0</div>
<div style="left:1499px;top:205px;width:1px;height:5px;background:#000;"></div>
<div style="top:210.50px;font-size:12px;line-height:15px;color:#000;white-space:nowrap;letter-spacing:-0.713px;left:1198.8px;width:600px;text-align:center;">1E-5</div>
<div style="left:1571px;top:205px;width:1px;height:5px;background:#000;"></div>
<div style="top:210.50px;font-size:12px;line-height:15px;color:#000;white-space:nowrap;letter-spacing:-0.713px;left:1271.1px;width:600px;text-align:center;">2E-5</div>
<div style="left:1643px;top:205px;width:1px;height:5px;background:#000;"></div>
<div style="top:210.50px;font-size:12px;line-height:15px;color:#000;white-space:nowrap;letter-spacing:-0.713px;left:1343.4px;width:600px;text-align:center;">3E-5</div>
<div style="left:1716px;top:205px;width:1px;height:5px;background:#000;"></div>
<div style="top:210.50px;font-size:12px;line-height:15px;color:#000;white-space:nowrap;letter-spacing:-0.713px;left:1415.7px;width:600px;text-align:center;">4E-5</div>
<div style="left:1788px;top:205px;width:1px;height:5px;background:#000;"></div>
<div style="top:210.50px;font-size:12px;line-height:15px;color:#000;white-space:nowrap;letter-spacing:-0.713px;left:1488.0px;width:600px;text-align:center;">5E-5</div>
<div style="top:227.50px;font-size:12px;line-height:15px;color:#000;white-space:nowrap;letter-spacing:-0.194px;left:1305.5px;width:600px;text-align:center;">Time (s)</div>
<div style="left:1180.5px;top:107.00px;width:400px;text-align:center;font-size:12px;line-height:15px;color:#000;white-space:nowrap;transform:rotate(-90deg);transform-origin:50% 50%;letter-spacing:0.330px;">Amplitude (V)</div>
<div style="left:1824px;top:0px;width:17px;height:251px;background:#f0f0f0;"></div>
<div style="left:1824px;top:0px;width:17px;height:106px;background:#cdcdcd;"></div>
<svg style="left:1824.5px;top:234px;" width="16" height="17" viewBox="0 0 16 17" ><path d="M4 6L8 10L12 6" stroke="#404040" stroke-width="2" fill="none"/></svg>
<div style="left:1308px;top:251px;width:533px;height:17px;background:#f0f0f0;"></div>
<div style="left:1840px;top:0px;width:1px;height:268px;background:#b4b4b4;"></div>
<div style="left:1308px;top:267px;width:533px;height:1px;background:#b4b4b4;"></div>
<div style="left:1333px;top:251px;width:441px;height:17px;background:#cdcdcd;"></div>
<svg style="left:1308px;top:251px;" width="17" height="17" viewBox="0 0 17 17" ><path d="M10 4.5L6 8.5L10 12.5" stroke="#404040" stroke-width="2" fill="none"/></svg>
<svg style="left:1807px;top:251px;" width="17" height="17" viewBox="0 0 17 17" ><path d="M6 4.5L10 8.5L6 12.5" stroke="#404040" stroke-width="2" fill="none"/></svg>
<svg style="left:1824px;top:251px;" width="16" height="17" viewBox="0 0 16 17" ><path d="M12 4v2M9 7v2M12 7v2M6 10v2M9 10v2M12 10v2" stroke="#b0b0b0" stroke-width="2" stroke-dasharray="2 1"/></svg></div>
<div style="left:1610px;top:468px;width:332px;height:329px;box-shadow:0 1px 9px rgba(0,0,0,.5);"></div>
<!-- partD -->
<div class="win" style="clip-path:inset(463px 42px 386px 1604px)"><div style="left:1610px;top:468px;width:332px;height:329px;background:#fff;box-shadow:0 0 5px rgba(0,0,0,.5);"></div>
<div style="top:476.50px;font-size:12px;line-height:15px;color:#999;white-space:nowrap;letter-spacing:-0.203px;left:1641.5px;">DAQwrap.vi</div>
<div style="left:1823px;top:484px;width:11px;height:1px;background:#8a8a8a;"></div>
<div style="left:1868px;top:479px;width:10px;height:10px;border:1px solid #8a8a8a;box-sizing:border-box;"></div>
<svg style="left:1913px;top:478px;" width="12" height="12" viewBox="0 0 12 12" ><path d="M0.500 0.500L11.500 11.500M11.500 0.500L0.500 11.500" stroke="#8a8a8a" stroke-width="1"/></svg>
<div style="left:1610px;top:500px;width:332px;height:46px;background:#f0f0f0;"></div>
<div style="left:1610px;top:520px;width:298px;height:1px;background:#a0a0a0;"></div>
<div style="left:1610px;top:545px;width:332px;height:1px;background:#808080;"></div>
<div style="left:1907px;top:500px;width:1px;height:46px;background:#8a8a8a;"></div>
<div style="top:502.00px;font-size:12px;line-height:15px;color:#000;white-space:nowrap;letter-spacing:-0.336px;left:1617px;">File</div>
<div style="top:502.00px;font-size:12px;line-height:15px;color:#000;white-space:nowrap;letter-spacing:-0.171px;left:1649px;">Edit</div>
<div style="top:502.00px;font-size:12px;line-height:15px;color:#000;white-space:nowrap;letter-spacing:-0.196px;left:1683.5px;">Operate</div>
<div style="top:502.00px;font-size:12px;line-height:15px;color:#000;white-space:nowrap;letter-spacing:-0.005px;left:1739px;">Tools</div>
<div style="top:502.00px;font-size:12px;line-height:15px;color:#000;white-space:nowrap;letter-spacing:0.385px;left:1781px;">Window</div>
<div style="top:502.00px;font-size:12px;line-height:15px;color:#000;white-space:nowrap;letter-spacing:0.078px;left:1839px;">Help</div>
<svg style="left:1663.5px;top:524.5px;" width="18" height="18" viewBox="0 0 18 18" ><g transform="translate(9 9)"><path d="M-3 -3h3.500v-3.600l7 6.600l-7 6.600v-3.600h-3.500z" fill="#000"/><path d="M-7 -2.500v5M-5.200 -2.500v5" stroke="#000" stroke-width="1.100"/><path d="M-3.200 -6v2.400M-1.400 -6v2.400M-3.200 3.600v2.400M-1.400 3.600v2.400" stroke="#000" stroke-width="1"/></g></svg>
<svg style="left:1709.5px;top:524.5px;" width="18" height="18" viewBox="0 0 18 18" ><g transform="translate(9 9)"><path d="M-3.200 -7.500h6.400l4.300 4.300v6.400l-4.300 4.300h-6.400l-4.300-4.300v-6.400z" fill="#fff" stroke="#000" stroke-width="1.300"/><path d="M-2.400 -5.200h4.800l2.800 2.800v4.800l-2.800 2.800h-4.800l-2.800-2.800v-4.800z" fill="#b43030"/><path d="M-2.200 -4.600h4.400l2.200 2.200v1.400h-8.800v-1.400z" fill="#c85454"/></g></svg>
<div style="left:1909px;top:506px;width:32px;height:32px;background:#fff;border:1px solid #000;box-sizing:border-box;"></div>
<svg style="left:1910px;top:507px;" width="30" height="30" viewBox="0 0 30 30" ><rect x="2" y="2" width="19" height="16" fill="#000"/><rect x="3" y="3.200" width="17" height="13.600" fill="#d4d4a0"/><rect x="4" y="4" width="11.500" height="8.500" fill="#000" stroke="#777" stroke-width="0.600"/><path d="M4.500 9.500q1.400-5 2.800 0t2.800 0t2.800 0t1.600-2" stroke="#18c818" stroke-width="1.300" fill="none"/><ellipse cx="17.700" cy="9" rx="1.200" ry="1.700" fill="#f4c8a0" stroke="#555" stroke-width="0.700"/><path d="M17 4v2.500M18.700 4v2.500" stroke="#666" stroke-width="0.700"/><path d="M4.200 15q0.500 5.500 5 7h3.500q2.500-1 3-3h4" stroke="#1010a0" stroke-width="1.100" fill="none"/><path d="M19 14.500h-3q-2.500 0.500-4 3.500t-2.500 1.500t0.500-4.500" stroke="#f01010" stroke-width="1.100" fill="none"/><path d="M18.200 13.200L26.200 17.600L18.200 22Z" fill="#f4f000" stroke="#7a7000" stroke-width="0.700"/><path d="M19.800 17.600h3M21.300 16.100v3" stroke="#000" stroke-width="1.300"/><path d="M26.500 17.600h3" stroke="#f01010" stroke-width="1.100"/></svg>
<div style="top:527.50px;font-size:7px;line-height:9px;color:#000;white-space:nowrap;font-weight:bold;left:1626px;width:600px;text-align:center;letter-spacing:0.8px;">DAQ</div>
<div style="left:1610px;top:546px;width:315px;height:250px;background:#e4e4e4;"></div>
<div style="left:1925px;top:546px;width:17px;height:250px;background:#f0f0f0;"></div>
<div style="left:1926px;top:567px;width:15px;height:223px;background:#cdcdcd;"></div>
<svg style="left:1925px;top:548px;" width="17" height="14" viewBox="0 0 17 14" ><path d="M4.500 9.500L8.500 5.500L12.500 9.500" stroke="#404040" stroke-width="2" fill="none"/></svg>
<div style="left:1834px;top:549px;width:75px;height:32px;background:#b9b9b9;box-sizing:border-box;border:1px solid #3a3a3a;box-shadow:inset 2px 2px 1px #e2e2e2, inset -2px -3px 2px #747474;background:linear-gradient(90deg,#b9b9b9,#b9b9b9 25%,#b9b9b9);"></div>
<div style="top:558.50px;font-size:12px;line-height:15px;color:#f00000;white-space:nowrap;letter-spacing:-1.115px;left:1571.5px;width:600px;text-align:center;">STOP</div>
<div style="left:1618px;top:559px;width:72px;height:24px;background:#b0b0b0;border-radius:3px 3px 0 0;border:1px solid;border-color:#d8d8d8 #8a8a8a #8a8a8a #d8d8d8;box-sizing:border-box;box-shadow:inset 2px 2px 0 #c6c6c6;"></div>
<div style="top:563.50px;font-size:12px;line-height:15px;color:#000;white-space:nowrap;letter-spacing:-0.116px;left:1628px;">Constants</div>
<div style="left:1616px;top:581px;width:299px;height:206px;background:#b4b4b4;box-sizing:border-box;border:3px solid;border-color:#cacaca #7e7e7e #7e7e7e #cacaca;"></div>
<div style="left:1691px;top:556px;width:49px;height:28px;background:#b4b4b4;border-radius:3px 3px 0 0;border:3px solid;border-color:#cacaca #7e7e7e transparent #cacaca;border-bottom:none;box-sizing:border-box;"></div>
<div style="top:561.00px;font-size:12px;line-height:15px;color:#000;white-space:nowrap;letter-spacing:0.246px;left:1699px;">Main</div>
<div style="top:596.00px;font-size:12px;line-height:15px;color:#000;white-space:nowrap;letter-spacing:-0.058px;left:1634px;">Foil Cluster</div>
<div style="left:1633px;top:613px;width:101px;height:100px;background:#b4b4b4;box-sizing:border-box;border:4px solid;border-color:#8a8a8a #c8c8c8 #c8c8c8 #8a8a8a;"></div>
<div style="left:1639px;top:625px;width:72px;height:24px;background:#fafafa;box-sizing:border-box;border:1px solid #2a2a2a;box-shadow:inset -2px -2px 1px #9a9a9a, inset 1px 1px 0 #fff;"></div>
<div style="top:631.00px;font-size:12px;line-height:15px;color:#000;white-space:nowrap;left:1374.5px;width:600px;text-align:center;">e-</div>
<div style="top:658.00px;font-size:12px;line-height:15px;color:#000;white-space:nowrap;letter-spacing:0.046px;left:1644.5px;">burn time (ms)</div>
<div style="left:1644px;top:674px;width:53px;height:23px;background:#fff;box-sizing:border-box;border:3px solid;border-color:#8a8a8a #d0d0d0 #d0d0d0 #8a8a8a;"></div>
<div style="top:679.00px;font-size:12px;line-height:15px;color:#000;white-space:nowrap;letter-spacing:-0.426px;left:1649.5px;">2500</div>
<div style="top:716.50px;font-size:12px;line-height:15px;color:#000;white-space:nowrap;letter-spacing:-0.224px;left:1634px;">Track Cluster</div>
<div style="left:1633px;top:734px;width:101px;height:47px;background:#b4b4b4;box-sizing:border-box;border:4px solid;border-color:#8a8a8a #c8c8c8 #c8c8c8 #8a8a8a;"></div>
<div style="top:739.50px;font-size:12px;line-height:15px;color:#000;white-space:nowrap;letter-spacing:0.023px;left:1646px;">Duration (ms)</div>
<div style="left:1645px;top:757px;width:52px;height:21px;background:#fff;box-sizing:border-box;border:3px solid;border-color:#8a8a8a #d0d0d0 #d0d0d0 #8a8a8a;"></div>
<div style="top:761.00px;font-size:12px;line-height:15px;color:#000;white-space:nowrap;letter-spacing:-0.509px;left:1651px;">239000</div>
<div style="top:597.00px;font-size:12px;line-height:15px;color:#000;white-space:nowrap;letter-spacing:0.071px;left:1742px;">error out</div>
<div style="left:1740px;top:613px;width:162px;height:161px;background:#b4b4b4;box-sizing:border-box;border:4px solid;border-color:#8a8a8a #c8c8c8 #c8c8c8 #8a8a8a;"></div>
<div style="top:620.50px;font-size:12px;line-height:15px;color:#000;white-space:nowrap;letter-spacing:-0.171px;left:1746px;">status</div>
<div style="top:619.50px;font-size:12px;line-height:15px;color:#000;white-space:nowrap;letter-spacing:-0.257px;left:1793.5px;">code</div>
<div style="left:1753px;top:637px;width:19px;height:19px;background:#c4c4c4;box-sizing:border-box;border:2px solid;border-color:#e8e8e8 #707070 #707070 #e8e8e8;"></div>
<svg style="left:1755px;top:639px;" width="15" height="15" viewBox="0 0 15 15" ><path d="M2.500 8.500l2.500 4.500l7-10.500" stroke="#006000" stroke-width="3.400" fill="none"/><path d="M2.500 8.500l2.500 4.500l7-10.500" stroke="#20e020" stroke-width="1.800" fill="none"/></svg>
<div style="left:1792px;top:636px;width:57px;height:23px;background:#fff;box-sizing:border-box;border:3px solid;border-color:#8a8a8a #d0d0d0 #d0d0d0 #8a8a8a;"></div>
<div style="left:1795px;top:639px;width:6px;height:17px;background:#b0b0b0;"></div>
<div style="top:641.00px;font-size:11px;line-height:14px;color:#d8d8d8;white-space:nowrap;left:1796px;">d</div>
<div style="top:641.00px;font-size:12px;line-height:15px;color:#000;white-space:nowrap;left:1803px;">0</div>
<div style="top:664.50px;font-size:12px;line-height:15px;color:#000;white-space:nowrap;letter-spacing:-0.504px;left:1748.5px;">source</div>
<div style="left:1747px;top:681px;width:150px;height:89px;background:#fff;box-sizing:border-box;border:3px solid;border-color:#8a8a8a #d0d0d0 #d0d0d0 #8a8a8a;"></div>
<div style="left:1878px;top:684px;width:16px;height:83px;background:#f0f0f0;"></div>
<svg style="left:1878px;top:687px;" width="16" height="14" viewBox="0 0 16 14" ><path d="M4.500 9.500L8 6L11.500 9.500" stroke="#404040" stroke-width="1.800" fill="none"/></svg>
<svg style="left:1878px;top:751px;" width="16" height="14" viewBox="0 0 16 14" ><path d="M4.500 5L8 8.500L11.500 5" stroke="#404040" stroke-width="1.800" fill="none"/></svg>
<div style="left:1664px;top:795px;width:222px;height:2px;border-top:2px dotted #555;opacity:.75;"></div>
<div style="left:1680px;top:795px;width:12px;height:2px;background:#e4e4e4;"></div>
<div style="left:1722px;top:795px;width:9px;height:2px;background:#e4e4e4;"></div>
<div style="left:1760px;top:795px;width:14px;height:2px;background:#e4e4e4;"></div>
<div style="left:1800px;top:795px;width:22px;height:2px;background:#e4e4e4;"></div>
<div style="left:1850px;top:795px;width:10px;height:2px;background:#e4e4e4;"></div></div>
<div style="left:1339px;top:797px;width:650px;height:387px;box-shadow:0 1px 9px rgba(0,0,0,.5);"></div>
<!-- partC -->
<div class="win" style="clip-path:inset(797px 0px 0px 1338px)"><div style="left:1339px;top:797px;width:650px;height:387px;background:#fff;"></div>
<svg style="left:1347px;top:803px;" width="17" height="16" viewBox="0 0 17 16" ><rect x="1" y="1" width="9" height="8" fill="#2a50c8" stroke="#102060" stroke-width="1"/><rect x="5" y="4.500" width="8" height="7" fill="#5a8ae8" stroke="#183080" stroke-width="1"/><path d="M7 13.500h5" stroke="#444" stroke-width="1.500"/><circle cx="12" cy="12" r="3.600" fill="#e8f4e8" stroke="#2a8a2a" stroke-width="1"/><path d="M10.300 12h3.400M12.500 10.800l1.200 1.200l-1.200 1.200" stroke="#1a7a1a" stroke-width="0.900" fill="none"/></svg>
<div style="top:805.00px;font-size:12px;line-height:15px;color:#8a8a8a;white-space:nowrap;letter-spacing:-0.042px;left:1368.5px;">pcad3-cuspdaq - Remote Desktop Connection</div>
<div style="left:1964px;top:811px;width:10px;height:1px;background:#8a8a8a;"></div>
<div style="left:1339px;top:827px;width:650px;height:2px;background:#1a1a1a;"></div>
<div style="left:1338px;top:797px;width:2px;height:387px;background:#1a1a1a;"></div>
<div style="top:838.00px;font-size:12px;line-height:15px;color:#000;white-space:nowrap;letter-spacing:-0.067px;left:1371px;">Executor_Compiling.vi</div>
<div style="left:1885px;top:845px;width:10px;height:1px;background:#000;"></div>
<div style="left:1930px;top:839px;width:10px;height:10px;border:1px solid #000;box-sizing:border-box;"></div>
<svg style="left:1975px;top:839px;" width="12" height="12" viewBox="0 0 12 12" ><path d="M0.500 0.500L10.500 10.500M10.500 0.500L0.500 10.500" stroke="#000" stroke-width="1.100"/></svg>
<div style="left:1340px;top:861px;width:649px;height:46px;background:#f0f0f0;"></div>
<div style="left:1340px;top:881px;width:630px;height:1px;background:#a0a0a0;"></div>
<div style="left:1340px;top:906px;width:649px;height:1px;background:#707070;"></div>
<div style="left:1969px;top:861px;width:1px;height:46px;background:#8a8a8a;"></div>
<div style="top:863.00px;font-size:12px;line-height:15px;color:#000;white-space:nowrap;letter-spacing:-0.336px;left:1347.5px;">File</div>
<div style="top:863.00px;font-size:12px;line-height:15px;color:#000;white-space:nowrap;letter-spacing:-0.171px;left:1379.5px;">Edit</div>
<div style="top:863.00px;font-size:12px;line-height:15px;color:#000;white-space:nowrap;letter-spacing:-0.196px;left:1413px;">Operate</div>
<div style="top:863.00px;font-size:12px;line-height:15px;color:#000;white-space:nowrap;letter-spacing:0.195px;left:1469px;">Tools</div>
<div style="top:863.00px;font-size:12px;line-height:15px;color:#000;white-space:nowrap;letter-spacing:0.218px;left:1512px;">Window</div>
<div style="top:863.00px;font-size:12px;line-height:15px;color:#000;white-space:nowrap;letter-spacing:0.078px;left:1570px;">Help</div>
<svg style="left:1392.5px;top:885.5px;" width="18" height="18" viewBox="0 0 18 18" ><g transform="translate(9 9)"><path d="M-3 -3h3.500v-3.600l7 6.600l-7 6.600v-3.600h-3.500z" fill="#000"/><path d="M-7 -2.500v5M-5.200 -2.500v5" stroke="#000" stroke-width="1.100"/><path d="M-3.200 -6v2.400M-1.400 -6v2.400M-3.200 3.600v2.400M-1.400 3.600v2.400" stroke="#000" stroke-width="1"/></g></svg>
<svg style="left:1413px;top:885.5px;" width="20" height="18" viewBox="0 0 20 18" ><g transform="translate(10 9) scale(0.84 0.9)"><path d="M-6.500 -1.500l3.500-4h1.500v-1.500h4.500q3.500 0 3.500 3.500v1h2l-3.500 4l-3.500-4h2v-0.500q0-1-1-1h-4v1.500z" fill="#fff" stroke="#000" stroke-width="1.100" transform="translate(1.500 0.500)"/><path d="M6.500 1.500l-3.500 4h-1.500v1.500h-4.500q-3.500 0-3.500-3.500v-1h-2l3.500-4l3.500 4h-2v0.500q0 1 1 1h4v-1.500z" fill="#fff" stroke="#000" stroke-width="1.100" transform="translate(-1.500 -0.500)"/></g></svg>
<svg style="left:1439.5px;top:885px;" width="18" height="18" viewBox="0 0 18 18" ><g transform="translate(9 9)"><path d="M-3.200 -7.500h6.400l4.300 4.300v6.400l-4.300 4.300h-6.400l-4.300-4.300v-6.400z" fill="#fff" stroke="#000" stroke-width="1.300"/><path d="M-2.400 -5.200h4.800l2.800 2.800v4.800l-2.800 2.800h-4.800l-2.800-2.800v-4.800z" fill="#b43030"/><path d="M-2.200 -4.600h4.400l2.200 2.200v1.400h-8.800v-1.400z" fill="#c85454"/></g></svg>
<div style="left:1971px;top:867px;width:20px;height:32px;background:#fff;border:1.500px solid #000;box-sizing:border-box;"></div>
<div style="left:1971px;top:882px;width:20px;height:1px;background:#000;"></div>
<div style="left:1340px;top:907px;width:649px;height:259px;background:#e4e4e4;"></div>
<div style="left:1394px;top:919.5px;width:86.5px;height:23px;background:#b8a0ff;border-radius:3px 3px 0 0;box-sizing:border-box;border-top:2px solid #cdbcff;border-left:2px solid #cbb8ff;border-right:2px solid #927cd4;border-bottom:2px solid #a48ee8;"></div>
<div style="top:924.00px;font-size:12px;line-height:15px;color:#000;white-space:nowrap;letter-spacing:-0.295px;left:1401.5px;">Variable Scan</div>
<div style="left:1483px;top:919.5px;width:76px;height:23px;background:#b8a0ff;border-radius:3px 3px 0 0;box-sizing:border-box;border-top:2px solid #cdbcff;border-left:2px solid #cbb8ff;border-right:2px solid #927cd4;border-bottom:2px solid #a48ee8;"></div>
<div style="top:924.00px;font-size:12px;line-height:15px;color:#000;white-space:nowrap;letter-spacing:0.056px;left:1492px;">Calibration</div>
<div style="left:1560.5px;top:919.5px;width:56.5px;height:23px;background:#b8a0ff;border-radius:3px 3px 0 0;box-sizing:border-box;border-top:2px solid #cdbcff;border-left:2px solid #cbb8ff;border-right:2px solid #927cd4;border-bottom:2px solid #a48ee8;"></div>
<div style="top:924.00px;font-size:12px;line-height:15px;color:#000;white-space:nowrap;letter-spacing:0.238px;left:1570.5px;">Timing</div>
<div style="left:1619px;top:919.5px;width:102.5px;height:23px;background:#b8a0ff;border-radius:3px 3px 0 0;box-sizing:border-box;border-top:2px solid #cdbcff;border-left:2px solid #cbb8ff;border-right:2px solid #927cd4;border-bottom:2px solid #a48ee8;"></div>
<div style="top:924.00px;font-size:12px;line-height:15px;color:#000;white-space:nowrap;letter-spacing:-0.240px;left:1628px;">Stored Variables</div>
<div style="left:1343px;top:942px;width:646px;height:224px;background:#b8a0ff;border-top:2px solid #d6c8ff;border-left:2px solid #d6c8ff;box-sizing:border-box;"></div>
<div style="left:1344px;top:917px;width:50px;height:28px;background:#b8a0ff;border-radius:3px 3px 0 0;border:2px solid;border-color:#d6c8ff #8a76c8 transparent #d6c8ff;border-bottom:none;box-sizing:border-box;"></div>
<div style="top:922.00px;font-size:12px;line-height:15px;color:#000;white-space:nowrap;letter-spacing:0.371px;left:1352.5px;">Main</div>
<div style="left:1812px;top:921px;width:83px;height:20px;background:#c4c4c4;box-sizing:border-box;border:1px solid;border-color:#e8e8e8 #6a6a6a #6a6a6a #e8e8e8;"></div>
<div style="top:924.00px;font-size:12px;line-height:15px;color:#000;white-space:nowrap;letter-spacing:-0.255px;left:1828.5px;">Cusp</div>
<svg style="left:1874px;top:926px;" width="14" height="11" viewBox="0 0 14 11" ><path d="M1.500 1.500h11L7 9.500Z" fill="#c8c8c8" stroke="#666" stroke-width="1"/></svg>
<div style="left:1904px;top:921px;width:90px;height:19px;background:#c0c0c0;box-sizing:border-box;border:1px solid #3a3a3a;box-shadow:inset 2px 2px 1px #e2e2e2, inset -2px -3px 2px #747474;background:linear-gradient(90deg,#c0c0c0,#c0c0c0 25%,#c0c0c0);"></div>
<div style="top:923.50px;font-size:12px;line-height:15px;color:#e00000;white-space:nowrap;letter-spacing:-0.338px;left:1927.5px;">Stop VI</div>
<div style="top:971.00px;font-size:12px;line-height:15px;color:#000;white-space:nowrap;letter-spacing:-0.194px;left:1369.5px;">Time (s)</div>
<div style="left:1367px;top:988px;width:71px;height:21px;background:#d6d6d6;box-sizing:border-box;border:3px solid;border-color:#8a78c8 #cfc0ff #cfc0ff #8a78c8;"></div>
<div style="top:991.50px;font-size:12px;line-height:15px;color:#000;white-space:nowrap;letter-spacing:-0.484px;left:1371.5px;">230.790</div>
<div style="top:972.00px;font-size:12px;line-height:15px;color:#000;white-space:nowrap;letter-spacing:-0.100px;left:1454px;">Duration (s)</div>
<div style="left:1452px;top:989px;width:74px;height:21px;background:#d6d6d6;box-sizing:border-box;border:3px solid;border-color:#8a78c8 #cfc0ff #cfc0ff #8a78c8;"></div>
<div style="top:993.00px;font-size:12px;line-height:15px;color:#000;white-space:nowrap;letter-spacing:-0.484px;left:1456.5px;">231.734</div>
<div style="top:1022.50px;font-size:12px;line-height:15px;color:#000;white-space:nowrap;letter-spacing:-0.075px;left:1367.5px;">Current</div>
<div style="top:1037.50px;font-size:12px;line-height:15px;color:#000;white-space:nowrap;letter-spacing:0.190px;left:1367.5px;">Action</div>
<div style="left:1411px;top:1030px;width:34px;height:22px;background:#d6d6d6;box-sizing:border-box;border:3px solid;border-color:#8a78c8 #cfc0ff #cfc0ff #8a78c8;"></div>
<div style="top:1033.50px;font-size:12px;line-height:15px;color:#000;white-space:nowrap;letter-spacing:-0.176px;left:1415.5px;">94</div>
<div style="top:1021.00px;font-size:12px;line-height:15px;color:#000;white-space:nowrap;letter-spacing:-0.035px;left:1456px;">% completed</div>
<div style="left:1454px;top:1038px;width:76px;height:14px;background:#b0a0e8;box-sizing:border-box;border:3px solid;border-color:#8a78c8 #cfc0ff #cfc0ff #8a78c8;"></div>
<div style="left:1458px;top:1041px;width:70px;height:8px;background:#0a3adc;background:linear-gradient(#3a6af0,#0a32d4 40%,#0828b0);"></div>
<div style="top:1065.00px;font-size:12px;line-height:15px;color:#000;white-space:nowrap;letter-spacing:-0.160px;left:1369.5px;">Cue Description</div>
<div style="left:1369px;top:1082px;width:161px;height:90px;background:#d6d6d6;box-sizing:border-box;border:3px solid;border-color:#8a78c8 #cfc0ff #cfc0ff #8a78c8;"></div>
<div style="top:1086.00px;font-size:12px;line-height:15px;color:#000;white-space:nowrap;letter-spacing:-0.363px;left:1373.5px;">mcp 0 750 3000</div>
<div style="top:1101.00px;font-size:12px;line-height:15px;color:#000;white-space:nowrap;letter-spacing:-0.297px;left:1373.5px;">ee = no pbar EVC</div>
<div style="top:1116.00px;font-size:12px;line-height:15px;color:#000;white-space:nowrap;letter-spacing:0.027px;left:1373.5px;">rr = no rw6</div>
<div style="top:1131.00px;font-size:12px;line-height:15px;color:#000;white-space:nowrap;letter-spacing:0.116px;left:1373.5px;">t = Tdiag antiprotons</div>
<div style="left:1547px;top:979px;width:320px;height:52px;background:#fff;box-sizing:border-box;border:2px solid;border-color:#8a78c8 #cfc0ff #cfc0ff #8a78c8;"></div>
<div style="left:1549px;top:981px;width:9px;height:48px;background:#b4b4b4;"></div>
<svg style="left:1549px;top:999px;" width="9" height="12" viewBox="0 0 9 12" ><path d="M1.500 1.500h3v4h-3zM3 5.500v1.500h2.500M4.500 7h3v4h-3z" stroke="#000" fill="none" stroke-width="1.200"/></svg>
<div style="top:982.00px;font-size:12px;line-height:15px;color:#000;white-space:nowrap;letter-spacing:0.073px;left:1560.5px;">C:\CuspControl\Cusp\1_Cues\Antiprotons\2023-11-06\</div>
<div style="top:997.00px;font-size:12px;line-height:15px;color:#000;white-space:nowrap;letter-spacing:-0.433px;left:1560.5px;">Mix_83_eerrt.q</div>
<div style="left:1872px;top:977px;width:35px;height:30px;background:#c4c4c4;box-sizing:border-box;border:1px solid #3a3a3a;box-shadow:inset 2px 2px 1px #e2e2e2, inset -2px -3px 2px #747474;background:linear-gradient(90deg,#c4c4c4,#c4c4c4 25%,#c4c4c4);"></div>
<svg style="left:1879px;top:984px;" width="22" height="16" viewBox="0 0 22 16" ><path d="M1.500 13.500V3.500h5l1.500 2h7v2" fill="#f4f000" stroke="#000" stroke-width="1.100"/><path d="M1.500 13.500l3-6.500h14l-3.500 6.500z" fill="#707070" stroke="#000" stroke-width="1.100"/></svg>
<div style="left:1872px;top:1010px;width:35px;height:22px;background:#c4c4c4;box-sizing:border-box;border:1px solid #3a3a3a;box-shadow:inset 2px 2px 1px #e2e2e2, inset -2px -3px 2px #747474;background:linear-gradient(90deg,#c4c4c4,#c4c4c4 25%,#c4c4c4);"></div>
<div style="top:1014.00px;font-size:12px;line-height:15px;color:#000;white-space:nowrap;letter-spacing:-1.170px;left:1589.5px;width:600px;text-align:center;">OK</div>
<div style="left:1916px;top:974px;width:64px;height:23px;background:#727272;box-sizing:border-box;border:1px solid #3a3a3a;box-shadow:inset 2px 2px 1px #9a9a9a, inset -2px -3px 2px #484848;background:linear-gradient(90deg,#727272,#727272 25%,#727272);"></div>
<div style="top:978.50px;font-size:12px;line-height:15px;color:#129012;white-space:nowrap;letter-spacing:-0.340px;left:1648px;width:600px;text-align:center;">Run</div>
<div style="left:1916px;top:1001px;width:64px;height:23px;background:#c8c8c8;box-sizing:border-box;border:1px solid #3a3a3a;box-shadow:inset 2px 2px 1px #e2e2e2, inset -2px -3px 2px #747474;background:linear-gradient(90deg,#c8c8c8,#c8c8c8 25%,#c8c8c8);"></div>
<div style="top:1005.50px;font-size:12px;line-height:15px;color:#000;white-space:nowrap;letter-spacing:0.038px;left:1648px;width:600px;text-align:center;">Zero All</div>
<div style="left:1916px;top:1029px;width:64px;height:23px;background:#c8c8c8;box-sizing:border-box;border:1px solid #3a3a3a;box-shadow:inset 2px 2px 1px #e2e2e2, inset -2px -3px 2px #747474;background:linear-gradient(90deg,#c8c8c8,#c8c8c8 25%,#c8c8c8);"></div>
<div style="top:1033.50px;font-size:12px;line-height:15px;color:#e01030;white-space:nowrap;letter-spacing:-0.626px;left:1648px;width:600px;text-align:center;">ABORT</div>
<div style="left:1916px;top:1058px;width:64px;height:23px;background:#c8c8c8;box-sizing:border-box;border:1px solid #3a3a3a;box-shadow:inset 2px 2px 1px #e2e2e2, inset -2px -3px 2px #747474;background:linear-gradient(90deg,#c8c8c8,#c8c8c8 25%,#c8c8c8);"></div>
<div style="top:1062.50px;font-size:12px;line-height:15px;color:#000;white-space:nowrap;letter-spacing:-0.113px;left:1648px;width:600px;text-align:center;">Master</div>
<div style="left:1847px;top:1044px;width:64px;height:37px;background:#c4c4c4;box-sizing:border-box;border:1px solid #3a3a3a;box-shadow:inset 2px 2px 1px #e2e2e2, inset -2px -3px 2px #747474;background:linear-gradient(90deg,#c4c4c4,#c4c4c4 25%,#c4c4c4);"></div>
<div style="top:1055.50px;font-size:12px;line-height:15px;color:#000;white-space:nowrap;letter-spacing:-0.291px;left:1579px;width:600px;text-align:center;">No Scan</div>
<div style="top:1046.00px;font-size:12px;line-height:15px;color:#000;white-space:nowrap;letter-spacing:-0.502px;left:1552.5px;">Cycles</div>
<div style="left:1590px;top:1045px;width:39px;height:21px;background:#fff;box-sizing:border-box;border:3px solid;border-color:#8a78c8 #cfc0ff #cfc0ff #8a78c8;"></div>
<div style="top:1048.50px;font-size:12px;line-height:15px;color:#000;white-space:nowrap;left:1596px;">0</div>
<div style="left:1635px;top:1041px;width:98px;height:28px;background:#c4c4c4;box-sizing:border-box;border:1px solid #3a3a3a;box-shadow:inset 2px 2px 1px #e2e2e2, inset -2px -3px 2px #747474;background:linear-gradient(90deg,#c4c4c4,#c4c4c4 25%,#c4c4c4);"></div>
<div style="top:1048.50px;font-size:12px;line-height:15px;color:#000;white-space:nowrap;letter-spacing:-0.027px;left:1384px;width:600px;text-align:center;">Target Sync'd</div>
<div style="top:1038.00px;font-size:12px;line-height:15px;color:#000;white-space:nowrap;letter-spacing:-0.222px;left:1751px;">Sending</div>
<div style="left:1761px;top:1055px;width:28px;height:16px;background:#1c3c14;box-sizing:border-box;border:2px solid;border-color:#8a78c8 #cfc0ff #cfc0ff #8a78c8;background:radial-gradient(ellipse at 30% 25%,#5a7a4a 0,#23451a 35%,#183410 100%);"></div>
<div style="top:1038.00px;font-size:12px;line-height:15px;color:#000;white-space:nowrap;letter-spacing:-0.131px;left:1804.5px;">Ping</div>
<div style="left:1802px;top:1055px;width:28px;height:16px;background:#1c3c14;box-sizing:border-box;border:2px solid;border-color:#8a78c8 #cfc0ff #cfc0ff #8a78c8;background:radial-gradient(ellipse at 30% 25%,#5a7a4a 0,#23451a 35%,#183410 100%);"></div>
<div style="top:1073.50px;font-size:12px;line-height:15px;color:#000;white-space:nowrap;letter-spacing:-0.235px;left:1583.5px;">Cue Info</div>
<div style="left:1541px;top:1086px;width:13px;height:27px;background:#c0c0c0;border-radius:6px;border:1px solid #777;box-sizing:border-box;background:linear-gradient(90deg,#e0e0e0,#a0a0a0);"></div>
<svg style="left:1541px;top:1086px;" width="13" height="27" viewBox="0 0 13 27" ><path d="M6.500 5L9.500 11h-6zM6.500 22L9.500 16h-6z" fill="#999" stroke="#777" stroke-width="0.600"/></svg>
<div style="left:1556px;top:1090px;width:23px;height:20px;background:#fff;box-sizing:border-box;border:2px solid;border-color:#8a78c8 #cfc0ff #cfc0ff #8a78c8;"></div>
<div style="top:1093.50px;font-size:12px;line-height:15px;color:#000;white-space:nowrap;left:1560.5px;">0</div>
<div style="left:1586px;top:1089px;width:392px;height:91px;background:#b8a0ff;box-sizing:border-box;border:5px solid;border-color:#8e8e8e #a8a8a8 #a8a8a8 #8e8e8e;"></div>
<div style="top:1100.50px;font-size:12px;line-height:15px;color:#000;white-space:nowrap;letter-spacing:0.043px;left:1600.5px;">Action Description</div>
<div style="left:1600px;top:1118px;width:277px;height:60px;background:#d6d6d6;box-sizing:border-box;border:3px solid;border-color:#8a78c8 #cfc0ff #cfc0ff #8a78c8;"></div>
<div style="top:1122.50px;font-size:12px;line-height:15px;color:#000;white-space:nowrap;letter-spacing:-0.115px;left:1604.5px;">wait for pbar prep, set up u5 RW for positrons, zero</div>
<div style="top:1137.00px;font-size:12px;line-height:15px;color:#000;white-space:nowrap;letter-spacing:-0.267px;left:1604.5px;">Gialina</div>
<div style="top:1111.50px;font-size:12px;line-height:15px;color:#000;white-space:nowrap;letter-spacing:-0.142px;left:1892.5px;">Duration (s)</div>
<div style="left:1890px;top:1128px;width:72px;height:23px;background:#d6d6d6;box-sizing:border-box;border:3px solid;border-color:#8a78c8 #cfc0ff #cfc0ff #8a78c8;"></div>
<div style="top:1132.50px;font-size:12px;line-height:15px;color:#000;white-space:nowrap;letter-spacing:-0.423px;left:1897.5px;">100.000m</div>
<div style="left:1987px;top:907px;width:2px;height:259px;background:#ececec;"></div>
<div style="left:1340px;top:1166px;width:649px;height:18px;background:#f0f0f0;"></div>
<div style="left:1362px;top:1167px;width:357px;height:17px;background:#cdcdcd;"></div>
<svg style="left:1341px;top:1167px;" width="17" height="17" viewBox="0 0 17 17" ><path d="M10 4.500L6 8.500L10 12.500" stroke="#404040" stroke-width="2" fill="none"/></svg>
<svg style="left:1970px;top:1167px;" width="17" height="17" viewBox="0 0 17 17" ><path d="M6 4.500L10 8.500L6 12.500" stroke="#404040" stroke-width="2" fill="none"/></svg></div>
<div style="left:445px;top:438px;width:876px;height:742px;box-shadow:0 1px 9px rgba(0,0,0,.5);"></div>
<!-- partP -->
<div class="win" style="clip-path:inset(438px 668px 4px 445px)"><div style="left:445px;top:438px;width:876px;height:742px;background:#fff;"></div>
<svg style="left:455px;top:445px;" width="17" height="16" viewBox="0 0 17 16" ><rect x="1" y="1" width="9" height="8" fill="#2a50c8" stroke="#102060" stroke-width="1"/><rect x="5" y="4.500" width="8" height="7" fill="#5a8ae8" stroke="#183080" stroke-width="1"/><path d="M7 13.500h5" stroke="#444" stroke-width="1.500"/><circle cx="12" cy="12" r="3.600" fill="#e8f4e8" stroke="#2a8a2a" stroke-width="1"/><path d="M10.300 12h3.400M12.500 10.800l1.200 1.200l-1.200 1.200" stroke="#1a7a1a" stroke-width="0.900" fill="none"/></svg>
<div style="top:447.00px;font-size:12px;line-height:15px;color:#000;white-space:nowrap;letter-spacing:-0.055px;left:476px;">pcad3-posdaq - Remote Desktop Connection</div>
<div style="left:1202px;top:454px;width:11px;height:1px;background:#000;"></div>
<div style="left:1247px;top:448px;width:10px;height:10px;border:1px solid #000;box-sizing:border-box;"></div>
<svg style="left:1292px;top:448px;" width="12" height="12" viewBox="0 0 12 12" ><path d="M0.500 0.500L11 11M11 0.500L0.500 11" stroke="#000" stroke-width="1.100"/></svg>
<div style="left:446px;top:469px;width:836px;height:693px;background:#dbcab0;"></div>
<div style="left:504px;top:470px;width:100.5px;height:23px;background:#e0d0b8;border-radius:3px 3px 0 0;box-sizing:border-box;border-top:1px solid #f0e6d6;border-left:1px solid #eee2ce;border-right:2px solid #b0a088;background:linear-gradient(#e4d6c0,#dccbb2);"></div>
<div style="top:473.50px;font-size:12px;line-height:15px;color:#000;white-space:nowrap;letter-spacing:0.002px;left:510.5px;">Vacuum system</div>
<div style="left:607px;top:470px;width:86px;height:23px;background:#e0d0b8;border-radius:3px 3px 0 0;box-sizing:border-box;border-top:1px solid #f0e6d6;border-left:1px solid #eee2ce;border-right:2px solid #b0a088;background:linear-gradient(#e4d6c0,#dccbb2);"></div>
<div style="top:473.50px;font-size:12px;line-height:15px;color:#000;white-space:nowrap;letter-spacing:-0.366px;left:616px;">Pressure Log</div>
<div style="left:695px;top:470px;width:92px;height:23px;background:#e0d0b8;border-radius:3px 3px 0 0;box-sizing:border-box;border-top:1px solid #f0e6d6;border-left:1px solid #eee2ce;border-right:2px solid #b0a088;background:linear-gradient(#e4d6c0,#dccbb2);"></div>
<div style="top:473.50px;font-size:12px;line-height:15px;color:#000;white-space:nowrap;letter-spacing:-0.074px;left:704px;">Temperatures</div>
<div style="left:789px;top:470px;width:105.5px;height:23px;background:#e0d0b8;border-radius:3px 3px 0 0;box-sizing:border-box;border-top:1px solid #f0e6d6;border-left:1px solid #eee2ce;border-right:2px solid #b0a088;background:linear-gradient(#e4d6c0,#dccbb2);"></div>
<div style="top:473.50px;font-size:12px;line-height:15px;color:#000;white-space:nowrap;letter-spacing:0.017px;left:797px;">Temperature log</div>
<div style="left:896.5px;top:470px;width:105.0px;height:23px;background:#e0d0b8;border-radius:3px 3px 0 0;box-sizing:border-box;border-top:1px solid #f0e6d6;border-left:1px solid #eee2ce;border-right:2px solid #b0a088;background:linear-gradient(#e4d6c0,#dccbb2);"></div>
<div style="top:473.50px;font-size:12px;line-height:15px;color:#000;white-space:nowrap;letter-spacing:0.020px;left:905.5px;">Grow Moderator</div>
<div style="left:1004px;top:470px;width:97.5px;height:23px;background:#e0d0b8;border-radius:3px 3px 0 0;box-sizing:border-box;border-top:1px solid #f0e6d6;border-left:1px solid #eee2ce;border-right:2px solid #b0a088;background:linear-gradient(#e4d6c0,#dccbb2);"></div>
<div style="top:473.50px;font-size:12px;line-height:15px;color:#000;white-space:nowrap;letter-spacing:0.033px;left:1013.5px;">Moderator Log</div>
<div style="left:1103.5px;top:470px;width:90.5px;height:23px;background:#e0d0b8;border-radius:3px 3px 0 0;box-sizing:border-box;border-top:1px solid #f0e6d6;border-left:1px solid #eee2ce;border-right:2px solid #b0a088;background:linear-gradient(#e4d6c0,#dccbb2);"></div>
<div style="top:473.50px;font-size:12px;line-height:15px;color:#000;white-space:nowrap;letter-spacing:-0.095px;left:1113.5px;">Control Panel</div>
<div style="left:1196px;top:470px;width:94px;height:23px;background:#e0d0b8;border-radius:3px 3px 0 0;box-sizing:border-box;border-top:1px solid #f0e6d6;border-left:1px solid #eee2ce;border-right:2px solid #b0a088;background:linear-gradient(#e4d6c0,#dccbb2);"></div>
<div style="top:473.50px;font-size:12px;line-height:15px;color:#000;white-space:nowrap;letter-spacing:-0.004px;left:1206px;">Magnetic Field</div>
<div style="left:446px;top:493px;width:836px;height:4px;background:#e2d3bb;"></div>
<div style="left:446px;top:469px;width:57px;height:28px;background:#dbcab0;border-radius:0 3px 0 0;border-right:2px solid #a8987c;border-top:1px solid #efe2cc;box-sizing:border-box;"></div>
<div style="top:472.00px;font-size:12px;line-height:15px;color:#000;white-space:nowrap;letter-spacing:0.094px;left:438.5px;">summary</div>
<svg style="left:527px;top:521px;" width="714" height="198" viewBox="0 0 714 198" ><rect width="714" height="198" fill="#000"/><path d="M11.2 0V198M22.4 0V198M33.6 0V198M44.9 0V198M67.3 0V198M78.5 0V198M89.7 0V198M100.9 0V198M123.4 0V198M134.6 0V198M145.8 0V198M157.0 0V198M179.4 0V198M190.6 0V198M201.9 0V198M213.1 0V198M235.5 0V198M246.7 0V198M257.9 0V198M269.1 0V198M291.6 0V198M302.8 0V198M314.0 0V198M325.2 0V198M347.6 0V198M358.8 0V198M370.1 0V198M381.3 0V198M403.7 0V198M414.9 0V198M426.1 0V198M437.3 0V198M459.8 0V198M471.0 0V198M482.2 0V198M493.4 0V198M515.8 0V198M527.1 0V198M538.3 0V198M549.5 0V198M571.9 0V198M583.1 0V198M594.3 0V198M605.6 0V198M628.0 0V198M639.2 0V198M650.4 0V198M661.6 0V198M684.1 0V198M695.3 0V198M706.5 0V198M0 15.3H714M0 8.7H714M0 4.9H714M0 2.1H714M0 37.2H714M0 30.6H714M0 26.7H714M0 24.0H714M0 59.0H714M0 52.4H714M0 48.6H714M0 45.9H714M0 80.9H714M0 74.3H714M0 70.5H714M0 67.7H714M0 102.8H714M0 96.2H714M0 92.3H714M0 89.6H714M0 124.6H714M0 118.1H714M0 114.2H714M0 111.5H714M0 146.5H714M0 139.9H714M0 136.1H714M0 133.3H714M0 168.4H714M0 161.8H714M0 157.9H714M0 155.2H714M0 190.2H714M0 183.7H714M0 179.8H714M0 177.1H714" stroke="#5c5600" stroke-width="1" fill="none" shape-rendering="crispEdges"/><path d="M56.1 0V198M112.1 0V198M168.2 0V198M224.3 0V198M280.4 0V198M336.4 0V198M392.5 0V198M448.6 0V198M504.6 0V198M560.7 0V198M616.8 0V198M672.8 0V198M0 21.9H714M0 43.7H714M0 65.6H714M0 87.5H714M0 109.4H714M0 131.2H714M0 153.1H714M0 175.0H714" stroke="#a0a000" stroke-width="1" fill="none" shape-rendering="crispEdges"/><path d="M5.0 176.5H669.2" stroke="#e0c4c4" stroke-width="1.400"/><path fill="#e0c4c4" d="M2.4 176.5l2.600-3l2.600 3l-2.600 3zM11.9 176.5l2.600-3l2.600 3l-2.600 3zM21.4 176.5l2.600-3l2.600 3l-2.600 3zM30.9 176.5l2.600-3l2.600 3l-2.600 3zM38.1 176.5l2.600-3l2.600 3l-2.600 3zM46.2 176.5l2.600-3l2.600 3l-2.600 3zM54.0 176.5l2.600-3l2.600 3l-2.600 3zM62.0 176.5l2.600-3l2.600 3l-2.600 3zM72.1 176.5l2.600-3l2.600 3l-2.600 3zM79.9 176.5l2.600-3l2.600 3l-2.600 3zM87.7 176.5l2.600-3l2.600 3l-2.600 3zM97.2 176.5l2.600-3l2.600 3l-2.600 3zM104.4 176.5l2.600-3l2.600 3l-2.600 3zM111.6 176.5l2.600-3l2.600 3l-2.600 3zM121.1 176.5l2.600-3l2.600 3l-2.600 3zM128.3 176.5l2.600-3l2.600 3l-2.600 3zM141.9 176.5l2.600-3l2.600 3l-2.600 3zM150.0 176.5l2.600-3l2.600 3l-2.600 3zM158.0 176.5l2.600-3l2.600 3l-2.600 3zM167.5 176.5l2.600-3l2.600 3l-2.600 3zM175.3 176.5l2.600-3l2.600 3l-2.600 3zM182.5 176.5l2.600-3l2.600 3l-2.600 3zM190.5 176.5l2.600-3l2.600 3l-2.600 3zM198.6 176.5l2.600-3l2.600 3l-2.600 3zM212.2 176.5l2.600-3l2.600 3l-2.600 3zM220.3 176.5l2.600-3l2.600 3l-2.600 3zM229.8 176.5l2.600-3l2.600 3l-2.600 3zM239.3 176.5l2.600-3l2.600 3l-2.600 3zM247.1 176.5l2.600-3l2.600 3l-2.600 3zM254.3 176.5l2.600-3l2.600 3l-2.600 3zM263.8 176.5l2.600-3l2.600 3l-2.600 3zM271.6 176.5l2.600-3l2.600 3l-2.600 3zM285.2 176.5l2.600-3l2.600 3l-2.600 3zM294.7 176.5l2.600-3l2.600 3l-2.600 3zM302.5 176.5l2.600-3l2.600 3l-2.600 3zM312.1 176.5l2.600-3l2.600 3l-2.600 3zM319.2 176.5l2.600-3l2.600 3l-2.600 3zM327.3 176.5l2.600-3l2.600 3l-2.600 3zM334.4 176.5l2.600-3l2.600 3l-2.600 3zM342.2 176.5l2.600-3l2.600 3l-2.600 3zM355.9 176.5l2.600-3l2.600 3l-2.600 3zM363.1 176.5l2.600-3l2.600 3l-2.600 3zM372.6 176.5l2.600-3l2.600 3l-2.600 3zM380.6 176.5l2.600-3l2.600 3l-2.600 3zM388.4 176.5l2.600-3l2.600 3l-2.600 3zM396.2 176.5l2.600-3l2.600 3l-2.600 3zM403.4 176.5l2.600-3l2.600 3l-2.600 3zM410.6 176.5l2.600-3l2.600 3l-2.600 3zM420.7 176.5l2.600-3l2.600 3l-2.600 3zM428.5 176.5l2.600-3l2.600 3l-2.600 3zM436.3 176.5l2.600-3l2.600 3l-2.600 3zM444.1 176.5l2.600-3l2.600 3l-2.600 3zM451.9 176.5l2.600-3l2.600 3l-2.600 3zM459.7 176.5l2.600-3l2.600 3l-2.600 3zM467.7 176.5l2.600-3l2.600 3l-2.600 3zM477.3 176.5l2.600-3l2.600 3l-2.600 3zM487.4 176.5l2.600-3l2.600 3l-2.600 3zM494.6 176.5l2.600-3l2.600 3l-2.600 3zM504.1 176.5l2.600-3l2.600 3l-2.600 3zM511.9 176.5l2.600-3l2.600 3l-2.600 3zM519.9 176.5l2.600-3l2.600 3l-2.600 3zM529.4 176.5l2.600-3l2.600 3l-2.600 3zM537.2 176.5l2.600-3l2.600 3l-2.600 3zM545.3 176.5l2.600-3l2.600 3l-2.600 3zM558.9 176.5l2.600-3l2.600 3l-2.600 3zM568.4 176.5l2.600-3l2.600 3l-2.600 3zM576.2 176.5l2.600-3l2.600 3l-2.600 3zM584.0 176.5l2.600-3l2.600 3l-2.600 3zM591.8 176.5l2.600-3l2.600 3l-2.600 3zM599.6 176.5l2.600-3l2.600 3l-2.600 3zM606.8 176.5l2.600-3l2.600 3l-2.600 3zM614.0 176.5l2.600-3l2.600 3l-2.600 3zM627.6 176.5l2.600-3l2.600 3l-2.600 3zM635.4 176.5l2.600-3l2.600 3l-2.600 3zM643.2 176.5l2.600-3l2.600 3l-2.600 3zM651.0 176.5l2.600-3l2.600 3l-2.600 3zM658.8 176.5l2.600-3l2.600 3l-2.600 3zM666.6 176.5l2.600-3l2.600 3l-2.600 3z"/><path d="M5.0 173.5H669.2" stroke="#5c88f0" stroke-width="1.400"/><g fill="#5c88f0"><circle cx="5.0" cy="173.5" r="2.4"/><circle cx="14.5" cy="173.5" r="2.4"/><circle cx="24.0" cy="173.5" r="2.4"/><circle cx="33.5" cy="173.5" r="2.4"/><circle cx="40.7" cy="173.5" r="2.4"/><circle cx="48.8" cy="173.5" r="2.4"/><circle cx="56.6" cy="173.5" r="2.4"/><circle cx="64.6" cy="173.5" r="2.4"/><circle cx="74.7" cy="173.5" r="2.4"/><circle cx="82.5" cy="173.5" r="2.4"/><circle cx="90.3" cy="173.5" r="2.4"/><circle cx="99.8" cy="173.5" r="2.4"/><circle cx="107.0" cy="173.5" r="2.4"/><circle cx="114.2" cy="173.5" r="2.4"/><circle cx="123.7" cy="173.5" r="2.4"/><circle cx="130.9" cy="173.5" r="2.4"/><circle cx="144.5" cy="173.5" r="2.4"/><circle cx="152.6" cy="173.5" r="2.4"/><circle cx="160.6" cy="173.5" r="2.4"/><circle cx="170.1" cy="173.5" r="2.4"/><circle cx="177.9" cy="173.5" r="2.4"/><circle cx="185.1" cy="173.5" r="2.4"/><circle cx="193.1" cy="173.5" r="2.4"/><circle cx="201.2" cy="173.5" r="2.4"/><circle cx="214.8" cy="173.5" r="2.4"/><circle cx="222.9" cy="173.5" r="2.4"/><circle cx="232.4" cy="173.5" r="2.4"/><circle cx="241.9" cy="173.5" r="2.4"/><circle cx="249.7" cy="173.5" r="2.4"/><circle cx="256.9" cy="173.5" r="2.4"/><circle cx="266.4" cy="173.5" r="2.4"/><circle cx="274.2" cy="173.5" r="2.4"/><circle cx="287.8" cy="173.5" r="2.4"/><circle cx="297.3" cy="173.5" r="2.4"/><circle cx="305.1" cy="173.5" r="2.4"/><circle cx="314.7" cy="173.5" r="2.4"/><circle cx="321.8" cy="173.5" r="2.4"/><circle cx="329.9" cy="173.5" r="2.4"/><circle cx="337.0" cy="173.5" r="2.4"/><circle cx="344.8" cy="173.5" r="2.4"/><circle cx="358.5" cy="173.5" r="2.4"/><circle cx="365.7" cy="173.5" r="2.4"/><circle cx="375.2" cy="173.5" r="2.4"/><circle cx="383.2" cy="173.5" r="2.4"/><circle cx="391.0" cy="173.5" r="2.4"/><circle cx="398.8" cy="173.5" r="2.4"/><circle cx="406.0" cy="173.5" r="2.4"/><circle cx="413.2" cy="173.5" r="2.4"/><circle cx="423.3" cy="173.5" r="2.4"/><circle cx="431.1" cy="173.5" r="2.4"/><circle cx="438.9" cy="173.5" r="2.4"/><circle cx="446.7" cy="173.5" r="2.4"/><circle cx="454.5" cy="173.5" r="2.4"/><circle cx="462.3" cy="173.5" r="2.4"/><circle cx="470.3" cy="173.5" r="2.4"/><circle cx="479.9" cy="173.5" r="2.4"/><circle cx="490.0" cy="173.5" r="2.4"/><circle cx="497.2" cy="173.5" r="2.4"/><circle cx="506.7" cy="173.5" r="2.4"/><circle cx="514.5" cy="173.5" r="2.4"/><circle cx="522.5" cy="173.5" r="2.4"/><circle cx="532.0" cy="173.5" r="2.4"/><circle cx="539.8" cy="173.5" r="2.4"/><circle cx="547.9" cy="173.5" r="2.4"/><circle cx="561.5" cy="173.5" r="2.4"/><circle cx="571.0" cy="173.5" r="2.4"/><circle cx="578.8" cy="173.5" r="2.4"/><circle cx="586.6" cy="173.5" r="2.4"/><circle cx="594.4" cy="173.5" r="2.4"/><circle cx="602.2" cy="173.5" r="2.4"/><circle cx="609.4" cy="173.5" r="2.4"/><circle cx="616.6" cy="173.5" r="2.4"/><circle cx="630.2" cy="173.5" r="2.4"/><circle cx="638.0" cy="173.5" r="2.4"/><circle cx="645.8" cy="173.5" r="2.4"/><circle cx="653.6" cy="173.5" r="2.4"/><circle cx="661.4" cy="173.5" r="2.4"/><circle cx="669.2" cy="173.5" r="2.4"/></g><path d="M5.0 170H669.2" stroke="#f01040" stroke-width="1.400"/><g fill="#f01040"><circle cx="5.0" cy="170.0" r="2.7"/><circle cx="14.5" cy="170.0" r="2.7"/><circle cx="24.0" cy="170.0" r="2.7"/><circle cx="33.5" cy="170.0" r="2.7"/><circle cx="40.7" cy="170.0" r="2.7"/><circle cx="48.8" cy="170.0" r="2.7"/><circle cx="56.6" cy="170.0" r="2.7"/><circle cx="64.6" cy="170.0" r="2.7"/><circle cx="74.7" cy="170.0" r="2.7"/><circle cx="82.5" cy="170.0" r="2.7"/><circle cx="90.3" cy="170.0" r="2.7"/><circle cx="99.8" cy="170.0" r="2.7"/><circle cx="107.0" cy="170.0" r="2.7"/><circle cx="114.2" cy="170.0" r="2.7"/><circle cx="123.7" cy="170.0" r="2.7"/><circle cx="130.9" cy="170.0" r="2.7"/><circle cx="144.5" cy="170.0" r="2.7"/><circle cx="152.6" cy="170.0" r="2.7"/><circle cx="160.6" cy="170.0" r="2.7"/><circle cx="170.1" cy="170.0" r="2.7"/><circle cx="177.9" cy="170.0" r="2.7"/><circle cx="185.1" cy="170.0" r="2.7"/><circle cx="193.1" cy="170.0" r="2.7"/><circle cx="201.2" cy="170.0" r="2.7"/><circle cx="214.8" cy="170.0" r="2.7"/><circle cx="222.9" cy="170.0" r="2.7"/><circle cx="232.4" cy="170.0" r="2.7"/><circle cx="241.9" cy="170.0" r="2.7"/><circle cx="249.7" cy="170.0" r="2.7"/><circle cx="256.9" cy="170.0" r="2.7"/><circle cx="266.4" cy="170.0" r="2.7"/><circle cx="274.2" cy="170.0" r="2.7"/><circle cx="287.8" cy="170.0" r="2.7"/><circle cx="297.3" cy="170.0" r="2.7"/><circle cx="305.1" cy="170.0" r="2.7"/><circle cx="314.7" cy="170.0" r="2.7"/><circle cx="321.8" cy="170.0" r="2.7"/><circle cx="329.9" cy="170.0" r="2.7"/><circle cx="337.0" cy="170.0" r="2.7"/><circle cx="344.8" cy="170.0" r="2.7"/><circle cx="358.5" cy="170.0" r="2.7"/><circle cx="365.7" cy="170.0" r="2.7"/><circle cx="375.2" cy="170.0" r="2.7"/><circle cx="383.2" cy="170.0" r="2.7"/><circle cx="391.0" cy="170.0" r="2.7"/><circle cx="398.8" cy="170.0" r="2.7"/><circle cx="406.0" cy="170.0" r="2.7"/><circle cx="413.2" cy="170.0" r="2.7"/><circle cx="423.3" cy="170.0" r="2.7"/><circle cx="431.1" cy="170.0" r="2.7"/><circle cx="438.9" cy="170.0" r="2.7"/><circle cx="446.7" cy="170.0" r="2.7"/><circle cx="454.5" cy="170.0" r="2.7"/><circle cx="462.3" cy="170.0" r="2.7"/><circle cx="470.3" cy="170.0" r="2.7"/><circle cx="479.9" cy="170.0" r="2.7"/><circle cx="490.0" cy="170.0" r="2.7"/><circle cx="497.2" cy="170.0" r="2.7"/><circle cx="506.7" cy="170.0" r="2.7"/><circle cx="514.5" cy="170.0" r="2.7"/><circle cx="522.5" cy="170.0" r="2.7"/><circle cx="532.0" cy="170.0" r="2.7"/><circle cx="539.8" cy="170.0" r="2.7"/><circle cx="547.9" cy="170.0" r="2.7"/><circle cx="561.5" cy="170.0" r="2.7"/><circle cx="571.0" cy="170.0" r="2.7"/><circle cx="578.8" cy="170.0" r="2.7"/><circle cx="586.6" cy="170.0" r="2.7"/><circle cx="594.4" cy="170.0" r="2.7"/><circle cx="602.2" cy="170.0" r="2.7"/><circle cx="609.4" cy="170.0" r="2.7"/><circle cx="616.6" cy="170.0" r="2.7"/><circle cx="630.2" cy="170.0" r="2.7"/><circle cx="638.0" cy="170.0" r="2.7"/><circle cx="645.8" cy="170.0" r="2.7"/><circle cx="653.6" cy="170.0" r="2.7"/><circle cx="661.4" cy="170.0" r="2.7"/><circle cx="669.2" cy="170.0" r="2.7"/></g><path d="M5.0 57.5H669.2" stroke="#40e848" stroke-width="1.400"/><g fill="#40e848"><circle cx="5.0" cy="57.5" r="2.7"/><circle cx="14.5" cy="57.5" r="2.7"/><circle cx="24.0" cy="57.5" r="2.7"/><circle cx="33.5" cy="57.5" r="2.7"/><circle cx="40.7" cy="57.5" r="2.7"/><circle cx="48.8" cy="57.5" r="2.7"/><circle cx="56.6" cy="57.5" r="2.7"/><circle cx="64.6" cy="57.5" r="2.7"/><circle cx="74.7" cy="57.5" r="2.7"/><circle cx="82.5" cy="57.5" r="2.7"/><circle cx="90.3" cy="57.5" r="2.7"/><circle cx="99.8" cy="57.5" r="2.7"/><circle cx="107.0" cy="57.5" r="2.7"/><circle cx="114.2" cy="57.5" r="2.7"/><circle cx="123.7" cy="57.5" r="2.7"/><circle cx="130.9" cy="57.5" r="2.7"/><circle cx="144.5" cy="57.5" r="2.7"/><circle cx="152.6" cy="57.5" r="2.7"/><circle cx="160.6" cy="55.5" r="2.7"/><circle cx="170.1" cy="57.5" r="2.7"/><circle cx="177.9" cy="57.5" r="2.7"/><circle cx="185.1" cy="57.5" r="2.7"/><circle cx="193.1" cy="57.5" r="2.7"/><circle cx="201.2" cy="57.5" r="2.7"/><circle cx="214.8" cy="57.5" r="2.7"/><circle cx="222.9" cy="57.5" r="2.7"/><circle cx="232.4" cy="56.0" r="2.7"/><circle cx="241.9" cy="57.5" r="2.7"/><circle cx="249.7" cy="57.5" r="2.7"/><circle cx="256.9" cy="57.5" r="2.7"/><circle cx="266.4" cy="57.5" r="2.7"/><circle cx="274.2" cy="57.5" r="2.7"/><circle cx="287.8" cy="57.5" r="2.7"/><circle cx="297.3" cy="57.5" r="2.7"/><circle cx="305.1" cy="57.5" r="2.7"/><circle cx="314.7" cy="57.5" r="2.7"/><circle cx="321.8" cy="57.5" r="2.7"/><circle cx="329.9" cy="57.5" r="2.7"/><circle cx="337.0" cy="57.5" r="2.7"/><circle cx="344.8" cy="57.5" r="2.7"/><circle cx="358.5" cy="57.5" r="2.7"/><circle cx="365.7" cy="57.5" r="2.7"/><circle cx="375.2" cy="57.5" r="2.7"/><circle cx="383.2" cy="57.5" r="2.7"/><circle cx="391.0" cy="57.5" r="2.7"/><circle cx="398.8" cy="56.0" r="2.7"/><circle cx="406.0" cy="57.5" r="2.7"/><circle cx="413.2" cy="57.5" r="2.7"/><circle cx="423.3" cy="57.5" r="2.7"/><circle cx="431.1" cy="57.5" r="2.7"/><circle cx="438.9" cy="57.5" r="2.7"/><circle cx="446.7" cy="57.5" r="2.7"/><circle cx="454.5" cy="57.5" r="2.7"/><circle cx="462.3" cy="57.5" r="2.7"/><circle cx="470.3" cy="57.5" r="2.7"/><circle cx="479.9" cy="56.0" r="2.7"/><circle cx="490.0" cy="57.5" r="2.7"/><circle cx="497.2" cy="57.5" r="2.7"/><circle cx="506.7" cy="57.5" r="2.7"/><circle cx="514.5" cy="57.5" r="2.7"/><circle cx="522.5" cy="57.5" r="2.7"/><circle cx="532.0" cy="56.0" r="2.7"/><circle cx="539.8" cy="57.5" r="2.7"/><circle cx="547.9" cy="57.5" r="2.7"/><circle cx="561.5" cy="57.5" r="2.7"/><circle cx="571.0" cy="57.5" r="2.7"/><circle cx="578.8" cy="56.0" r="2.7"/><circle cx="586.6" cy="56.0" r="2.7"/><circle cx="594.4" cy="56.0" r="2.7"/><circle cx="602.2" cy="56.0" r="2.7"/><circle cx="609.4" cy="56.0" r="2.7"/><circle cx="616.6" cy="56.0" r="2.7"/><circle cx="630.2" cy="56.0" r="2.7"/><circle cx="638.0" cy="56.0" r="2.7"/><circle cx="645.8" cy="56.0" r="2.7"/><circle cx="653.6" cy="56.0" r="2.7"/><circle cx="661.4" cy="56.0" r="2.7"/><circle cx="669.2" cy="56.0" r="2.7"/></g><path d="M5.0 46.5H669.2" stroke="#ffff66" stroke-width="1.400"/><g fill="#ffff66"><circle cx="5.0" cy="46.5" r="2.7"/><circle cx="14.5" cy="46.5" r="2.7"/><circle cx="24.0" cy="46.5" r="2.7"/><circle cx="33.5" cy="46.5" r="2.7"/><circle cx="40.7" cy="46.5" r="2.7"/><circle cx="48.8" cy="46.5" r="2.7"/><circle cx="56.6" cy="46.5" r="2.7"/><circle cx="64.6" cy="46.5" r="2.7"/><circle cx="74.7" cy="46.5" r="2.7"/><circle cx="82.5" cy="46.5" r="2.7"/><circle cx="90.3" cy="46.5" r="2.7"/><circle cx="99.8" cy="46.5" r="2.7"/><circle cx="107.0" cy="46.5" r="2.7"/><circle cx="114.2" cy="46.5" r="2.7"/><circle cx="123.7" cy="46.5" r="2.7"/><circle cx="130.9" cy="46.5" r="2.7"/><circle cx="144.5" cy="46.5" r="2.7"/><circle cx="152.6" cy="46.5" r="2.7"/><circle cx="160.6" cy="46.5" r="2.7"/><circle cx="170.1" cy="46.5" r="2.7"/><circle cx="177.9" cy="46.5" r="2.7"/><circle cx="185.1" cy="46.5" r="2.7"/><circle cx="193.1" cy="46.5" r="2.7"/><circle cx="201.2" cy="46.5" r="2.7"/><circle cx="214.8" cy="46.5" r="2.7"/><circle cx="222.9" cy="46.5" r="2.7"/><circle cx="232.4" cy="46.5" r="2.7"/><circle cx="241.9" cy="46.5" r="2.7"/><circle cx="249.7" cy="46.5" r="2.7"/><circle cx="256.9" cy="46.5" r="2.7"/><circle cx="266.4" cy="46.5" r="2.7"/><circle cx="274.2" cy="46.5" r="2.7"/><circle cx="287.8" cy="46.5" r="2.7"/><circle cx="297.3" cy="46.5" r="2.7"/><circle cx="305.1" cy="46.5" r="2.7"/><circle cx="314.7" cy="46.5" r="2.7"/><circle cx="321.8" cy="46.5" r="2.7"/><circle cx="329.9" cy="46.5" r="2.7"/><circle cx="337.0" cy="46.5" r="2.7"/><circle cx="344.8" cy="46.5" r="2.7"/><circle cx="358.5" cy="46.5" r="2.7"/><circle cx="365.7" cy="46.5" r="2.7"/><circle cx="375.2" cy="46.5" r="2.7"/><circle cx="383.2" cy="46.5" r="2.7"/><circle cx="391.0" cy="46.5" r="2.7"/><circle cx="398.8" cy="46.5" r="2.7"/><circle cx="406.0" cy="46.5" r="2.7"/><circle cx="413.2" cy="46.5" r="2.7"/><circle cx="423.3" cy="46.5" r="2.7"/><circle cx="431.1" cy="46.5" r="2.7"/><circle cx="438.9" cy="46.5" r="2.7"/><circle cx="446.7" cy="46.5" r="2.7"/><circle cx="454.5" cy="46.5" r="2.7"/><circle cx="462.3" cy="46.5" r="2.7"/><circle cx="470.3" cy="46.5" r="2.7"/><circle cx="479.9" cy="46.5" r="2.7"/><circle cx="490.0" cy="46.5" r="2.7"/><circle cx="497.2" cy="46.5" r="2.7"/><circle cx="506.7" cy="46.5" r="2.7"/><circle cx="514.5" cy="46.5" r="2.7"/><circle cx="522.5" cy="46.5" r="2.7"/><circle cx="532.0" cy="46.5" r="2.7"/><circle cx="539.8" cy="46.5" r="2.7"/><circle cx="547.9" cy="46.5" r="2.7"/><circle cx="561.5" cy="46.5" r="2.7"/><circle cx="571.0" cy="46.5" r="2.7"/><circle cx="578.8" cy="46.5" r="2.7"/><circle cx="586.6" cy="46.5" r="2.7"/><circle cx="594.4" cy="46.5" r="2.7"/><circle cx="602.2" cy="46.5" r="2.7"/><circle cx="609.4" cy="46.5" r="2.7"/><circle cx="616.6" cy="46.5" r="2.7"/><circle cx="630.2" cy="46.5" r="2.7"/><circle cx="638.0" cy="46.5" r="2.7"/><circle cx="645.8" cy="46.5" r="2.7"/><circle cx="653.6" cy="46.5" r="2.7"/><circle cx="661.4" cy="46.5" r="2.7"/><circle cx="669.2" cy="46.5" r="2.7"/></g></svg>
<div style="top:514.70px;font-size:12px;line-height:15px;color:#000;white-space:nowrap;letter-spacing:-0.894px;right:1472px;text-align:right;">1.0E-1</div>
<div style="left:519px;top:522px;width:6px;height:1px;background:#000;"></div>
<div style="top:536.57px;font-size:12px;line-height:15px;color:#000;white-space:nowrap;letter-spacing:-0.894px;right:1472px;text-align:right;">1.0E-2</div>
<div style="left:519px;top:544px;width:6px;height:1px;background:#000;"></div>
<div style="top:558.44px;font-size:12px;line-height:15px;color:#000;white-space:nowrap;letter-spacing:-0.894px;right:1472px;text-align:right;">1.0E-3</div>
<div style="left:519px;top:565px;width:6px;height:1px;background:#000;"></div>
<div style="top:580.31px;font-size:12px;line-height:15px;color:#000;white-space:nowrap;letter-spacing:-0.894px;right:1472px;text-align:right;">1.0E-4</div>
<div style="left:519px;top:587px;width:6px;height:1px;background:#000;"></div>
<div style="top:602.18px;font-size:12px;line-height:15px;color:#000;white-space:nowrap;letter-spacing:-0.894px;right:1472px;text-align:right;">1.0E-5</div>
<div style="left:519px;top:609px;width:6px;height:1px;background:#000;"></div>
<div style="top:624.05px;font-size:12px;line-height:15px;color:#000;white-space:nowrap;letter-spacing:-0.894px;right:1472px;text-align:right;">1.0E-6</div>
<div style="left:519px;top:631px;width:6px;height:1px;background:#000;"></div>
<div style="top:645.92px;font-size:12px;line-height:15px;color:#000;white-space:nowrap;letter-spacing:-0.894px;right:1472px;text-align:right;">1.0E-7</div>
<div style="left:519px;top:653px;width:6px;height:1px;background:#000;"></div>
<div style="top:667.79px;font-size:12px;line-height:15px;color:#000;white-space:nowrap;letter-spacing:-0.894px;right:1472px;text-align:right;">1.0E-8</div>
<div style="left:519px;top:675px;width:6px;height:1px;background:#000;"></div>
<div style="top:689.66px;font-size:12px;line-height:15px;color:#000;white-space:nowrap;letter-spacing:-0.894px;right:1472px;text-align:right;">1.0E-9</div>
<div style="left:519px;top:697px;width:6px;height:1px;background:#000;"></div>
<div style="top:711.53px;font-size:12px;line-height:15px;color:#000;white-space:nowrap;letter-spacing:-0.791px;right:1472px;text-align:right;">1.0E-10</div>
<div style="left:519px;top:719px;width:6px;height:1px;background:#000;"></div>
<div style="left:527px;top:721px;width:1px;height:5px;background:#000;"></div>
<div style="top:727.00px;font-size:12px;line-height:15px;color:#000;white-space:nowrap;letter-spacing:-0.808px;left:227.0px;width:600px;text-align:center;">14:14</div>
<div style="left:583px;top:721px;width:1px;height:5px;background:#000;"></div>
<div style="top:727.00px;font-size:12px;line-height:15px;color:#000;white-space:nowrap;letter-spacing:-0.808px;left:283.07000000000005px;width:600px;text-align:center;">14:14</div>
<div style="left:639px;top:721px;width:1px;height:5px;background:#000;"></div>
<div style="top:727.00px;font-size:12px;line-height:15px;color:#000;white-space:nowrap;letter-spacing:-0.808px;left:339.14px;width:600px;text-align:center;">14:14</div>
<div style="left:695px;top:721px;width:1px;height:5px;background:#000;"></div>
<div style="top:727.00px;font-size:12px;line-height:15px;color:#000;white-space:nowrap;letter-spacing:-0.808px;left:395.21000000000004px;width:600px;text-align:center;">14:14</div>
<div style="left:751px;top:721px;width:1px;height:5px;background:#000;"></div>
<div style="top:727.00px;font-size:12px;line-height:15px;color:#000;white-space:nowrap;letter-spacing:-0.808px;left:451.28px;width:600px;text-align:center;">14:14</div>
<div style="left:807px;top:721px;width:1px;height:5px;background:#000;"></div>
<div style="top:727.00px;font-size:12px;line-height:15px;color:#000;white-space:nowrap;letter-spacing:-0.808px;left:507.35px;width:600px;text-align:center;">14:14</div>
<div style="left:863px;top:721px;width:1px;height:5px;background:#000;"></div>
<div style="top:727.00px;font-size:12px;line-height:15px;color:#000;white-space:nowrap;letter-spacing:-0.808px;left:563.4200000000001px;width:600px;text-align:center;">14:15</div>
<div style="left:919px;top:721px;width:1px;height:5px;background:#000;"></div>
<div style="top:727.00px;font-size:12px;line-height:15px;color:#000;white-space:nowrap;letter-spacing:-0.808px;left:619.49px;width:600px;text-align:center;">14:15</div>
<div style="left:976px;top:721px;width:1px;height:5px;background:#000;"></div>
<div style="top:727.00px;font-size:12px;line-height:15px;color:#000;white-space:nowrap;letter-spacing:-0.808px;left:675.56px;width:600px;text-align:center;">14:15</div>
<div style="left:1032px;top:721px;width:1px;height:5px;background:#000;"></div>
<div style="top:727.00px;font-size:12px;line-height:15px;color:#000;white-space:nowrap;letter-spacing:-0.808px;left:731.6300000000001px;width:600px;text-align:center;">14:15</div>
<div style="left:1088px;top:721px;width:1px;height:5px;background:#000;"></div>
<div style="top:727.00px;font-size:12px;line-height:15px;color:#000;white-space:nowrap;letter-spacing:-0.808px;left:787.7px;width:600px;text-align:center;">14:15</div>
<div style="left:1144px;top:721px;width:1px;height:5px;background:#000;"></div>
<div style="top:727.00px;font-size:12px;line-height:15px;color:#000;white-space:nowrap;letter-spacing:-0.808px;left:843.77px;width:600px;text-align:center;">14:15</div>
<div style="left:1200px;top:721px;width:1px;height:5px;background:#000;"></div>
<div style="top:727.00px;font-size:12px;line-height:15px;color:#000;white-space:nowrap;letter-spacing:-0.808px;left:899.8400000000001px;width:600px;text-align:center;">14:16</div>
<div style="top:727.00px;font-size:12px;line-height:15px;color:#000;white-space:nowrap;letter-spacing:-0.808px;left:1224px;width:17px;overflow:hidden;">14:16</div>
<div style="left:1240px;top:721px;width:1px;height:5px;background:#000;"></div>
<div style="left:269px;top:610.50px;width:400px;text-align:center;font-size:12px;line-height:15px;color:#000;white-space:nowrap;transform:rotate(-90deg);transform-origin:50% 50%;letter-spacing:-0.246px;">Pressure (mbar)</div>
<svg style="left:524px;top:748px;" width="720" height="187" viewBox="0 0 720 187" ><rect width="720" height="187" fill="#000"/><path d="M11.3 0V187M22.5 0V187M33.8 0V187M45.0 0V187M67.6 0V187M78.8 0V187M90.1 0V187M101.3 0V187M123.9 0V187M135.1 0V187M146.4 0V187M157.6 0V187M180.2 0V187M191.4 0V187M202.7 0V187M213.9 0V187M236.5 0V187M247.7 0V187M259.0 0V187M270.2 0V187M292.8 0V187M304.0 0V187M315.3 0V187M326.5 0V187M349.1 0V187M360.3 0V187M371.6 0V187M382.8 0V187M405.4 0V187M416.6 0V187M427.9 0V187M439.1 0V187M461.7 0V187M472.9 0V187M484.2 0V187M495.4 0V187M518.0 0V187M529.2 0V187M540.5 0V187M551.7 0V187M574.3 0V187M585.5 0V187M596.8 0V187M608.0 0V187M630.6 0V187M641.8 0V187M653.1 0V187M664.3 0V187M686.9 0V187M698.1 0V187M709.4 0V187M0 4.7H720M0 9.3H720M0 14.0H720M0 18.6H720M0 27.9H720M0 32.6H720M0 37.2H720M0 41.9H720M0 51.2H720M0 55.9H720M0 60.5H720M0 65.2H720M0 74.5H720M0 79.2H720M0 83.8H720M0 88.5H720M0 97.8H720M0 102.4H720M0 107.1H720M0 111.7H720M0 121.1H720M0 125.7H720M0 130.4H720M0 135.0H720M0 144.3H720M0 149.0H720M0 153.6H720M0 158.3H720M0 167.6H720M0 172.3H720M0 176.9H720M0 181.6H720" stroke="#5c5600" stroke-width="1" fill="none" shape-rendering="crispEdges"/><path d="M56.3 0V187M112.6 0V187M168.9 0V187M225.2 0V187M281.5 0V187M337.8 0V187M394.1 0V187M450.4 0V187M506.7 0V187M563.0 0V187M619.3 0V187M675.6 0V187M0 23.3H720M0 46.6H720M0 69.8H720M0 93.1H720M0 116.4H720M0 139.7H720M0 163.0H720" stroke="#a0a000" stroke-width="1" fill="none" shape-rendering="crispEdges"/><path d="M0 170H507.7" stroke="#40e0d0" stroke-width="1.300"/><path fill="#40e0d0" d="M4.0 170.500l3-3.500l3 3.500zM11.2 170.500l3-3.500l3 3.500zM19.0 170.500l3-3.500l3 3.500zM26.8 170.500l3-3.500l3 3.500zM34.6 170.500l3-3.500l3 3.500zM42.4 170.500l3-3.500l3 3.500zM49.6 170.500l3-3.500l3 3.500zM57.4 170.500l3-3.500l3 3.500zM67.5 170.500l3-3.500l3 3.500zM75.5 170.500l3-3.500l3 3.500zM83.3 170.500l3-3.500l3 3.500zM91.1 170.500l3-3.500l3 3.500zM99.2 170.500l3-3.500l3 3.500zM106.3 170.500l3-3.500l3 3.500zM114.1 170.500l3-3.500l3 3.500zM123.7 170.500l3-3.500l3 3.500zM137.3 170.500l3-3.500l3 3.500zM144.5 170.500l3-3.500l3 3.500zM152.3 170.500l3-3.500l3 3.500zM160.3 170.500l3-3.500l3 3.500zM168.1 170.500l3-3.500l3 3.500zM176.1 170.500l3-3.500l3 3.500zM185.7 170.500l3-3.500l3 3.500zM193.7 170.500l3-3.500l3 3.500zM203.8 170.500l3-3.500l3 3.500zM213.4 170.500l3-3.500l3 3.500zM221.4 170.500l3-3.500l3 3.500zM229.2 170.500l3-3.500l3 3.500zM237.2 170.500l3-3.500l3 3.500zM246.7 170.500l3-3.500l3 3.500zM256.3 170.500l3-3.500l3 3.500zM264.1 170.500l3-3.500l3 3.500zM274.2 170.500l3-3.500l3 3.500zM281.4 170.500l3-3.500l3 3.500zM288.5 170.500l3-3.500l3 3.500zM298.1 170.500l3-3.500l3 3.500zM306.1 170.500l3-3.500l3 3.500zM313.3 170.500l3-3.500l3 3.500zM320.4 170.500l3-3.500l3 3.500zM328.2 170.500l3-3.500l3 3.500zM338.4 170.500l3-3.500l3 3.500zM346.4 170.500l3-3.500l3 3.500zM355.9 170.500l3-3.500l3 3.500zM363.7 170.500l3-3.500l3 3.500zM373.3 170.500l3-3.500l3 3.500zM380.4 170.500l3-3.500l3 3.500zM388.2 170.500l3-3.500l3 3.500zM395.4 170.500l3-3.500l3 3.500zM409.1 170.500l3-3.500l3 3.500zM416.9 170.500l3-3.500l3 3.500zM424.0 170.500l3-3.500l3 3.500zM433.5 170.500l3-3.500l3 3.500zM440.7 170.500l3-3.500l3 3.500zM448.5 170.500l3-3.500l3 3.500zM458.0 170.500l3-3.500l3 3.500zM465.2 170.500l3-3.500l3 3.500zM475.4 170.500l3-3.500l3 3.500zM483.2 170.500l3-3.500l3 3.500zM490.3 170.500l3-3.500l3 3.500zM497.5 170.500l3-3.500l3 3.500zM504.7 170.500l3-3.500l3 3.500z"/><path d="M0 171.500H674.9" stroke="#f01040" stroke-width="1.200"/><g fill="#f01040"><circle cx="7.0" cy="171.5" r="2.600"/><circle cx="14.2" cy="171.5" r="2.600"/><circle cx="22.0" cy="171.5" r="2.600"/><circle cx="29.8" cy="171.5" r="2.600"/><circle cx="37.6" cy="171.5" r="2.600"/><circle cx="45.4" cy="171.5" r="2.600"/><circle cx="52.6" cy="171.5" r="2.600"/><circle cx="60.4" cy="171.5" r="2.600"/><circle cx="70.5" cy="171.5" r="2.600"/><circle cx="78.5" cy="171.5" r="2.600"/><circle cx="86.3" cy="171.5" r="2.600"/><circle cx="94.1" cy="171.5" r="2.600"/><circle cx="102.2" cy="171.5" r="2.600"/><circle cx="109.3" cy="171.5" r="2.600"/><circle cx="117.1" cy="171.5" r="2.600"/><circle cx="126.7" cy="171.5" r="2.600"/><circle cx="140.3" cy="171.5" r="2.600"/><circle cx="147.5" cy="171.5" r="2.600"/><circle cx="155.3" cy="171.5" r="2.600"/><circle cx="163.3" cy="171.5" r="2.600"/><circle cx="171.1" cy="171.5" r="2.600"/><circle cx="179.1" cy="171.5" r="2.600"/><circle cx="188.7" cy="171.5" r="2.600"/><circle cx="196.7" cy="171.5" r="2.600"/><circle cx="206.8" cy="171.5" r="2.600"/><circle cx="216.4" cy="171.5" r="2.600"/><circle cx="224.4" cy="171.5" r="2.600"/><circle cx="232.2" cy="171.5" r="2.600"/><circle cx="240.2" cy="171.5" r="2.600"/><circle cx="249.7" cy="171.5" r="2.600"/><circle cx="259.3" cy="171.5" r="2.600"/><circle cx="267.1" cy="171.5" r="2.600"/><circle cx="277.2" cy="171.5" r="2.600"/><circle cx="284.4" cy="171.5" r="2.600"/><circle cx="291.5" cy="171.5" r="2.600"/><circle cx="301.1" cy="171.5" r="2.600"/><circle cx="309.1" cy="171.5" r="2.600"/><circle cx="316.3" cy="171.5" r="2.600"/><circle cx="323.4" cy="171.5" r="2.600"/><circle cx="331.2" cy="171.5" r="2.600"/><circle cx="341.4" cy="171.5" r="2.600"/><circle cx="349.4" cy="171.5" r="2.600"/><circle cx="358.9" cy="171.5" r="2.600"/><circle cx="366.7" cy="171.5" r="2.600"/><circle cx="376.3" cy="171.5" r="2.600"/><circle cx="383.4" cy="171.5" r="2.600"/><circle cx="391.2" cy="171.5" r="2.600"/><circle cx="398.4" cy="171.5" r="2.600"/><circle cx="412.1" cy="171.5" r="2.600"/><circle cx="419.9" cy="171.5" r="2.600"/><circle cx="427.0" cy="171.5" r="2.600"/><circle cx="436.5" cy="171.5" r="2.600"/><circle cx="443.7" cy="171.5" r="2.600"/><circle cx="451.5" cy="171.5" r="2.600"/><circle cx="461.0" cy="171.5" r="2.600"/><circle cx="468.2" cy="171.5" r="2.600"/><circle cx="478.4" cy="171.5" r="2.600"/><circle cx="486.2" cy="171.5" r="2.600"/><circle cx="493.3" cy="171.5" r="2.600"/><circle cx="500.5" cy="171.5" r="2.600"/><circle cx="507.7" cy="171.5" r="2.600"/><circle cx="515.7" cy="171.5" r="2.600"/><circle cx="523.5" cy="171.5" r="2.600"/><circle cx="531.5" cy="171.5" r="2.600"/><circle cx="541.7" cy="171.5" r="2.600"/><circle cx="549.5" cy="171.5" r="2.600"/><circle cx="557.3" cy="171.5" r="2.600"/><circle cx="565.1" cy="171.5" r="2.600"/><circle cx="573.1" cy="171.5" r="2.600"/><circle cx="582.6" cy="171.5" r="2.600"/><circle cx="590.4" cy="171.5" r="2.600"/><circle cx="600.0" cy="171.5" r="2.600"/><circle cx="610.1" cy="171.5" r="2.600"/><circle cx="618.1" cy="171.5" r="2.600"/><circle cx="626.2" cy="171.5" r="2.600"/><circle cx="634.0" cy="171.5" r="2.600"/><circle cx="642.0" cy="171.5" r="2.600"/><circle cx="649.8" cy="171.5" r="2.600"/><circle cx="657.6" cy="170.5" r="2.600"/><circle cx="664.8" cy="170.5" r="2.600"/><circle cx="674.9" cy="170.5" r="2.600"/></g></svg>
<div style="top:741.70px;font-size:12px;line-height:15px;color:#000;white-space:nowrap;letter-spacing:-0.591px;right:1475px;text-align:right;">80.0</div>
<div style="left:516px;top:749px;width:6px;height:1px;background:#000;"></div>
<div style="top:764.96px;font-size:12px;line-height:15px;color:#000;white-space:nowrap;letter-spacing:-0.591px;right:1475px;text-align:right;">70.0</div>
<div style="left:516px;top:772px;width:6px;height:1px;background:#000;"></div>
<div style="top:788.22px;font-size:12px;line-height:15px;color:#000;white-space:nowrap;letter-spacing:-0.591px;right:1475px;text-align:right;">60.0</div>
<div style="left:516px;top:795px;width:6px;height:1px;background:#000;"></div>
<div style="top:811.48px;font-size:12px;line-height:15px;color:#000;white-space:nowrap;letter-spacing:-0.591px;right:1475px;text-align:right;">50.0</div>
<div style="left:516px;top:818px;width:6px;height:1px;background:#000;"></div>
<div style="top:834.74px;font-size:12px;line-height:15px;color:#000;white-space:nowrap;letter-spacing:-0.591px;right:1475px;text-align:right;">40.0</div>
<div style="left:516px;top:842px;width:6px;height:1px;background:#000;"></div>
<div style="top:858.00px;font-size:12px;line-height:15px;color:#000;white-space:nowrap;letter-spacing:-0.591px;right:1475px;text-align:right;">30.0</div>
<div style="left:516px;top:865px;width:6px;height:1px;background:#000;"></div>
<div style="top:881.26px;font-size:12px;line-height:15px;color:#000;white-space:nowrap;letter-spacing:-0.591px;right:1475px;text-align:right;">20.0</div>
<div style="left:516px;top:888px;width:6px;height:1px;background:#000;"></div>
<div style="top:904.52px;font-size:12px;line-height:15px;color:#000;white-space:nowrap;letter-spacing:-0.591px;right:1475px;text-align:right;">10.0</div>
<div style="left:516px;top:912px;width:6px;height:1px;background:#000;"></div>
<div style="top:927.78px;font-size:12px;line-height:15px;color:#000;white-space:nowrap;letter-spacing:-0.729px;right:1475px;text-align:right;">0.0</div>
<div style="left:516px;top:935px;width:6px;height:1px;background:#000;"></div>
<div style="left:525px;top:937px;width:1px;height:5px;background:#000;"></div>
<div style="top:943.00px;font-size:12px;line-height:15px;color:#000;white-space:nowrap;letter-spacing:-0.808px;left:225.0px;width:600px;text-align:center;">14:14</div>
<div style="left:581px;top:937px;width:1px;height:5px;background:#000;"></div>
<div style="top:943.00px;font-size:12px;line-height:15px;color:#000;white-space:nowrap;letter-spacing:-0.808px;left:281.29999999999995px;width:600px;text-align:center;">14:14</div>
<div style="left:638px;top:937px;width:1px;height:5px;background:#000;"></div>
<div style="top:943.00px;font-size:12px;line-height:15px;color:#000;white-space:nowrap;letter-spacing:-0.808px;left:337.6px;width:600px;text-align:center;">14:14</div>
<div style="left:694px;top:937px;width:1px;height:5px;background:#000;"></div>
<div style="top:943.00px;font-size:12px;line-height:15px;color:#000;white-space:nowrap;letter-spacing:-0.808px;left:393.9px;width:600px;text-align:center;">14:14</div>
<div style="left:750px;top:937px;width:1px;height:5px;background:#000;"></div>
<div style="top:943.00px;font-size:12px;line-height:15px;color:#000;white-space:nowrap;letter-spacing:-0.808px;left:450.20000000000005px;width:600px;text-align:center;">14:14</div>
<div style="left:806px;top:937px;width:1px;height:5px;background:#000;"></div>
<div style="top:943.00px;font-size:12px;line-height:15px;color:#000;white-space:nowrap;letter-spacing:-0.808px;left:506.5px;width:600px;text-align:center;">14:14</div>
<div style="left:863px;top:937px;width:1px;height:5px;background:#000;"></div>
<div style="top:943.00px;font-size:12px;line-height:15px;color:#000;white-space:nowrap;letter-spacing:-0.808px;left:562.8px;width:600px;text-align:center;">14:15</div>
<div style="left:919px;top:937px;width:1px;height:5px;background:#000;"></div>
<div style="top:943.00px;font-size:12px;line-height:15px;color:#000;white-space:nowrap;letter-spacing:-0.808px;left:619.0999999999999px;width:600px;text-align:center;">14:15</div>
<div style="left:975px;top:937px;width:1px;height:5px;background:#000;"></div>
<div style="top:943.00px;font-size:12px;line-height:15px;color:#000;white-space:nowrap;letter-spacing:-0.808px;left:675.4px;width:600px;text-align:center;">14:15</div>
<div style="left:1032px;top:937px;width:1px;height:5px;background:#000;"></div>
<div style="top:943.00px;font-size:12px;line-height:15px;color:#000;white-space:nowrap;letter-spacing:-0.808px;left:731.7px;width:600px;text-align:center;">14:15</div>
<div style="left:1088px;top:937px;width:1px;height:5px;background:#000;"></div>
<div style="top:943.00px;font-size:12px;line-height:15px;color:#000;white-space:nowrap;letter-spacing:-0.808px;left:788.0px;width:600px;text-align:center;">14:15</div>
<div style="left:1144px;top:937px;width:1px;height:5px;background:#000;"></div>
<div style="top:943.00px;font-size:12px;line-height:15px;color:#000;white-space:nowrap;letter-spacing:-0.808px;left:844.3px;width:600px;text-align:center;">14:15</div>
<div style="left:1201px;top:937px;width:1px;height:5px;background:#000;"></div>
<div style="top:943.00px;font-size:12px;line-height:15px;color:#000;white-space:nowrap;letter-spacing:-0.808px;left:900.5999999999999px;width:600px;text-align:center;">14:16</div>
<div style="left:1243px;top:937px;width:1px;height:5px;background:#000;"></div>
<div style="top:943.00px;font-size:12px;line-height:15px;color:#000;white-space:nowrap;letter-spacing:-0.808px;left:943px;width:600px;text-align:center;">14:16</div>
<div style="left:283.5px;top:832.00px;width:400px;text-align:center;font-size:12px;line-height:15px;color:#000;white-space:nowrap;transform:rotate(-90deg);transform-origin:50% 50%;letter-spacing:-0.048px;">Temperature (K)</div>
<div style="left:885px;top:746px;width:8px;height:2px;background:#333;"></div>
<svg style="left:517px;top:964px;" width="727" height="175" viewBox="0 0 727 175" ><rect width="727" height="175" fill="#000"/><path d="M11.4 0V175M22.8 0V175M34.1 0V175M45.5 0V175M68.3 0V175M79.7 0V175M91.0 0V175M102.4 0V175M125.2 0V175M136.6 0V175M147.9 0V175M159.3 0V175M182.1 0V175M193.5 0V175M204.8 0V175M216.2 0V175M239.0 0V175M250.4 0V175M261.7 0V175M273.1 0V175M295.9 0V175M307.3 0V175M318.6 0V175M330.0 0V175M352.8 0V175M364.2 0V175M375.5 0V175M386.9 0V175M409.7 0V175M421.1 0V175M432.4 0V175M443.8 0V175M466.6 0V175M478.0 0V175M489.3 0V175M500.7 0V175M523.5 0V175M534.9 0V175M546.2 0V175M557.6 0V175M580.4 0V175M591.8 0V175M603.1 0V175M614.5 0V175M637.3 0V175M648.7 0V175M660.0 0V175M671.4 0V175M694.2 0V175M705.6 0V175M716.9 0V175M0 8.7H727M0 17.4H727M0 26.2H727M0 43.6H727M0 52.3H727M0 61.1H727M0 78.5H727M0 87.2H727M0 96.0H727M0 113.4H727M0 122.1H727M0 130.9H727M0 148.3H727M0 157.0H727M0 165.8H727" stroke="#5c5600" stroke-width="1" fill="none" shape-rendering="crispEdges"/><path d="M56.9 0V175M113.8 0V175M170.7 0V175M227.6 0V175M284.5 0V175M341.4 0V175M398.3 0V175M455.2 0V175M512.1 0V175M569.0 0V175M625.9 0V175M682.8 0V175M0 34.9H727M0 69.8H727M0 104.7H727M0 139.6H727" stroke="#a0a000" stroke-width="1" fill="none" shape-rendering="crispEdges"/><path d="M4.2 89.0h3.600M6.0 87.2v3.600M12.0 94.2h3.600M13.8 92.4v3.600M21.5 108.2h3.600M23.3 106.4v3.600M29.3 103.0h3.600M31.1 101.2v3.600M36.5 103.8h3.600M38.3 102.0v3.600M46.0 109.9h3.600M47.8 108.1v3.600M53.2 76.8h3.600M55.0 75.0v3.600M62.7 113.4h3.600M64.5 111.6v3.600M72.8 96.8h3.600M74.6 95.0v3.600M80.9 76.8h3.600M82.7 75.0v3.600M88.9 82.0h3.600M90.7 80.2v3.600M96.1 109.9h3.600M97.9 108.1v3.600M104.1 71.5h3.600M105.9 69.7v3.600M111.3 109.9h3.600M113.1 108.1v3.600M118.5 103.0h3.600M120.3 101.2v3.600M125.6 113.4h3.600M127.4 111.6v3.600M135.8 104.7h3.600M137.6 102.9v3.600M145.3 78.5h3.600M147.1 76.7v3.600M152.5 103.8h3.600M154.3 102.0v3.600M162.0 96.8h3.600M163.8 95.0v3.600M169.8 90.7h3.600M171.6 88.9v3.600M177.0 94.2h3.600M178.8 92.4v3.600M184.1 89.0h3.600M185.9 87.2v3.600M193.7 90.7h3.600M195.5 88.9v3.600M203.8 95.1h3.600M205.6 93.3v3.600M211.6 97.7h3.600M213.4 95.9v3.600M219.6 97.7h3.600M221.4 95.9v3.600M227.7 96.0h3.600M229.5 94.2v3.600M237.2 103.0h3.600M239.0 101.2v3.600M245.0 91.6h3.600M246.8 89.8v3.600M252.2 88.1h3.600M254.0 86.3v3.600M260.0 87.2h3.600M261.8 85.5v3.600M273.6 84.6h3.600M275.4 82.8v3.600M281.4 95.1h3.600M283.2 93.3v3.600M290.9 90.7h3.600M292.7 88.9v3.600M300.4 78.5h3.600M302.2 76.7v3.600M308.2 97.7h3.600M310.0 95.9v3.600M316.0 110.8h3.600M317.8 109.0v3.600M324.1 95.1h3.600M325.9 93.3v3.600M333.6 98.6h3.600M335.4 96.8v3.600M343.7 92.5h3.600M345.5 90.7v3.600M351.5 89.0h3.600M353.3 87.2v3.600M359.3 89.0h3.600M361.1 87.2v3.600M368.9 115.2h3.600M370.7 113.4v3.600M376.7 75.0h3.600M378.5 73.2v3.600M386.2 103.0h3.600M388.0 101.2v3.600M394.0 99.5h3.600M395.8 97.7v3.600M402.0 115.2h3.600M403.8 113.4v3.600M412.1 99.5h3.600M413.9 97.7v3.600M419.9 104.7h3.600M421.7 102.9v3.600M427.7 96.0h3.600M429.5 94.2v3.600M435.8 96.0h3.600M437.6 94.2v3.600M443.6 118.7h3.600M445.4 116.9v3.600M451.4 102.1h3.600M453.2 100.3v3.600M459.4 103.0h3.600M461.2 101.2v3.600M467.2 108.2h3.600M469.0 106.4v3.600M477.3 87.2h3.600M479.1 85.5v3.600M486.9 75.0h3.600M488.7 73.2v3.600M496.4 106.4h3.600M498.2 104.6v3.600M505.9 94.2h3.600M507.7 92.4v3.600M513.1 104.7h3.600M514.9 102.9v3.600M521.1 97.7h3.600M522.9 95.9v3.600M528.3 94.2h3.600M530.1 92.4v3.600M536.1 76.8h3.600M537.9 75.0v3.600M546.2 94.2h3.600M548.0 92.4v3.600M553.4 103.0h3.600M555.2 101.2v3.600M561.2 99.5h3.600M563.0 97.7v3.600M569.0 89.9h3.600M570.8 88.1v3.600M576.8 84.6h3.600M578.6 82.8v3.600M584.0 84.6h3.600M585.8 82.8v3.600M591.8 71.5h3.600M593.6 69.7v3.600M599.0 91.6h3.600M600.8 89.8v3.600M612.6 93.4h3.600M614.4 91.6v3.600M619.8 82.9h3.600M621.6 81.1v3.600M627.6 89.9h3.600M629.4 88.1v3.600M635.4 99.5h3.600M637.2 97.7v3.600M643.4 96.8h3.600M645.2 95.0v3.600M651.2 109.1h3.600M653.0 107.3v3.600M659.0 102.1h3.600M660.8 100.3v3.600M667.0 98.6h3.600M668.8 96.8v3.600M677.2 102.1h3.600M679.0 100.3v3.600" stroke="#6cff10" stroke-width="1.500" fill="none"/><path d="M6.0 174.0L13.8 174.0L23.3 171.9L31.1 170.9L38.3 174.0L47.8 173.1L55.0 174.0L64.5 174.0L74.6 174.0L82.7 174.0L90.7 171.9L97.9 173.1L105.9 174.0L113.1 171.9L120.3 170.9L127.4 170.9L137.6 174.0L147.1 173.1L154.3 173.1L163.8 174.0L171.6 170.9L178.8 171.9L185.9 171.9L195.5 174.0L205.6 174.0L213.4 171.9L221.4 170.9L229.5 174.0L239.0 173.1L246.8 174.0L254.0 174.0L261.8 174.0L275.4 170.9L283.2 174.0L292.7 174.0L302.2 174.0L310.0 171.9L317.8 174.0L325.9 170.9L335.4 174.0L345.5 171.9L353.3 173.1L361.1 174.0L370.7 174.0L378.5 174.0L388.0 173.1L395.8 174.0L403.8 174.0L413.9 174.0L421.7 174.0L429.5 171.9L437.6 171.9L445.4 174.0L453.2 170.9L461.2 174.0L469.0 173.1L479.1 173.1L488.7 174.0L498.2 174.0L507.7 174.0L514.9 174.0L522.9 174.0L530.1 171.9L537.9 173.1L548.0 174.0L555.2 171.9L563.0 170.9L570.8 170.9L578.6 174.0L585.8 174.0L593.6 171.9L600.8 174.0L614.4 170.9L621.6 174.0L629.4 174.0L637.2 174.0L645.2 173.1L653.0 174.0L660.8 174.0L668.8 174.0L679.0 174.0" stroke="#f01040" stroke-width="1.200" fill="none"/><g fill="#f01040"><circle cx="6.0" cy="174.0" r="2.2"/><circle cx="13.8" cy="174.0" r="2.2"/><circle cx="23.3" cy="171.9" r="2.7"/><circle cx="31.1" cy="170.9" r="2.7"/><circle cx="38.3" cy="174.0" r="2.2"/><circle cx="47.8" cy="173.1" r="2.2"/><circle cx="55.0" cy="174.0" r="2.2"/><circle cx="64.5" cy="174.0" r="2.2"/><circle cx="74.6" cy="174.0" r="2.2"/><circle cx="82.7" cy="174.0" r="2.2"/><circle cx="90.7" cy="171.9" r="2.7"/><circle cx="97.9" cy="173.1" r="2.2"/><circle cx="105.9" cy="174.0" r="2.2"/><circle cx="113.1" cy="171.9" r="2.7"/><circle cx="120.3" cy="170.9" r="2.7"/><circle cx="127.4" cy="170.9" r="2.7"/><circle cx="137.6" cy="174.0" r="2.2"/><circle cx="147.1" cy="173.1" r="2.2"/><circle cx="154.3" cy="173.1" r="2.2"/><circle cx="163.8" cy="174.0" r="2.2"/><circle cx="171.6" cy="170.9" r="2.7"/><circle cx="178.8" cy="171.9" r="2.7"/><circle cx="185.9" cy="171.9" r="2.7"/><circle cx="195.5" cy="174.0" r="2.2"/><circle cx="205.6" cy="174.0" r="2.2"/><circle cx="213.4" cy="171.9" r="2.7"/><circle cx="221.4" cy="170.9" r="2.7"/><circle cx="229.5" cy="174.0" r="2.2"/><circle cx="239.0" cy="173.1" r="2.2"/><circle cx="246.8" cy="174.0" r="2.2"/><circle cx="254.0" cy="174.0" r="2.2"/><circle cx="261.8" cy="174.0" r="2.2"/><circle cx="275.4" cy="170.9" r="2.7"/><circle cx="283.2" cy="174.0" r="2.2"/><circle cx="292.7" cy="174.0" r="2.2"/><circle cx="302.2" cy="174.0" r="2.2"/><circle cx="310.0" cy="171.9" r="2.7"/><circle cx="317.8" cy="174.0" r="2.2"/><circle cx="325.9" cy="170.9" r="2.7"/><circle cx="335.4" cy="174.0" r="2.2"/><circle cx="345.5" cy="171.9" r="2.7"/><circle cx="353.3" cy="173.1" r="2.2"/><circle cx="361.1" cy="174.0" r="2.2"/><circle cx="370.7" cy="174.0" r="2.2"/><circle cx="378.5" cy="174.0" r="2.2"/><circle cx="388.0" cy="173.1" r="2.2"/><circle cx="395.8" cy="174.0" r="2.2"/><circle cx="403.8" cy="174.0" r="2.2"/><circle cx="413.9" cy="174.0" r="2.2"/><circle cx="421.7" cy="174.0" r="2.2"/><circle cx="429.5" cy="171.9" r="2.7"/><circle cx="437.6" cy="171.9" r="2.7"/><circle cx="445.4" cy="174.0" r="2.2"/><circle cx="453.2" cy="170.9" r="2.7"/><circle cx="461.2" cy="174.0" r="2.2"/><circle cx="469.0" cy="173.1" r="2.2"/><circle cx="479.1" cy="173.1" r="2.2"/><circle cx="488.7" cy="174.0" r="2.2"/><circle cx="498.2" cy="174.0" r="2.2"/><circle cx="507.7" cy="174.0" r="2.2"/><circle cx="514.9" cy="174.0" r="2.2"/><circle cx="522.9" cy="174.0" r="2.2"/><circle cx="530.1" cy="171.9" r="2.7"/><circle cx="537.9" cy="173.1" r="2.2"/><circle cx="548.0" cy="174.0" r="2.2"/><circle cx="555.2" cy="171.9" r="2.7"/><circle cx="563.0" cy="170.9" r="2.7"/><circle cx="570.8" cy="170.9" r="2.7"/><circle cx="578.6" cy="174.0" r="2.2"/><circle cx="585.8" cy="174.0" r="2.2"/><circle cx="593.6" cy="171.9" r="2.7"/><circle cx="600.8" cy="174.0" r="2.2"/><circle cx="614.4" cy="170.9" r="2.7"/><circle cx="621.6" cy="174.0" r="2.2"/><circle cx="629.4" cy="174.0" r="2.2"/><circle cx="637.2" cy="174.0" r="2.2"/><circle cx="645.2" cy="173.1" r="2.2"/><circle cx="653.0" cy="174.0" r="2.2"/><circle cx="660.8" cy="174.0" r="2.2"/><circle cx="668.8" cy="174.0" r="2.2"/><circle cx="679.0" cy="174.0" r="2.2"/></g></svg>
<div style="top:957.70px;font-size:12px;line-height:15px;color:#000;white-space:nowrap;letter-spacing:-0.176px;right:1482px;text-align:right;">100</div>
<div style="left:509px;top:965px;width:6px;height:1px;background:#000;"></div>
<div style="top:992.52px;font-size:12px;line-height:15px;color:#000;white-space:nowrap;letter-spacing:-0.176px;right:1482px;text-align:right;">80</div>
<div style="left:509px;top:1000px;width:6px;height:1px;background:#000;"></div>
<div style="top:1027.34px;font-size:12px;line-height:15px;color:#000;white-space:nowrap;letter-spacing:-0.176px;right:1482px;text-align:right;">60</div>
<div style="left:509px;top:1034px;width:6px;height:1px;background:#000;"></div>
<div style="top:1062.16px;font-size:12px;line-height:15px;color:#000;white-space:nowrap;letter-spacing:-0.176px;right:1482px;text-align:right;">40</div>
<div style="left:509px;top:1069px;width:6px;height:1px;background:#000;"></div>
<div style="top:1096.98px;font-size:12px;line-height:15px;color:#000;white-space:nowrap;letter-spacing:-0.176px;right:1482px;text-align:right;">20</div>
<div style="left:509px;top:1104px;width:6px;height:1px;background:#000;"></div>
<div style="top:1131.80px;font-size:12px;line-height:15px;color:#000;white-space:nowrap;right:1482px;text-align:right;">0</div>
<div style="left:509px;top:1139px;width:6px;height:1px;background:#000;"></div>
<div style="left:518px;top:1141px;width:1px;height:5px;background:#000;"></div>
<div style="top:1146.00px;font-size:12px;line-height:15px;color:#000;white-space:nowrap;letter-spacing:-0.808px;left:218.0px;width:600px;text-align:center;">14:14</div>
<div style="left:575px;top:1141px;width:1px;height:5px;background:#000;"></div>
<div style="top:1146.00px;font-size:12px;line-height:15px;color:#000;white-space:nowrap;letter-spacing:-0.808px;left:274.87px;width:600px;text-align:center;">14:14</div>
<div style="left:632px;top:1141px;width:1px;height:5px;background:#000;"></div>
<div style="top:1146.00px;font-size:12px;line-height:15px;color:#000;white-space:nowrap;letter-spacing:-0.808px;left:331.74px;width:600px;text-align:center;">14:14</div>
<div style="left:689px;top:1141px;width:1px;height:5px;background:#000;"></div>
<div style="top:1146.00px;font-size:12px;line-height:15px;color:#000;white-space:nowrap;letter-spacing:-0.808px;left:388.61px;width:600px;text-align:center;">14:14</div>
<div style="left:745px;top:1141px;width:1px;height:5px;background:#000;"></div>
<div style="top:1146.00px;font-size:12px;line-height:15px;color:#000;white-space:nowrap;letter-spacing:-0.808px;left:445.48px;width:600px;text-align:center;">14:14</div>
<div style="left:802px;top:1141px;width:1px;height:5px;background:#000;"></div>
<div style="top:1146.00px;font-size:12px;line-height:15px;color:#000;white-space:nowrap;letter-spacing:-0.808px;left:502.3499999999999px;width:600px;text-align:center;">14:14</div>
<div style="left:859px;top:1141px;width:1px;height:5px;background:#000;"></div>
<div style="top:1146.00px;font-size:12px;line-height:15px;color:#000;white-space:nowrap;letter-spacing:-0.808px;left:559.22px;width:600px;text-align:center;">14:15</div>
<div style="left:916px;top:1141px;width:1px;height:5px;background:#000;"></div>
<div style="top:1146.00px;font-size:12px;line-height:15px;color:#000;white-space:nowrap;letter-spacing:-0.808px;left:616.0899999999999px;width:600px;text-align:center;">14:15</div>
<div style="left:973px;top:1141px;width:1px;height:5px;background:#000;"></div>
<div style="top:1146.00px;font-size:12px;line-height:15px;color:#000;white-space:nowrap;letter-spacing:-0.808px;left:672.96px;width:600px;text-align:center;">14:15</div>
<div style="left:1030px;top:1141px;width:1px;height:5px;background:#000;"></div>
<div style="top:1146.00px;font-size:12px;line-height:15px;color:#000;white-space:nowrap;letter-spacing:-0.808px;left:729.8299999999999px;width:600px;text-align:center;">14:15</div>
<div style="left:1087px;top:1141px;width:1px;height:5px;background:#000;"></div>
<div style="top:1146.00px;font-size:12px;line-height:15px;color:#000;white-space:nowrap;letter-spacing:-0.808px;left:786.6999999999998px;width:600px;text-align:center;">14:15</div>
<div style="left:1144px;top:1141px;width:1px;height:5px;background:#000;"></div>
<div style="top:1146.00px;font-size:12px;line-height:15px;color:#000;white-space:nowrap;letter-spacing:-0.808px;left:843.5699999999999px;width:600px;text-align:center;">14:15</div>
<div style="left:1200px;top:1141px;width:1px;height:5px;background:#000;"></div>
<div style="top:1146.00px;font-size:12px;line-height:15px;color:#000;white-space:nowrap;letter-spacing:-0.808px;left:900.44px;width:600px;text-align:center;">14:16</div>
<div style="left:1243px;top:1141px;width:1px;height:5px;background:#000;"></div>
<div style="top:1146.00px;font-size:12px;line-height:15px;color:#000;white-space:nowrap;letter-spacing:-0.808px;left:943px;width:600px;text-align:center;">14:16</div>
<div style="left:280.5px;top:1042.50px;width:400px;text-align:center;font-size:12px;line-height:15px;color:#000;white-space:nowrap;transform:rotate(-90deg);transform-origin:50% 50%;letter-spacing:-0.044px;">Counts per second</div>
<div style="left:850px;top:962px;width:8px;height:2px;background:#333;"></div>
<div style="left:1266px;top:545px;width:20px;height:153px;background:#b4b4b4;box-sizing:border-box;border:3px solid;border-color:#d8ccb8 #8a8a8a #9a8c78 #d8ccb8;"></div>
<div style="left:1270.5px;top:553px;width:14px;height:14px;border-radius:50%;background:radial-gradient(circle at 40% 35%,#fff 0,#ff2020 35%,#a00000 100%);"></div>
<div style="left:1270.5px;top:585px;width:14px;height:14px;border-radius:50%;background:radial-gradient(circle at 40% 35%,#fff 0,#40f020 35%,#108000 100%);"></div>
<div style="left:1270.5px;top:617px;width:14px;height:14px;border-radius:50%;background:radial-gradient(circle at 40% 35%,#fff 0,#4080ff 35%,#1030a0 100%);"></div>
<div style="left:1270.5px;top:648.5px;width:14px;height:14px;border-radius:50%;background:radial-gradient(circle at 40% 35%,#fff 0,#ffff40 35%,#a0a000 100%);"></div>
<div style="left:1270.5px;top:675.5px;width:14px;height:14px;border-radius:50%;background:radial-gradient(circle at 40% 35%,#fff 0,#e0a8d8 35%,#906090 100%);"></div>
<div style="left:1264px;top:703px;width:22px;height:23px;background:#c8c8c8;box-sizing:border-box;border:1px solid;border-color:#f0f0f0 #777 #777 #f0f0f0;background:linear-gradient(#e4e4e4,#b8b8b8);"></div>
<div style="left:1277px;top:708px;width:3px;height:10px;background:#406040;"></div>
<div style="top:756.00px;font-size:12px;line-height:15px;color:#000;white-space:nowrap;letter-spacing:-0.009px;left:1262px;">bou</div>
<div style="top:771.50px;font-size:12px;line-height:15px;color:#000;white-space:nowrap;letter-spacing:0.244px;left:1262px;">prop</div>
<div style="left:1282px;top:469px;width:17px;height:693px;background:#f0f0f0;"></div>
<div style="left:1282px;top:469px;width:16px;height:491px;background:#c8c8c8;"></div>
<div style="left:1299px;top:469px;width:5px;height:693px;background:#b4b4b4;"></div>
<div style="left:1299px;top:469px;width:5px;height:39px;background:#e4e4e4;"></div>
<div style="left:1299px;top:508px;width:5px;height:72px;background:#c4143a;"></div>
<div style="left:1299px;top:597px;width:5px;height:25px;background:#c4143a;"></div>
<div style="left:1299px;top:640px;width:5px;height:34px;background:#c4143a;"></div>
<div style="left:1299px;top:762px;width:5px;height:22px;background:#c4143a;"></div>
<div style="left:1299px;top:800px;width:5px;height:22px;background:#000;"></div>
<div style="left:1299px;top:822px;width:5px;height:82px;background:#dcdcdc;"></div>
<div style="left:1299px;top:904px;width:5px;height:41px;background:#c8c8c8;"></div>
<div style="left:1299px;top:945px;width:5px;height:47px;background:#000;"></div>
<div style="left:1299px;top:992px;width:5px;height:17px;background:#aaa;"></div>
<div style="left:1299px;top:1009px;width:5px;height:153px;background:#000;"></div>
<div style="left:1300px;top:470px;width:3px;height:38px;border-left:2px dotted #333;"></div>
<div style="left:1300px;top:520px;width:3px;height:5px;background:#701028;"></div>
<div style="left:1300px;top:658px;width:3px;height:6px;background:#701028;"></div>
<div style="left:1300px;top:688px;width:3px;height:6px;background:#555;"></div>
<div style="left:1300px;top:772px;width:4px;height:6px;background:#701028;"></div>
<div style="left:1300px;top:832px;width:3px;height:8px;background:#8890b0;"></div>
<div style="left:1300px;top:872px;width:4px;height:7px;background:#302040;"></div>
<div style="left:1304px;top:469px;width:17px;height:693px;background:#f0f0f0;"></div>
<div style="left:1305px;top:601px;width:15px;height:316px;background:#cdcdcd;"></div>
<svg style="left:1304px;top:470px;" width="17" height="15" viewBox="0 0 17 15" ><path d="M4.500 10L8.500 6L12.500 10" stroke="#404040" stroke-width="2" fill="none"/></svg>
<svg style="left:1304px;top:1146px;" width="17" height="15" viewBox="0 0 17 15" ><path d="M4.500 5L8.500 9L12.500 5" stroke="#404040" stroke-width="2" fill="none"/></svg>
<div style="left:446px;top:1162px;width:875px;height:17px;background:#f0f0f0;"></div>
<div style="left:553px;top:1163px;width:276px;height:16px;background:#cdcdcd;"></div>
<svg style="left:446px;top:1162px;" width="17" height="17" viewBox="0 0 17 17" ><path d="M10 4.500L6 8.500L10 12.500" stroke="#404040" stroke-width="2" fill="none"/></svg>
<svg style="left:1287px;top:1162px;" width="17" height="17" viewBox="0 0 17 17" ><path d="M6 4.500L10 8.500L6 12.500" stroke="#404040" stroke-width="2" fill="none"/></svg>
<svg style="left:1304px;top:1162px;" width="17" height="17" viewBox="0 0 17 17" ><path d="M12 5v2M9 8v2M12 8v2M6 11v2M9 11v2M12 11v2" stroke="#b0b0b0" stroke-width="2"/></svg>
<div style="left:445px;top:438px;width:1px;height:742px;background:#444;"></div>
<div style="left:445px;top:1179px;width:876px;height:1px;background:#333;"></div></div>
<div style="left:20px;top:772px;width:418px;height:412px;box-shadow:0 1px 9px rgba(0,0,0,.5);"></div>
<!-- partS -->
<div class="win" style="clip-path:inset(772px 1551px 0px 0px)"><div style="left:0px;top:772px;width:20px;height:412px;background:#fff;"></div>
<svg style="left:0px;top:782px;" width="8" height="12" viewBox="0 0 8 12" ><path d="M-4 0.500L4.500 10.500M4.500 0.500L-4 10.500" stroke="#777" stroke-width="1"/></svg>
<div style="left:0px;top:805px;width:20px;height:46px;background:#f0f0f0;"></div>
<div style="left:0px;top:850px;width:20px;height:1px;background:#808080;"></div>
<div style="left:-10px;top:811px;width:29px;height:32px;background:#fff;border:1px solid #000;box-sizing:border-box;"></div>
<div style="top:812.00px;font-size:8px;line-height:10px;color:#000;white-space:nowrap;font-weight:bold;left:0px;">ck</div>
<svg style="left:0px;top:812px;" width="18" height="30" viewBox="0 0 18 30" ><path d="M-2 27h6q5 0 5-6v-8q0-6 5-6h3" stroke="#000" stroke-width="1.200" fill="none"/></svg>
<div style="left:0px;top:851px;width:20px;height:333px;background:#f0f0f0;"></div>
<svg style="left:3px;top:852.5px;" width="16" height="14" viewBox="0 0 16 14" ><path d="M4.500 9.500L8 6L11.500 9.500" stroke="#404040" stroke-width="1.800" fill="none"/></svg>
<div style="left:0px;top:869px;width:19px;height:315px;background:#cdcdcd;"></div>
<div style="left:0px;top:851px;width:2px;height:333px;background:#b4b4b4;"></div>
<div style="left:14px;top:772px;width:6px;height:412px;background:linear-gradient(90deg,rgba(0,0,0,0),rgba(0,0,0,.28));"></div>
<div style="left:20px;top:772px;width:418px;height:412px;background:#fff;"></div>
<div style="left:19px;top:772px;width:1px;height:412px;background:#8a8a8a;"></div>
<div style="top:782.00px;font-size:12px;line-height:15px;color:#999;white-space:nowrap;letter-spacing:-0.576px;left:49.5px;">SaveTrack.vi</div>
<div style="left:319px;top:788px;width:11px;height:1px;background:#8a8a8a;"></div>
<div style="left:364px;top:783px;width:10px;height:10px;border:1px solid #8a8a8a;box-sizing:border-box;"></div>
<svg style="left:409px;top:782px;" width="12" height="12" viewBox="0 0 12 12" ><path d="M0.500 0.500L11.500 11.500M11.500 0.500L0.500 11.500" stroke="#8a8a8a" stroke-width="1"/></svg>
<div style="left:20px;top:805px;width:418px;height:46px;background:#f0f0f0;"></div>
<div style="left:20px;top:825px;width:384px;height:1px;background:#a0a0a0;"></div>
<div style="left:20px;top:850px;width:418px;height:1px;background:#808080;"></div>
<div style="left:403px;top:805px;width:1px;height:46px;background:#8a8a8a;"></div>
<div style="top:807.00px;font-size:12px;line-height:15px;color:#000;white-space:nowrap;letter-spacing:-0.336px;left:25px;">File</div>
<div style="top:807.00px;font-size:12px;line-height:15px;color:#000;white-space:nowrap;letter-spacing:-0.171px;left:57.5px;">Edit</div>
<div style="top:807.00px;font-size:12px;line-height:15px;color:#000;white-space:nowrap;letter-spacing:-0.267px;left:91.5px;">Operate</div>
<div style="top:807.00px;font-size:12px;line-height:15px;color:#000;white-space:nowrap;letter-spacing:-0.005px;left:147.5px;">Tools</div>
<div style="top:807.00px;font-size:12px;line-height:15px;color:#000;white-space:nowrap;letter-spacing:0.218px;left:189px;">Window</div>
<div style="top:807.00px;font-size:12px;line-height:15px;color:#000;white-space:nowrap;letter-spacing:-0.047px;left:247px;">Help</div>
<svg style="left:70.5px;top:829.5px;" width="18" height="18" viewBox="0 0 18 18" ><g transform="translate(9 9)"><path d="M-4.500 -2.500h4v-3.200l6 5.700l-6 5.700v-3.200h-4z" fill="#fff" stroke="#000" stroke-width="1.500" stroke-linejoin="miter"/><path d="M-2 0h4M0.800 -1.600l1.700 1.600l-1.700 1.600" stroke="#000" stroke-width="1" fill="none"/></g></svg>
<svg style="left:117.5px;top:829.5px;" width="18" height="18" viewBox="0 0 18 18" ><g transform="translate(9 9)"><path d="M-3.200 -7.500h6.400l4.300 4.300v6.400l-4.300 4.300h-6.400l-4.300-4.300v-6.400z" fill="#f4f4f4" stroke="#9a9a9a" stroke-width="1.200"/><path d="M-2.400 -5.200h4.800l2.800 2.800v4.800l-2.800 2.800h-4.800l-2.800-2.800v-4.800z" fill="#e4a8a8"/></g></svg>
<div style="left:405px;top:811px;width:32px;height:32px;background:#fff;border:1px solid #000;box-sizing:border-box;"></div>
<svg style="left:406px;top:812px;" width="30" height="30" viewBox="0 0 30 30" ><path d="M3 6h6l2.500 2.500v8.500h-8.500z" fill="#c8f0ff" stroke="#7070c8" stroke-width="1"/><path d="M4.500 10.500h5M4.500 12.500h5M4.500 14.500h5" stroke="#80c8f0" stroke-width="0.900"/><path d="M17 17.500h-6M13.500 15l-3 2.500l3 2.500" stroke="#2848e0" stroke-width="1.600" fill="none"/><path d="M11.500 30q1.500-2.500 4-2.500h3.500q3 0 4-3.500v-4.500q0.500-5.500 4-5.500h1.500" stroke="#000" stroke-width="1.300" fill="none"/></svg>
<div style="left:20px;top:851px;width:402px;height:333px;background:#e4e4e4;"></div>
<div style="left:422px;top:851px;width:16px;height:333px;background:#f0f0f0;"></div>
<div style="left:422px;top:873px;width:16px;height:311px;background:#cdcdcd;"></div>
<svg style="left:422px;top:852.5px;" width="16" height="14" viewBox="0 0 16 14" ><path d="M4.500 9.500L8 6L11.500 9.500" stroke="#404040" stroke-width="1.800" fill="none"/></svg>
<div style="left:70px;top:855px;width:351px;height:23px;background:#b8b8b8;background:linear-gradient(90deg,#d0d0d0 0,#bcbcbc 14px,#b6b6b6 40px,#b6b6b6 338px,#a0a0a0 351px);border-bottom:1px solid #8a8a8a;border-top:1px solid #d8d8d8;box-sizing:border-box;"></div>
<div style="top:859.00px;font-size:12px;line-height:15px;color:#000;white-space:nowrap;letter-spacing:-1.500px;left:109px;">TD</div>
<div style="left:134px;top:857px;width:28px;height:18px;background:#000;"></div>
<svg style="left:134px;top:857px;" width="28" height="18" viewBox="0 0 28 18" ><path d="M2 13.500L14 3.500L26 13.500" fill="none" stroke="#fff" stroke-width="1.800"/></svg>
<div style="top:859.00px;font-size:12px;line-height:15px;color:#000;white-space:nowrap;letter-spacing:0.223px;left:181px;">AMT</div>
<div style="left:217px;top:857px;width:28px;height:18px;background:#000;"></div>
<svg style="left:217px;top:857px;" width="28" height="18" viewBox="0 0 28 18" ><path d="M2 13.500L14 3.500L26 13.500" fill="none" stroke="#f04040" stroke-width="1.800"/></svg>
<div style="top:859.00px;font-size:12px;line-height:15px;color:#000;white-space:nowrap;letter-spacing:-0.574px;left:252.5px;">Brescia</div>
<div style="left:300px;top:857px;width:28px;height:18px;background:#000;"></div>
<svg style="left:300px;top:857px;" width="28" height="18" viewBox="0 0 28 18" ><path d="M2 13.500L14 3.500L26 13.500" fill="none" stroke="#20e020" stroke-width="1.800"/></svg>
<div style="top:859.00px;font-size:12px;line-height:15px;color:#000;white-space:nowrap;letter-spacing:-1.059px;left:348px;">BGO</div>
<div style="left:383px;top:857px;width:28px;height:18px;background:#000;"></div>
<svg style="left:383px;top:857px;" width="28" height="18" viewBox="0 0 28 18" ><path d="M2 13.500L14 3.500L26 13.500" fill="none" stroke="#3890f0" stroke-width="1.800"/></svg>
<div style="left:30px;top:880px;width:391px;height:304px;background:#b8b8b8;border-top:1px solid #d8d8d8;background:linear-gradient(90deg,#d2d2d2 0,#c4c4c4 12px,#b8b8b8 14px,#b8b8b8 376px,#a6a6a6 380px,#9a9a9a 391px);box-sizing:border-box;"></div>
<svg style="left:120px;top:888px;" width="282" height="296" viewBox="0 0 282 296" ><rect width="282" height="296" fill="#000"/><path d="M6.4 0V296M12.8 0V296M19.1 0V296M31.9 0V296M38.2 0V296M44.6 0V296M51.0 0V296M57.3 0V296M63.7 0V296M70.0 0V296M82.8 0V296M89.1 0V296M95.5 0V296M101.8 0V296M108.2 0V296M114.6 0V296M120.9 0V296M133.7 0V296M140.0 0V296M146.4 0V296M152.8 0V296M159.1 0V296M165.5 0V296M171.8 0V296M184.6 0V296M190.9 0V296M197.3 0V296M203.7 0V296M210.0 0V296M216.4 0V296M222.7 0V296M235.5 0V296M241.8 0V296M248.2 0V296M254.5 0V296M260.9 0V296M267.3 0V296M273.6 0V296M0 8.5H282M0 15.4H282M0 22.4H282M0 36.3H282M0 43.3H282M0 50.3H282M0 64.2H282M0 71.2H282M0 78.1H282M0 92.1H282M0 99.0H282M0 106.0H282M0 119.9H282M0 126.9H282M0 133.9H282M0 147.8H282M0 154.8H282M0 161.7H282M0 175.7H282M0 182.6H282M0 189.6H282M0 203.5H282M0 210.5H282M0 217.5H282M0 231.4H282M0 238.4H282M0 245.3H282M0 259.3H282M0 266.2H282M0 273.2H282M0 287.1H282M0 294.1H282" stroke="#003a00" stroke-width="1" fill="none" shape-rendering="crispEdges"/><path d="M25.5 0V296M76.4 0V296M127.3 0V296M178.2 0V296M229.1 0V296M280.0 0V296M0 1.5H282M0 29.4H282M0 57.2H282M0 85.1H282M0 113.0H282M0 140.8H282M0 168.7H282M0 196.6H282M0 224.5H282M0 252.3H282M0 280.2H282" stroke="#006600" stroke-width="1" fill="none" shape-rendering="crispEdges"/><path d="M266.500 296V290h2V10q0-4.500 4-4.500H282" stroke="#f04848" stroke-width="1.600" fill="none"/></svg>
<div style="top:882.60px;font-size:12px;line-height:15px;color:#000;white-space:nowrap;letter-spacing:-0.842px;right:1877px;text-align:right;">220000</div>
<div style="left:114px;top:890px;width:5px;height:1px;background:#000;"></div>
<div style="top:910.47px;font-size:12px;line-height:15px;color:#000;white-space:nowrap;letter-spacing:-0.842px;right:1877px;text-align:right;">200000</div>
<div style="left:114px;top:917px;width:5px;height:1px;background:#000;"></div>
<div style="top:938.34px;font-size:12px;line-height:15px;color:#000;white-space:nowrap;letter-spacing:-0.842px;right:1877px;text-align:right;">180000</div>
<div style="left:114px;top:945px;width:5px;height:1px;background:#000;"></div>
<div style="top:966.21px;font-size:12px;line-height:15px;color:#000;white-space:nowrap;letter-spacing:-0.842px;right:1877px;text-align:right;">160000</div>
<div style="left:114px;top:973px;width:5px;height:1px;background:#000;"></div>
<div style="top:994.08px;font-size:12px;line-height:15px;color:#000;white-space:nowrap;letter-spacing:-0.842px;right:1877px;text-align:right;">140000</div>
<div style="left:114px;top:1001px;width:5px;height:1px;background:#000;"></div>
<div style="top:1021.95px;font-size:12px;line-height:15px;color:#000;white-space:nowrap;letter-spacing:-0.842px;right:1877px;text-align:right;">120000</div>
<div style="left:114px;top:1029px;width:5px;height:1px;background:#000;"></div>
<div style="top:1049.82px;font-size:12px;line-height:15px;color:#000;white-space:nowrap;letter-spacing:-0.842px;right:1877px;text-align:right;">100000</div>
<div style="left:114px;top:1057px;width:5px;height:1px;background:#000;"></div>
<div style="top:1077.69px;font-size:12px;line-height:15px;color:#000;white-space:nowrap;letter-spacing:-0.876px;right:1877px;text-align:right;">80000</div>
<div style="left:114px;top:1085px;width:5px;height:1px;background:#000;"></div>
<div style="top:1105.56px;font-size:12px;line-height:15px;color:#000;white-space:nowrap;letter-spacing:-0.876px;right:1877px;text-align:right;">60000</div>
<div style="left:114px;top:1113px;width:5px;height:1px;background:#000;"></div>
<div style="top:1133.43px;font-size:12px;line-height:15px;color:#000;white-space:nowrap;letter-spacing:-0.876px;right:1877px;text-align:right;">40000</div>
<div style="left:114px;top:1140px;width:5px;height:1px;background:#000;"></div>
<div style="top:1161.30px;font-size:12px;line-height:15px;color:#000;white-space:nowrap;letter-spacing:-0.876px;right:1877px;text-align:right;">20000</div>
<div style="left:114px;top:1168px;width:5px;height:1px;background:#000;"></div>
<div style="left:-135px;top:1035.50px;width:400px;text-align:center;font-size:12px;line-height:15px;color:#000;white-space:nowrap;transform:rotate(-90deg);transform-origin:50% 50%;letter-spacing:0.292px;">Amplitude</div></div>
</body></html>
